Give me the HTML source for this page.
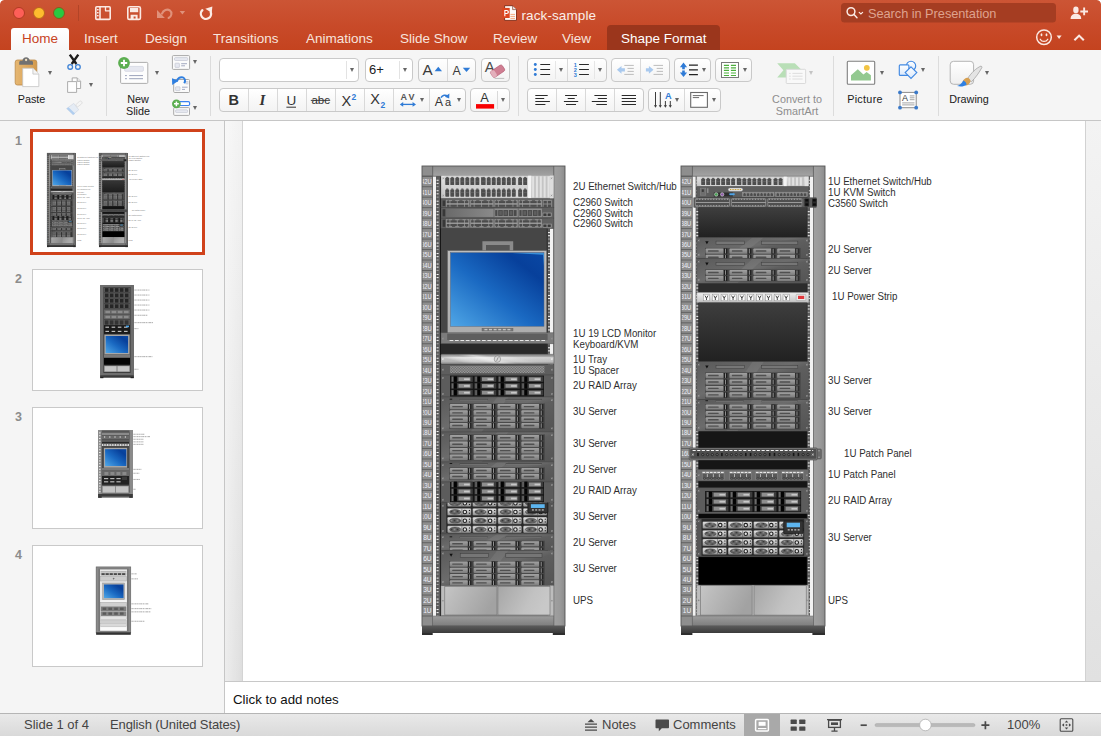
<!DOCTYPE html>
<html>
<head>
<meta charset="utf-8">
<title>rack-sample</title>
<style>
*{box-sizing:border-box;margin:0;padding:0}
html,body{width:1101px;height:736px;overflow:hidden;background:#f5f5f5;font-family:"Liberation Sans",sans-serif;}
.abs{position:absolute}
#titlebar{position:absolute;left:0;top:0;width:1101px;height:50px;background:linear-gradient(#cc5535 0px,#c84a29 26px,#c4431f 50px);}
.tab{position:absolute;top:30px;height:18px;line-height:18px;font-size:13.5px;color:#f7e4dd;white-space:nowrap}
#hometab{position:absolute;left:11px;top:28px;width:58px;height:23px;background:linear-gradient(#ffffff,#f6f6f6);border-radius:3px 3px 0 0}
#sftab{position:absolute;left:607px;top:25px;width:113px;height:25px;background:#9b361c;border-radius:4px 4px 0 0}
#ribbon{position:absolute;left:0;top:50px;width:1101px;height:71px;background:#f5f5f5;border-bottom:1px solid #c6c6c6}
.btn{position:absolute;background:linear-gradient(#ffffff,#f3f3f3);border:1px solid #c9c9c9;border-radius:4px}
.vdiv{position:absolute;width:1px;background:#d9d9d9}
.sep{position:absolute;width:1px;background:#dcdcdc;top:56px;height:60px}
.lbl{position:absolute;font-size:10.8px;color:#1a1a1a;text-align:center;white-space:nowrap;line-height:12px}
.arr{position:absolute;width:0;height:0;margin-left:0.5px;border-left:2.9px solid transparent;border-right:2.9px solid transparent;border-top:4px solid #666}
#leftpanel{position:absolute;left:0;top:121px;width:224px;height:592px;background:#f5f5f5}
#lpborder{position:absolute;left:224px;top:121px;width:1px;height:592px;background:#c6c6c6}
#strip{position:absolute;left:225px;top:121px;width:18px;height:560px;border-right:1px solid #d4d4d4;background:linear-gradient(90deg,rgba(255,255,255,0.45),rgba(255,255,255,0)),linear-gradient(180deg,#f2f2f2,#dedede)}
#rstrip{position:absolute;left:1085px;top:121px;width:16px;height:560px;background:linear-gradient(180deg,#f3f3f3,#e1e1e1);border-left:1px solid #d2d2d2}
#slide{position:absolute;left:243px;top:121px;width:842px;height:560px;background:#fff}
#notes{position:absolute;left:225px;top:681px;width:876px;height:32px;background:#fff;border-top:1px solid #c8c8c8}
#notes span{position:absolute;left:8px;top:10px;font-size:13.3px;color:#111;line-height:15px}
#status{position:absolute;left:0;top:713px;width:1101px;height:23px;background:linear-gradient(#e9e9e9,#d9d9d9);border-top:1px solid #b5b5b5}
.st{position:absolute;top:3px;font-size:13px;color:#444;line-height:15px;white-space:nowrap}
.num{position:absolute;left:15px;font-size:12.5px;font-weight:bold;color:#8c8c8c;line-height:14px}
.thumb{position:absolute;left:32px;width:171px;height:122px;background:#fff;border:1px solid #c9c9c9}
svg{position:absolute;left:0;top:0;overflow:visible}
</style>
</head>
<body>

<div id="leftpanel"></div>
<div id="lpborder"></div>
<div id="strip"></div>
<div id="slide"></div>
<div id="rstrip"></div>
<div id="notes"><span>Click to add notes</span></div>
<div id="status">
  <div class="st" style="left:24px">Slide 1 of 4</div>
  <div class="st" style="left:110px;letter-spacing:-0.12px">English (United States)</div>
  <div class="st" style="left:602px">Notes</div>
  <div class="st" style="left:673px">Comments</div>
  <div class="st" style="left:1007px">100%</div>
  <div class="abs" style="left:744px;top:0;width:36px;height:22px;background:#a9a9a9"></div>
  <svg width="1101" height="22" viewBox="0 713 1101 22" style="top:0">
    <!-- notes icon -->
    <g stroke="#4a4a4a" stroke-width="1.2"><path d="M585 723.2h12M585 726.200h12M585 729.200h12"/></g>
    <path d="M587.400 721.200l3.600-3.200l3.600 3.200z" fill="#4a4a4a"/>
    <!-- comments icon -->
    <path d="M656.500 718.600h11.500c0.600 0 1 0.400 1 1v6.600c0 0.600-0.400 1-1 1h-6.200l-3 3v-3h-2.300c-0.600 0-1-0.400-1-1v-6.600c0-0.600 0.400-1 1-1z" fill="#4a4a4a"/>
    <!-- normal view (selected) -->
    <rect x="755.600" y="718.400" width="12.800" height="11.600" rx="1" fill="none" stroke="#fff" stroke-width="1.500"/>
    <rect x="758.600" y="720.800" width="7" height="4" fill="#fff"/>
    <path d="M758 727.600h8.400" stroke="#fff" stroke-width="1.200"/>
    <!-- grid view -->
    <g fill="#4a4a4a"><rect x="790.600" y="718.600" width="6.200" height="4.400" rx="0.600"/><rect x="799.200" y="718.600" width="6.200" height="4.400" rx="0.600"/><rect x="790.600" y="725.400" width="6.200" height="4.400" rx="0.600"/><rect x="799.200" y="725.400" width="6.200" height="4.400" rx="0.600"/></g>
    <!-- slideshow -->
    <g fill="none" stroke="#4a4a4a" stroke-width="1.300"><rect x="828.600" y="719.200" width="11.800" height="7.200"/><path d="M827 718.600h15M834.500 726.400v3.400M831.400 730.200h6.200"/></g>
    <rect x="831" y="721.400" width="7" height="2.600" fill="#4a4a4a"/>
    <!-- zoom -->
    <path d="M860.600 724.200h6.200" stroke="#4a4a4a" stroke-width="1.700"/>
    <path d="M981.400 724.200h8M985.400 720.200v8" stroke="#4a4a4a" stroke-width="1.700"/>
    <rect x="875" y="722.600" width="100" height="3" rx="1.500" fill="#b9b9b9" stroke="#a6a6a6" stroke-width="0.500"/>
    <circle cx="925.400" cy="724" r="5.800" fill="#fff" stroke="#b0b0b0" stroke-width="0.800"/>
    <!-- fit -->
    <g fill="none" stroke="#4a4a4a" stroke-width="1.100"><rect x="1060.200" y="717.700" width="12.600" height="12.600" rx="1"/></g>
    <g fill="#4a4a4a"><path d="M1066.500 719.400l1.800 2.200h-3.600zM1066.500 728.600l1.800-2.200h-3.600zM1061.900 724l2.200-1.800v3.600zM1071.100 724l-2.200-1.800v3.600z"/><rect x="1065.700" y="723.200" width="1.600" height="1.600"/></g>
  </svg>
</div>
<div class="num" style="top:134px">1</div>
<div class="num" style="top:272px">2</div>
<div class="num" style="top:410px">3</div>
<div class="num" style="top:548px">4</div>
<div class="abs" style="left:30px;top:129px;width:175px;height:126px;background:#fff;border:3px solid #d0421b"></div>
<div class="thumb" style="top:269px"></div>
<div class="thumb" style="top:407px"></div>
<div class="thumb" style="top:545px"></div>

<div id="titlebar">
  <div class="abs" style="left:0;top:0;width:4px;height:4px;background:radial-gradient(circle at 4px 4px,rgba(255,255,255,0) 3.4px,#fff 4.2px)"></div>
  <div class="abs" style="left:1097px;top:0;width:4px;height:4px;background:radial-gradient(circle at 0px 4px,rgba(255,255,255,0) 3.4px,#fff 4.2px)"></div>
  <!-- traffic lights -->
  <div class="abs" style="left:12.5px;top:6.5px;width:12.6px;height:12.6px;border-radius:6.3px;background:#fe5f58;border:0.8px solid #b03a22"></div>
  <div class="abs" style="left:32.5px;top:6.5px;width:12.6px;height:12.6px;border-radius:6.3px;background:#febc2e;border:0.8px solid #b9671c"></div>
  <div class="abs" style="left:52.5px;top:6.5px;width:12.6px;height:12.6px;border-radius:6.3px;background:#29c941;border:0.8px solid #8a5a1c"></div>
  <div class="abs" style="left:78px;top:5px;width:1px;height:16px;background:#b24427"></div>
  <svg width="1101" height="50" viewBox="0 0 1101 50">
    <!-- sidebar/page icon -->
    <g fill="none" stroke="#fbe9e3" stroke-width="1.6" stroke-linejoin="round">
      <rect x="95.8" y="6.8" width="14.4" height="12.6" rx="1"/>
      <path d="M100 7v12" />
      <path d="M105.5 7v3.8h4.6" stroke-width="1.3"/>
    </g>
    <g fill="#fbe9e3"><rect x="97" y="9" width="1.6" height="1.4"/><rect x="97" y="12" width="1.6" height="1.4"/><rect x="97" y="15" width="1.6" height="1.4"/></g>
    <!-- save icon -->
    <g fill="none" stroke="#fbe9e3" stroke-width="1.6" stroke-linejoin="round">
      <rect x="127.8" y="6.8" width="12.6" height="12.6" rx="1.5"/>
    </g>
    <rect x="130" y="8" width="8.2" height="4.2" fill="#fbe9e3"/>
    <path d="M130.6 19v-4.2h7v4.2h-2v-2.4h-2v2.4z" fill="#fbe9e3"/>
    <!-- undo (faded) -->
    <path d="M162 13.600C163.400 10 167.200 8.600 169.800 10.400C172.400 12.300 171.800 16.400 168.600 18" fill="none" stroke="#e0917a" stroke-width="2.100" stroke-linecap="round"/>
    <path d="M157 9.900v8h7.900z" fill="#e0917a"/>
    <path d="M179.700 10.900h5.400l-2.700 3.700z" fill="#e0917a"/>
    <!-- redo -->
    <path d="M202.400 10.200A5.100 5.100 0 1 0 210.700 12" fill="none" stroke="#fcebe5" stroke-width="2.300" stroke-linecap="round"/>
    <path d="M205.300 8.700l7.100-2.300l-0.700 6.400z" fill="#fcebe5"/>
    <!-- ppt doc icon -->
    <g>
      <path d="M504.6 5.7h8l3.900 3.900v10.800h-11.900z" fill="#fdfaf8" stroke="#7d2712" stroke-width="0.9" stroke-linejoin="round"/>
      <path d="M512.600 5.700v3.900h3.900" fill="#e9e4e2" stroke="#7d2712" stroke-width="0.6"/>
      <g stroke="#f0a070" stroke-width="0.9"><path d="M510.400 14.400h4.600M510.400 16.400h4.600M510.400 18.400h4.600"/></g>
      <rect x="502.200" y="7.900" width="7.500" height="10.100" fill="#dc4520"/>
      <path d="M504.300 16.200v-6.200h2.300c1.500 0 2.300 0.900 2.300 2s-0.800 2-2.300 2h-1.200v2.200z M505.400 11v2h1.100c0.700 0 1.100-0.400 1.100-1s-0.400-1-1.100-1z" fill="#fff" fill-rule="evenodd"/>
    </g>
    <!-- search box -->
    <rect x="841" y="3" width="215" height="19.5" rx="3.5" fill="#a53d22"/>
    <g fill="none" stroke="#fbe9e3" stroke-width="1.5" stroke-linecap="round">
      <circle cx="851" cy="11.6" r="3.9"/>
      <path d="M854 14.6l3 3.2"/>
      <path d="M859.2 12.3l1.7 1.7l1.7-1.7" stroke-width="1.2"/>
    </g>
    <!-- share icon -->
    <g fill="#fbe9e3">
      <ellipse cx="1075.900" cy="9.900" rx="2.700" ry="3.300"/>
      <path d="M1070.600 19c0-3.900 2.300-5.300 5.300-5.300s5.300 1.400 5.300 5.300z"/>
      <path d="M1080.300 10.500h2.900v-2.900h1.900v2.900h2.900v1.900h-2.900v2.900h-1.900v-2.900h-2.900z"/>
    </g>
    <!-- smiley -->
    <g fill="none" stroke="#fbe9e3" stroke-width="1.5">
      <circle cx="1044" cy="37.200" r="7.300"/>
      <path d="M1040.200 39.200c1.600 3 6 3 7.600 0" stroke-linecap="round" stroke-width="1.3"/>
    </g>
    <ellipse cx="1041.500" cy="34.800" rx="0.900" ry="1.500" fill="#fbe9e3"/><ellipse cx="1046.500" cy="34.800" rx="0.900" ry="1.500" fill="#fbe9e3"/>
    <path d="M1056.6 35.4h5l-2.5 3.6z" fill="#fbe9e3"/>
    <path d="M1074.4 40.2l4.7-4.6l4.7 4.6" fill="none" stroke="#fbe9e3" stroke-width="2.1"/>
  </svg>
  <div class="abs" style="left:521.5px;top:6.5px;font-size:13.5px;color:#fbeee9;line-height:18px;letter-spacing:0.1px">rack-sample</div>
  <div class="abs" style="left:868px;top:5px;font-size:12.8px;color:#dfa28e;line-height:18px;letter-spacing:-0.05px">Search in Presentation</div>
  <div id="hometab"></div>
  <div id="sftab"></div>
  <div class="tab" style="left:22px;color:#c8431f">Home</div>
  <div class="tab" style="left:84px">Insert</div>
  <div class="tab" style="left:145px">Design</div>
  <div class="tab" style="left:213px">Transitions</div>
  <div class="tab" style="left:306px">Animations</div>
  <div class="tab" style="left:400px">Slide Show</div>
  <div class="tab" style="left:493px">Review</div>
  <div class="tab" style="left:562px">View</div>
  <div class="tab" style="left:621px;color:#fff">Shape Format</div>
</div>

<div id="ribbon"></div>
<!-- separators -->
<div class="sep" style="left:106px"></div>
<div class="sep" style="left:210px"></div>
<div class="sep" style="left:518px"></div>
<div class="sep" style="left:833px"></div>
<div class="sep" style="left:938px"></div>
<!-- button groups row1 -->
<div class="btn" style="left:219px;top:58px;width:140px;height:24px;background:#fff"></div>
<div class="vdiv" style="left:346px;top:61px;height:18px;background:#e3e3e3"></div>
<div class="btn" style="left:365px;top:58px;width:48px;height:24px;background:#fff"></div>
<div class="vdiv" style="left:399px;top:61px;height:18px;background:#e3e3e3"></div>
<div class="btn" style="left:417.5px;top:58px;width:58.5px;height:24px"></div>
<div class="vdiv" style="left:446.5px;top:59px;height:22px"></div>
<div class="btn" style="left:480.5px;top:58px;width:29.5px;height:24px"></div>
<!-- row2 -->
<div class="btn" style="left:219px;top:88px;width:247px;height:24px"></div>
<div class="vdiv" style="left:248px;top:89px;height:22px"></div>
<div class="vdiv" style="left:277px;top:89px;height:22px"></div>
<div class="vdiv" style="left:306px;top:89px;height:22px"></div>
<div class="vdiv" style="left:335px;top:89px;height:22px"></div>
<div class="vdiv" style="left:364px;top:89px;height:22px"></div>
<div class="vdiv" style="left:393px;top:89px;height:22px"></div>
<div class="vdiv" style="left:429px;top:89px;height:22px"></div>
<div class="btn" style="left:470px;top:88px;width:40px;height:24px"></div>
<div class="vdiv" style="left:497px;top:91px;height:18px"></div>
<!-- paragraph row1 -->
<div class="btn" style="left:527px;top:58px;width:80px;height:24px"></div>
<div class="vdiv" style="left:555px;top:61px;height:18px;background:#e6e6e6"></div>
<div class="vdiv" style="left:567px;top:59px;height:22px"></div>
<div class="vdiv" style="left:594px;top:61px;height:18px;background:#e6e6e6"></div>
<div class="btn" style="left:611px;top:58px;width:59px;height:24px"></div>
<div class="vdiv" style="left:640px;top:59px;height:22px"></div>
<div class="btn" style="left:674px;top:58px;width:37px;height:24px"></div>
<div class="btn" style="left:715px;top:58px;width:37px;height:24px"></div>
<!-- paragraph row2 -->
<div class="btn" style="left:527px;top:88px;width:117px;height:24px"></div>
<div class="vdiv" style="left:556px;top:89px;height:22px"></div>
<div class="vdiv" style="left:585px;top:89px;height:22px"></div>
<div class="vdiv" style="left:614px;top:89px;height:22px"></div>
<div class="btn" style="left:648px;top:88px;width:73px;height:24px"></div>
<div class="vdiv" style="left:684px;top:89px;height:22px"></div>
<!-- labels -->
<div class="lbl" style="left:11px;top:93px;width:41px">Paste</div>
<div class="lbl" style="left:118px;top:93px;width:40px">New</div>
<div class="lbl" style="left:118px;top:105px;width:40px">Slide</div>
<div class="lbl" style="left:762px;top:93px;width:70px;color:#8d8d8d">Convert to</div>
<div class="lbl" style="left:762px;top:105px;width:70px;color:#8d8d8d">SmartArt</div>
<div class="lbl" style="left:840px;top:93px;width:50px;letter-spacing:0.3px">Picture</div>
<div class="lbl" style="left:944px;top:93px;width:50px">Drawing</div>
<div class="abs" style="left:369px;top:62px;font-size:13px;line-height:16px;color:#222">6+</div>
<!-- dropdown arrows -->
<div class="arr" style="left:47px;top:71px"></div>
<div class="arr" style="left:88px;top:83px"></div>
<div class="arr" style="left:154px;top:71px"></div>
<div class="arr" style="left:192px;top:60px"></div>
<div class="arr" style="left:192.500px;top:106px"></div>
<div class="arr" style="left:349px;top:68px"></div>
<div class="arr" style="left:402px;top:68px"></div>
<div class="arr" style="left:419px;top:98px"></div>
<div class="arr" style="left:456px;top:98px"></div>
<div class="arr" style="left:500px;top:98px"></div>
<div class="arr" style="left:558px;top:68px"></div>
<div class="arr" style="left:597px;top:68px"></div>
<div class="arr" style="left:701px;top:68px"></div>
<div class="arr" style="left:742px;top:68px"></div>
<div class="arr" style="left:674px;top:98px"></div>
<div class="arr" style="left:711px;top:98px"></div>
<div class="arr" style="left:808.7px;top:71.200px;border-top-color:#c4c4c4"></div>
<div class="arr" style="left:879.300px;top:71px"></div>
<div class="arr" style="left:920px;top:68px"></div>
<div class="arr" style="left:984px;top:71px"></div>

<svg width="1101" height="121" viewBox="0 0 1101 121">
<defs>
<linearGradient id="clipg" x1="0" x2="1"><stop offset="0" stop-color="#e6b772"/><stop offset="1" stop-color="#d39a4c"/></linearGradient>
</defs>
<!-- Paste -->
<rect x="15.200" y="60" width="21.600" height="25" rx="2.200" fill="url(#clipg)" stroke="#bb8946" stroke-width="0.8"/>
<path d="M19.200 64.800v-2.400c0-1 0.700-1.700 1.700-1.700h1.500c0.300-2.300 1.700-3.500 3.700-3.500s3.400 1.200 3.700 3.500h1.500c1 0 1.700 0.700 1.700 1.700v2.400z" fill="#717171"/>
<circle cx="26.100" cy="60" r="1.150" fill="#f3e2c4"/>
<path d="M22.700 68.200h10.200l5.900 5.900v12.500h-16.100z" fill="#fff" stroke="#c4c4c4" stroke-width="0.8"/>
<path d="M32.900 68.200v5.900h5.900" fill="#f4f4f4" stroke="#c4c4c4" stroke-width="0.8"/>
<!-- scissors -->
<g fill="none" stroke="#1c1c1c" stroke-width="2.400" stroke-linecap="butt"><path d="M69.800 54.600l6.600 9.400M78.300 54.600l-6.600 9.400"/></g>
<g fill="none" stroke="#3d82d6" stroke-width="1.300"><circle cx="70.200" cy="66.900" r="2.350"/><circle cx="77.900" cy="66.900" r="2.350"/></g>
<!-- copy -->
<g fill="#fdfdfd" stroke="#a4a4a4" stroke-width="0.9"><path d="M72.200 77.900h5l3.400 3.400v7.200h-8.400z"/><path d="M77.200 77.900v3.400h3.400" fill="#f0f0f0"/><path d="M67.600 81.600h9v10.800h-9z"/></g>
<!-- format painter (faded) -->
<g opacity="0.85">
<path d="M66.600 108.600l7.200-5.200l4.900 6.400l-5.600 4.700z" fill="#e3ebf5" stroke="#c6cfdb" stroke-width="0.6"/>
<path d="M66.600 108.600l1.900-1.400l6.600 6.300l-2 1.600z" fill="#a6c8ee"/>
<path d="M75.700 104.800l3.600-3.300c0.800-0.700 2-0.500 2.500 0.300c0.500 0.800 0.300 1.700-0.500 2.300l-3.900 3z" fill="#f6f6f6" stroke="#cdcdcd" stroke-width="0.6"/>
</g>
<!-- New slide -->
<rect x="120.600" y="62.400" width="27.200" height="21" rx="1" fill="#fdfdfd" stroke="#adadad" stroke-width="1"/>
<rect x="124.600" y="66.400" width="18.800" height="4.900" rx="1" fill="#e6e8f0" stroke="#c8cbd8" stroke-width="0.6"/>
<g stroke="#9ca3bb" stroke-width="1"><path d="M125 75.600h1.900M129.200 75.600h13.800M125 78.700h1.900M129.200 78.700h13.800"/></g>
<circle cx="124" cy="63" r="5.900" fill="#5bae50"/>
<path d="M120.800 63h6.400M124 59.800v6.400" stroke="#fff" stroke-width="1.800"/>
<!-- layout -->
<rect x="172.400" y="55.600" width="17.200" height="13.800" rx="1" fill="#fbfbfb" stroke="#a8a8a8" stroke-width="1"/>
<rect x="174.500" y="57.600" width="13.200" height="2.900" rx="0.900" fill="#e6e8f0" stroke="#bcbfcc" stroke-width="0.6"/>
<rect x="175" y="63.200" width="4.400" height="4.200" rx="0.500" fill="#e6e8f0" stroke="#bcbfcc" stroke-width="0.6"/>
<path d="M181.200 63.700h5.800M181.200 65.800h3.800" stroke="#9ca3bb" stroke-width="0.9"/>
<!-- reset -->
<rect x="173.700" y="79.500" width="15.800" height="13" rx="1" fill="#fbfbfb" stroke="#a8a8a8" stroke-width="1"/>
<rect x="186" y="81.600" width="2" height="2.400" fill="#e6e8f0" stroke="#bcbfcc" stroke-width="0.500"/>
<rect x="175.600" y="86.800" width="4.400" height="3.800" rx="0.500" fill="#e6e8f0" stroke="#bcbfcc" stroke-width="0.6"/>
<path d="M182 87.200h5.600M182 89.400h3" stroke="#9ca3bb" stroke-width="0.9"/>
<path d="M176.800 81.600c0.600-3.600 3.600-5 6-4.200c2.200 0.800 3 3.400 1.400 5.800" fill="none" stroke="#2f7fe0" stroke-width="2"/>
<path d="M172 78.200l6.600 2.600l-6.400 4.200z" fill="#2f7fe0"/>
<!-- section -->
<rect x="173.700" y="107.600" width="15.800" height="7.800" rx="1" fill="#fbfbfb" stroke="#a8a8a8" stroke-width="1"/>
<rect x="175.600" y="109.800" width="12" height="2.800" rx="0.900" fill="#e6e8f0" stroke="#bcbfcc" stroke-width="0.6"/>
<rect x="179" y="101.700" width="10.600" height="3.800" rx="1.200" fill="#fff" stroke="#3b82f0" stroke-width="1.200"/>
<circle cx="176.400" cy="103.800" r="4.400" fill="#5bae50"/>
<path d="M174 103.800h4.800M176.400 101.400v4.800" stroke="#fff" stroke-width="1.500"/>
<!-- A up / A down -->
<g font-family="Liberation Sans" fill="#3a3a3a"><text x="422.600" y="75" font-size="15.200">A</text><text x="452.600" y="74.700" font-size="12.400">A</text></g>
<path d="M434.600 71.200h7.400l-3.700-4.400z" fill="#2f7bd6"/>
<path d="M462.800 67.800h7.400l-3.700 4.200z" fill="#2f7bd6"/>
<!-- clear formatting -->
<text x="484.800" y="71.800" font-family="Liberation Sans" font-size="14.800" fill="#4a4a4a">A</text>
<g transform="translate(497.600 71.200) rotate(-34)"><rect x="-7" y="-3.600" width="14" height="7.200" rx="1.800" fill="#cf7e92" stroke="#b2576f" stroke-width="0.6"/><rect x="-7" y="-3.600" width="4.600" height="7.200" rx="1.800" fill="#e3afbb"/></g>
<path d="M494.600 78.400h9.600" stroke="#b9b9b9" stroke-width="0.9"/>
<!-- B I U abc X2 X2 -->
<g font-family="Liberation Sans" fill="#333">
<text x="228.600" y="105.200" font-size="14.500" font-weight="bold">B</text>
<text x="259.400" y="105.200" font-size="15" font-style="italic" font-family="Liberation Serif" font-weight="bold">I</text>
<text x="286.600" y="104.600" font-size="13.500">U</text>
<text x="311.400" y="104" font-size="11.500">abc</text>
<text x="341.600" y="106.400" font-size="14.500">X</text>
<text x="370.200" y="104.400" font-size="14.500">X</text>
<text x="400.400" y="99.800" font-size="9" font-weight="bold" fill="#555">A</text><text x="408.400" y="99.800" font-size="9" font-weight="bold" fill="#555">V</text>
<text x="434.800" y="105.500" font-size="12.400">A</text><text x="445" y="105.500" font-size="11">a</text>
<text x="480.200" y="101.900" font-size="12.800">A</text>
</g>
<path d="M286.400 107.200h9.600" stroke="#333" stroke-width="1"/>
<path d="M310.800 100.400h19.400" stroke="#333" stroke-width="0.9"/>
<g font-family="Liberation Sans" fill="#2f7bd6" font-weight="bold"><text x="351.400" y="99.800" font-size="8.500">2</text><text x="380.400" y="108" font-size="8.500">2</text></g>
<g stroke="#2f7bd6" stroke-width="1.300" fill="#2f7bd6"><path d="M401.800 104.400h12.400" /><path d="M399.800 104.400l3.400-2.400v4.800zM416 104.400l-3.400-2.400v4.800z" stroke="none"/></g>
<path d="M441 97.600c1.400-2.600 4.600-3.200 6.600-1.400" fill="none" stroke="#2f7bd6" stroke-width="1.500"/><path d="M449.400 93.400l-0.200 5.200l-4.400-1.800z" fill="#2f7bd6"/>
<rect x="476" y="104.100" width="18.100" height="4.500" fill="#f80000"/>
<!-- bullets -->
<g fill="#2f7bd6"><circle cx="535.300" cy="64.500" r="1.450"/><circle cx="535.300" cy="69.500" r="1.450"/><circle cx="535.300" cy="74.500" r="1.450"/></g>
<g stroke="#2a2a2a" stroke-width="1.050"><path d="M540.300 64.500h9.800M540.300 69.500h9.800M540.300 74.500h9.800"/></g>
<g font-family="Liberation Sans" fill="#2f7bd6" font-size="5.600" font-weight="bold"><text x="573.700" y="66.500">1</text><text x="573.700" y="71.500">2</text><text x="573.700" y="76.500">3</text></g>
<g stroke="#2a2a2a" stroke-width="1.050"><path d="M579.100 64.500h9.800M579.100 69.500h9.800M579.100 74.500h9.800"/></g>
<!-- indent (faded) -->
<g stroke="#bcbcbc" stroke-width="1"><path d="M624.300 65.400h9.500M627.500 68.400h6.300M627.500 71.400h6.300M624.300 74.400h9.500"/><path d="M653.500 65.400h9.500M656.700 68.400h6.300M656.700 71.400h6.300M653.500 74.400h9.500"/></g>
<path d="M616.900 69.800l4.600-3.900v2.300h3.400v3.200h-3.400v2.300z" fill="#a9c9ee"/>
<path d="M653.500 69.800l-4.600-3.900v2.300h-3v3.200h3v2.300z" fill="#a9c9ee"/>
<!-- line spacing -->
<g stroke="#222" stroke-width="1.300"><path d="M689 65.100h8.900M689 69.800h8.900M689 74.600h8.900"/></g>
<path d="M683.500 62.600l3.600 4.600h-2.300v2h-2.600v-2h-2.300zM683.500 77l3.600-4.600h-2.300v-2h-2.600v2h-2.300z" fill="#2f7bd6"/>
<!-- columns -->
<rect x="721.500" y="62.500" width="17" height="15" fill="#fff" stroke="#7a7a7a" stroke-width="1"/>
<g stroke="#4caf3c" stroke-width="1.100"><path d="M723.900 65.400h5.100M723.900 67.900h5.100M723.900 70.400h5.100M723.900 73h5.100M723.900 75.500h5.100M730.900 65.400h5.100M730.900 67.900h5.100M730.900 70.400h5.100M730.900 73h5.100M730.900 75.500h5.100"/></g>
<!-- align -->
<g stroke="#2a2a2a" stroke-width="1.100">
<path d="M535.300 95.500h12.400M535.300 98.500h8.900M535.300 101.500h14.600M535.300 104.500h10.100"/>
<path d="M565.100 95.500h11.900M567.700 98.500h7M563.900 101.500h14.300M566 104.500h10"/>
<path d="M594.400 95.500h12.500M597.800 98.500h9.100M591.800 101.500h15.100M596.300 104.500h10.600"/>
<path d="M621.700 95.500h14.300M621.700 98.500h14.300M621.700 101.500h14.300M621.700 104.500h14.300"/>
</g>
<!-- text direction -->
<g stroke="#3c3c3c" stroke-width="1"><path d="M655.500 92v14M660.300 92v14M665.400 101v5M670.300 101v5"/></g>
<g fill="#3c3c3c"><path d="M653.900 105.200l1.600 2.600l1.600-2.600zM658.700 105.200l1.600 2.600l1.600-2.600zM663.800 105.200l1.600 2.600l1.600-2.600zM668.700 105.200l1.600 2.600l1.600-2.600z"/></g>
<text x="665" y="98.600" font-family="Liberation Sans" font-size="9.200" font-weight="bold" fill="#2f7bd6">A</text>
<rect x="690.700" y="92.500" width="16.700" height="14.800" fill="#fff" stroke="#6a6a6a" stroke-width="1.100"/>
<path d="M692.800 95.600h10.800M692.800 97.600h6.300" stroke="#6a6a6a" stroke-width="1"/>
<!-- convert to smartart (faded) -->
<path d="M777.200 63.200h17.600l7.200 7.100l-7.200 7.100h-17.600l6.200-7.100z" fill="#b9dfb7"/>
<rect x="786.200" y="69.300" width="19.400" height="14.200" rx="0.800" fill="#f9f9f9" stroke="#d6d6d6" stroke-width="0.9"/>
<g stroke="#dadada" stroke-width="0.9"><path d="M789.200 73.400h1.500M792.400 73.400h10.200M789.200 76.200h1.500M792.400 76.200h10.200M789.200 79h1.500M792.400 79h10.200"/></g>
<!-- picture -->
<rect x="847.300" y="61.300" width="27.400" height="23" rx="1" fill="#fff" stroke="#7f7f7f" stroke-width="1.100"/>
<path d="M851 80.600v-5.400l6.800-6l5.600 5.200l3.200-2.400l4.300 3.200v5.400z" fill="#93c990"/>
<circle cx="866.800" cy="67.800" r="2.900" fill="#f2c444"/>
<!-- shapes -->
<defs><linearGradient id="shp" x1="0" y1="0" x2="0" y2="1"><stop offset="0" stop-color="#ffffff"/><stop offset="1" stop-color="#dbe9fb"/></linearGradient></defs>
<g fill="url(#shp)" stroke="#4189e2" stroke-width="1.150"><circle cx="911" cy="65.900" r="4.700"/><rect x="899.300" y="64.800" width="9.600" height="10.600" rx="1"/><path d="M911 66.800l5.800 5.800l-5.800 5.800l-5.800-5.800z"/></g>
<!-- text box -->
<rect x="900" y="92.400" width="16.200" height="15.300" fill="#fff" stroke="#8c8c8c" stroke-width="1"/>
<text x="902" y="101.200" font-family="Liberation Sans" font-size="9" fill="#333">A</text>
<path d="M909.800 95.900h4.700M909.800 97.800h4.700M909.800 99.700h4.700M902.200 102.900h12.300M902.200 104.900h12.300" stroke="#8d8d8d" stroke-width="0.800"/>
<g fill="#3a79c9"><circle cx="900" cy="92.400" r="1.900"/><circle cx="916.200" cy="92.400" r="1.900"/><circle cx="900" cy="107.700" r="1.900"/><circle cx="916.200" cy="107.700" r="1.900"/></g>
<!-- drawing -->
<defs><linearGradient id="drw" x1="0" y1="0" x2="0" y2="1"><stop offset="0" stop-color="#ffffff"/><stop offset="1" stop-color="#efefef"/></linearGradient></defs>
<rect x="950.200" y="61.300" width="23.400" height="23" rx="3.400" fill="url(#drw)" stroke="#b4b4b4" stroke-width="1"/>
<path d="M967.600 78.600c3.400-5.600 8.800-10.600 13.400-12.600c0.700 0.300 1 0.800 0.900 1.500c-2.300 4.400-6.400 10.400-10.600 14.400z" fill="#e4e4e4" stroke="#9a9a9a" stroke-width="0.700"/>
<ellipse cx="966.600" cy="81.600" rx="3.900" ry="3.300" transform="rotate(-40 966.600 81.600)" fill="#d7a052"/>
<path d="M963.300 80.400c1.700 0.600 3.100 2.200 3.300 4.300c-2.500 1.900-6.100 2.200-9.600 1.300c2.900-0.900 4.700-2.900 6.300-5.600z" fill="#2f80e2"/>
</svg>

<svg width="1101" height="736" viewBox="0 0 1101 736" style="pointer-events:none">
<defs>
<linearGradient id="gPost" x1="0" x2="1"><stop offset="0" stop-color="#a0a0a0"/><stop offset="0.6" stop-color="#999999"/><stop offset="1" stop-color="#8c8c8c"/></linearGradient>
<linearGradient id="gTop" x1="0" y1="0" x2="0" y2="1"><stop offset="0" stop-color="#8d8d8d"/><stop offset="1" stop-color="#a3a3a3"/></linearGradient>
<linearGradient id="gBotBar" x1="0" y1="0" x2="0" y2="1"><stop offset="0" stop-color="#9c9c9c"/><stop offset="1" stop-color="#7c7c7c"/></linearGradient>
<linearGradient id="gBase" x1="0" y1="0" x2="0" y2="1"><stop offset="0" stop-color="#5a5a5a"/><stop offset="1" stop-color="#3a3a3a"/></linearGradient>
<linearGradient id="gSrv" x1="0" y1="0" x2="1" y2="1"><stop offset="0" stop-color="#5a5a5a"/><stop offset="0.45" stop-color="#6c6c6c"/><stop offset="0.55" stop-color="#5e5e5e"/><stop offset="1" stop-color="#545454"/></linearGradient>
<linearGradient id="gBay" x1="0" y1="0" x2="0" y2="1"><stop offset="0" stop-color="#a2a2a2"/><stop offset="1" stop-color="#7c7c7c"/></linearGradient>
<linearGradient id="gScreen" x1="0" y1="1" x2="1" y2="0"><stop offset="0" stop-color="#4fa6e6"/><stop offset="0.45" stop-color="#1a69c2"/><stop offset="0.8" stop-color="#07409b"/><stop offset="1" stop-color="#0a48a4"/></linearGradient>
<linearGradient id="gMonFrame" x1="0" y1="0" x2="0" y2="1"><stop offset="0" stop-color="#bdbdbd"/><stop offset="1" stop-color="#adadad"/></linearGradient>
<linearGradient id="gTray" x1="0" y1="0" x2="0" y2="1"><stop offset="0" stop-color="#858585"/><stop offset="0.2" stop-color="#a8a8a8"/><stop offset="0.34" stop-color="#e6e6e6"/><stop offset="0.75" stop-color="#cdcdcd"/><stop offset="1" stop-color="#909090"/></linearGradient>
<linearGradient id="gUps" x1="0" x2="1"><stop offset="0" stop-color="#c0c0c0"/><stop offset="0.45" stop-color="#a4a4a4"/><stop offset="1" stop-color="#c6c6c6"/></linearGradient>
<linearGradient id="gBlank" x1="0" y1="0" x2="0" y2="1"><stop offset="0" stop-color="#3e3e3e"/><stop offset="1" stop-color="#212121"/></linearGradient>
<linearGradient id="gHub" x1="0" y1="0" x2="0" y2="1"><stop offset="0" stop-color="#e4e4e4"/><stop offset="1" stop-color="#c2c2c2"/></linearGradient>
<linearGradient id="gDrv" x1="0" y1="0" x2="0" y2="1"><stop offset="0" stop-color="#e8e8e8"/><stop offset="0.5" stop-color="#bdbdbd"/><stop offset="1" stop-color="#8c8c8c"/></linearGradient>
<linearGradient id="gPStrip" x1="0" y1="0" x2="0" y2="1"><stop offset="0" stop-color="#f0f0f0"/><stop offset="1" stop-color="#c4c4c4"/></linearGradient>
<linearGradient id="gPanel" x1="0" x2="1"><stop offset="0" stop-color="#6a6a6a"/><stop offset="1" stop-color="#8a8a8a"/></linearGradient>
<linearGradient id="gUps1" x1="0" y1="0" x2="1" y2="0.3"><stop offset="0" stop-color="#c6c6c6"/><stop offset="0.25" stop-color="#bcbcbc"/><stop offset="1" stop-color="#a2a2a2"/></linearGradient>
<linearGradient id="gUps2" x1="0" y1="0" x2="1" y2="0.3"><stop offset="0" stop-color="#a6a6a6"/><stop offset="0.7" stop-color="#c2c2c2"/><stop offset="1" stop-color="#c8c8c8"/></linearGradient>
<linearGradient id="gTrayH" x1="0" x2="1" y1="0.3" y2="0"><stop offset="0" stop-color="#707070" stop-opacity="0.28"/><stop offset="0.2" stop-color="#ffffff" stop-opacity="0"/><stop offset="0.32" stop-color="#ffffff" stop-opacity="0.45"/><stop offset="0.44" stop-color="#ffffff" stop-opacity="0"/><stop offset="0.62" stop-color="#707070" stop-opacity="0.12"/><stop offset="1" stop-color="#707070" stop-opacity="0.25"/></linearGradient>
<pattern id="pMesh2" width="1.2" height="1.2" patternUnits="userSpaceOnUse"><rect width="1.2" height="1.2" fill="#8c8c8c"/><rect width="0.6" height="0.6" fill="#3a3a3a"/><rect x="0.6" y="0.6" width="0.6" height="0.6" fill="#3a3a3a"/></pattern>
<pattern id="pMesh" width="1.6" height="1.6" patternUnits="userSpaceOnUse"><rect width="1.6" height="1.6" fill="#a8a8a8"/><rect width="0.8" height="0.8" fill="#5c5c5c"/><rect x="0.8" y="0.8" width="0.8" height="0.8" fill="#5c5c5c"/></pattern>

<clipPath id="cSlide"><rect x="243" y="121" width="842" height="560"/></clipPath>
<clipPath id="cT1"><rect x="33" y="132" width="169" height="120"/></clipPath>
<g id="slidecontent">
<rect x="422" y="166" width="143" height="460" fill="#3a3a3a" />
<rect x="422" y="166" width="10.7" height="460" fill="#8e8e8e" />
<rect x="553.8" y="166" width="11.2" height="460" fill="url(#gPost)" />
<rect x="432.7" y="166" width="121.1" height="10.3" fill="url(#gTop)" />
<path d="M432.7 176.3L553.8 176.3" stroke="#5c5c5c" stroke-width="0.7" />
<clipPath id="cu422"><rect x="422.5" y="170" width="9.8" height="450"/></clipPath>
<g clip-path="url(#cu422)" font-size="6.6" text-anchor="end" fill="#eef0fa" font-family="Liberation Sans">
<text x="431.6" y="613.43">1U</text>
<text x="431.6" y="602.96">2U</text>
<text x="431.6" y="592.49">3U</text>
<text x="431.6" y="582.02">4U</text>
<text x="431.6" y="571.55">5U</text>
<text x="431.6" y="561.08">6U</text>
<text x="431.6" y="550.61">7U</text>
<text x="431.6" y="540.14">8U</text>
<text x="431.6" y="529.67">9U</text>
<text x="431.6" y="519.2" textLength="10.6" lengthAdjust="spacingAndGlyphs">10U</text>
<text x="431.6" y="508.73" textLength="10.6" lengthAdjust="spacingAndGlyphs">11U</text>
<text x="431.6" y="498.26" textLength="10.6" lengthAdjust="spacingAndGlyphs">12U</text>
<text x="431.6" y="487.79" textLength="10.6" lengthAdjust="spacingAndGlyphs">13U</text>
<text x="431.6" y="477.32" textLength="10.6" lengthAdjust="spacingAndGlyphs">14U</text>
<text x="431.6" y="466.85" textLength="10.6" lengthAdjust="spacingAndGlyphs">15U</text>
<text x="431.6" y="456.38" textLength="10.6" lengthAdjust="spacingAndGlyphs">16U</text>
<text x="431.6" y="445.91" textLength="10.6" lengthAdjust="spacingAndGlyphs">17U</text>
<text x="431.6" y="435.44" textLength="10.6" lengthAdjust="spacingAndGlyphs">18U</text>
<text x="431.6" y="424.97" textLength="10.6" lengthAdjust="spacingAndGlyphs">19U</text>
<text x="431.6" y="414.5" textLength="10.6" lengthAdjust="spacingAndGlyphs">20U</text>
<text x="431.6" y="404.03" textLength="10.6" lengthAdjust="spacingAndGlyphs">21U</text>
<text x="431.6" y="393.56" textLength="10.6" lengthAdjust="spacingAndGlyphs">22U</text>
<text x="431.6" y="383.09" textLength="10.6" lengthAdjust="spacingAndGlyphs">23U</text>
<text x="431.6" y="372.62" textLength="10.6" lengthAdjust="spacingAndGlyphs">24U</text>
<text x="431.6" y="362.15" textLength="10.6" lengthAdjust="spacingAndGlyphs">25U</text>
<text x="431.6" y="351.68" textLength="10.6" lengthAdjust="spacingAndGlyphs">26U</text>
<text x="431.6" y="341.21" textLength="10.6" lengthAdjust="spacingAndGlyphs">27U</text>
<text x="431.6" y="330.74" textLength="10.6" lengthAdjust="spacingAndGlyphs">28U</text>
<text x="431.6" y="320.27" textLength="10.6" lengthAdjust="spacingAndGlyphs">29U</text>
<text x="431.6" y="309.8" textLength="10.6" lengthAdjust="spacingAndGlyphs">30U</text>
<text x="431.6" y="299.33" textLength="10.6" lengthAdjust="spacingAndGlyphs">31U</text>
<text x="431.6" y="288.86" textLength="10.6" lengthAdjust="spacingAndGlyphs">32U</text>
<text x="431.6" y="278.39" textLength="10.6" lengthAdjust="spacingAndGlyphs">33U</text>
<text x="431.6" y="267.92" textLength="10.6" lengthAdjust="spacingAndGlyphs">34U</text>
<text x="431.6" y="257.45" textLength="10.6" lengthAdjust="spacingAndGlyphs">35U</text>
<text x="431.6" y="246.98" textLength="10.6" lengthAdjust="spacingAndGlyphs">36U</text>
<text x="431.6" y="236.51" textLength="10.6" lengthAdjust="spacingAndGlyphs">37U</text>
<text x="431.6" y="226.04" textLength="10.6" lengthAdjust="spacingAndGlyphs">38U</text>
<text x="431.6" y="215.57" textLength="10.6" lengthAdjust="spacingAndGlyphs">39U</text>
<text x="431.6" y="205.1" textLength="10.6" lengthAdjust="spacingAndGlyphs">40U</text>
<text x="431.6" y="194.63" textLength="10.6" lengthAdjust="spacingAndGlyphs">41U</text>
<text x="431.6" y="184.16" textLength="10.6" lengthAdjust="spacingAndGlyphs">42U</text>
</g>
<path d="M422 605.53L432.7 605.53" stroke="#5c5c5c" stroke-width="0.9" />
<path d="M422 595.06L432.7 595.06" stroke="#5c5c5c" stroke-width="0.9" />
<path d="M422 584.59L432.7 584.59" stroke="#5c5c5c" stroke-width="0.9" />
<path d="M422 574.12L432.7 574.12" stroke="#5c5c5c" stroke-width="0.9" />
<path d="M422 563.65L432.7 563.65" stroke="#5c5c5c" stroke-width="0.9" />
<path d="M422 553.18L432.7 553.18" stroke="#5c5c5c" stroke-width="0.9" />
<path d="M422 542.71L432.7 542.71" stroke="#5c5c5c" stroke-width="0.9" />
<path d="M422 532.24L432.7 532.24" stroke="#5c5c5c" stroke-width="0.9" />
<path d="M422 521.77L432.7 521.77" stroke="#5c5c5c" stroke-width="0.9" />
<path d="M422 511.3L432.7 511.3" stroke="#5c5c5c" stroke-width="0.9" />
<path d="M422 500.83L432.7 500.83" stroke="#5c5c5c" stroke-width="0.9" />
<path d="M422 490.36L432.7 490.36" stroke="#5c5c5c" stroke-width="0.9" />
<path d="M422 479.89L432.7 479.89" stroke="#5c5c5c" stroke-width="0.9" />
<path d="M422 469.42L432.7 469.42" stroke="#5c5c5c" stroke-width="0.9" />
<path d="M422 458.95L432.7 458.95" stroke="#5c5c5c" stroke-width="0.9" />
<path d="M422 448.48L432.7 448.48" stroke="#5c5c5c" stroke-width="0.9" />
<path d="M422 438.01L432.7 438.01" stroke="#5c5c5c" stroke-width="0.9" />
<path d="M422 427.54L432.7 427.54" stroke="#5c5c5c" stroke-width="0.9" />
<path d="M422 417.07L432.7 417.07" stroke="#5c5c5c" stroke-width="0.9" />
<path d="M422 406.6L432.7 406.6" stroke="#5c5c5c" stroke-width="0.9" />
<path d="M422 396.13L432.7 396.13" stroke="#5c5c5c" stroke-width="0.9" />
<path d="M422 385.66L432.7 385.66" stroke="#5c5c5c" stroke-width="0.9" />
<path d="M422 375.19L432.7 375.19" stroke="#5c5c5c" stroke-width="0.9" />
<path d="M422 364.72L432.7 364.72" stroke="#5c5c5c" stroke-width="0.9" />
<path d="M422 354.25L432.7 354.25" stroke="#5c5c5c" stroke-width="0.9" />
<path d="M422 343.78L432.7 343.78" stroke="#5c5c5c" stroke-width="0.9" />
<path d="M422 333.31L432.7 333.31" stroke="#5c5c5c" stroke-width="0.9" />
<path d="M422 322.84L432.7 322.84" stroke="#5c5c5c" stroke-width="0.9" />
<path d="M422 312.37L432.7 312.37" stroke="#5c5c5c" stroke-width="0.9" />
<path d="M422 301.9L432.7 301.9" stroke="#5c5c5c" stroke-width="0.9" />
<path d="M422 291.43L432.7 291.43" stroke="#5c5c5c" stroke-width="0.9" />
<path d="M422 280.96L432.7 280.96" stroke="#5c5c5c" stroke-width="0.9" />
<path d="M422 270.49L432.7 270.49" stroke="#5c5c5c" stroke-width="0.9" />
<path d="M422 260.02L432.7 260.02" stroke="#5c5c5c" stroke-width="0.9" />
<path d="M422 249.55L432.7 249.55" stroke="#5c5c5c" stroke-width="0.9" />
<path d="M422 239.08L432.7 239.08" stroke="#5c5c5c" stroke-width="0.9" />
<path d="M422 228.61L432.7 228.61" stroke="#5c5c5c" stroke-width="0.9" />
<path d="M422 218.14L432.7 218.14" stroke="#5c5c5c" stroke-width="0.9" />
<path d="M422 207.67L432.7 207.67" stroke="#5c5c5c" stroke-width="0.9" />
<path d="M422 197.2L432.7 197.2" stroke="#5c5c5c" stroke-width="0.9" />
<path d="M422 186.73L432.7 186.73" stroke="#5c5c5c" stroke-width="0.9" />
<path d="M422 176.26L432.7 176.26" stroke="#5c5c5c" stroke-width="0.9" />
<path d="M422 176.26L432.7 176.26" stroke="#5c5c5c" stroke-width="0.9" />
<path d="M422 616L432.7 616" stroke="#5c5c5c" stroke-width="0.9" />
<path d="M432.7 166L432.7 626" stroke="#5e5e5e" stroke-width="0.7" />
<path d="M553.8 166L553.8 626" stroke="#5e5e5e" stroke-width="0.7" />
<rect x="433" y="176.6" width="3.1" height="439.4" fill="#f2f2f2" />
<rect x="436.1" y="176.6" width="4.9" height="439.4" fill="#5c5c5c" />
<rect x="440.1" y="176.6" width="0.9" height="439.4" fill="#101010" />
<rect x="436.6" y="609.03" width="2" height="1" fill="#f8f8f8" />
<rect x="436.6" y="612.13" width="2" height="1" fill="#f8f8f8" />
<rect x="436.6" y="615.43" width="2" height="1" fill="#a8a8a8" />
<rect x="436.6" y="598.56" width="2" height="1" fill="#f8f8f8" />
<rect x="436.6" y="601.66" width="2" height="1" fill="#f8f8f8" />
<rect x="436.6" y="604.96" width="2" height="1" fill="#a8a8a8" />
<rect x="436.6" y="588.09" width="2" height="1" fill="#f8f8f8" />
<rect x="436.6" y="591.19" width="2" height="1" fill="#f8f8f8" />
<rect x="436.6" y="594.49" width="2" height="1" fill="#a8a8a8" />
<rect x="436.6" y="577.62" width="2" height="1" fill="#f8f8f8" />
<rect x="436.6" y="580.72" width="2" height="1" fill="#f8f8f8" />
<rect x="436.6" y="584.02" width="2" height="1" fill="#a8a8a8" />
<rect x="436.6" y="567.15" width="2" height="1" fill="#f8f8f8" />
<rect x="436.6" y="570.25" width="2" height="1" fill="#f8f8f8" />
<rect x="436.6" y="573.55" width="2" height="1" fill="#a8a8a8" />
<rect x="436.6" y="556.68" width="2" height="1" fill="#f8f8f8" />
<rect x="436.6" y="559.78" width="2" height="1" fill="#f8f8f8" />
<rect x="436.6" y="563.08" width="2" height="1" fill="#a8a8a8" />
<rect x="436.6" y="546.21" width="2" height="1" fill="#f8f8f8" />
<rect x="436.6" y="549.31" width="2" height="1" fill="#f8f8f8" />
<rect x="436.6" y="552.61" width="2" height="1" fill="#a8a8a8" />
<rect x="436.6" y="535.74" width="2" height="1" fill="#f8f8f8" />
<rect x="436.6" y="538.84" width="2" height="1" fill="#f8f8f8" />
<rect x="436.6" y="542.14" width="2" height="1" fill="#a8a8a8" />
<rect x="436.6" y="525.27" width="2" height="1" fill="#f8f8f8" />
<rect x="436.6" y="528.37" width="2" height="1" fill="#f8f8f8" />
<rect x="436.6" y="531.67" width="2" height="1" fill="#a8a8a8" />
<rect x="436.6" y="514.8" width="2" height="1" fill="#f8f8f8" />
<rect x="436.6" y="517.9" width="2" height="1" fill="#f8f8f8" />
<rect x="436.6" y="521.2" width="2" height="1" fill="#a8a8a8" />
<rect x="436.6" y="504.33" width="2" height="1" fill="#f8f8f8" />
<rect x="436.6" y="507.43" width="2" height="1" fill="#f8f8f8" />
<rect x="436.6" y="510.73" width="2" height="1" fill="#a8a8a8" />
<rect x="436.6" y="493.86" width="2" height="1" fill="#f8f8f8" />
<rect x="436.6" y="496.96" width="2" height="1" fill="#f8f8f8" />
<rect x="436.6" y="500.26" width="2" height="1" fill="#a8a8a8" />
<rect x="436.6" y="483.39" width="2" height="1" fill="#f8f8f8" />
<rect x="436.6" y="486.49" width="2" height="1" fill="#f8f8f8" />
<rect x="436.6" y="489.79" width="2" height="1" fill="#a8a8a8" />
<rect x="436.6" y="472.92" width="2" height="1" fill="#f8f8f8" />
<rect x="436.6" y="476.02" width="2" height="1" fill="#f8f8f8" />
<rect x="436.6" y="479.32" width="2" height="1" fill="#a8a8a8" />
<rect x="436.6" y="462.45" width="2" height="1" fill="#f8f8f8" />
<rect x="436.6" y="465.55" width="2" height="1" fill="#f8f8f8" />
<rect x="436.6" y="468.85" width="2" height="1" fill="#a8a8a8" />
<rect x="436.6" y="451.98" width="2" height="1" fill="#f8f8f8" />
<rect x="436.6" y="455.08" width="2" height="1" fill="#f8f8f8" />
<rect x="436.6" y="458.38" width="2" height="1" fill="#a8a8a8" />
<rect x="436.6" y="441.51" width="2" height="1" fill="#f8f8f8" />
<rect x="436.6" y="444.61" width="2" height="1" fill="#f8f8f8" />
<rect x="436.6" y="447.91" width="2" height="1" fill="#a8a8a8" />
<rect x="436.6" y="431.04" width="2" height="1" fill="#f8f8f8" />
<rect x="436.6" y="434.14" width="2" height="1" fill="#f8f8f8" />
<rect x="436.6" y="437.44" width="2" height="1" fill="#a8a8a8" />
<rect x="436.6" y="420.57" width="2" height="1" fill="#f8f8f8" />
<rect x="436.6" y="423.67" width="2" height="1" fill="#f8f8f8" />
<rect x="436.6" y="426.97" width="2" height="1" fill="#a8a8a8" />
<rect x="436.6" y="410.1" width="2" height="1" fill="#f8f8f8" />
<rect x="436.6" y="413.2" width="2" height="1" fill="#f8f8f8" />
<rect x="436.6" y="416.5" width="2" height="1" fill="#a8a8a8" />
<rect x="436.6" y="399.63" width="2" height="1" fill="#f8f8f8" />
<rect x="436.6" y="402.73" width="2" height="1" fill="#f8f8f8" />
<rect x="436.6" y="406.03" width="2" height="1" fill="#a8a8a8" />
<rect x="436.6" y="389.16" width="2" height="1" fill="#f8f8f8" />
<rect x="436.6" y="392.26" width="2" height="1" fill="#f8f8f8" />
<rect x="436.6" y="395.56" width="2" height="1" fill="#a8a8a8" />
<rect x="436.6" y="378.69" width="2" height="1" fill="#f8f8f8" />
<rect x="436.6" y="381.79" width="2" height="1" fill="#f8f8f8" />
<rect x="436.6" y="385.09" width="2" height="1" fill="#a8a8a8" />
<rect x="436.6" y="368.22" width="2" height="1" fill="#f8f8f8" />
<rect x="436.6" y="371.32" width="2" height="1" fill="#f8f8f8" />
<rect x="436.6" y="374.62" width="2" height="1" fill="#a8a8a8" />
<rect x="436.6" y="357.75" width="2" height="1" fill="#f8f8f8" />
<rect x="436.6" y="360.85" width="2" height="1" fill="#f8f8f8" />
<rect x="436.6" y="364.15" width="2" height="1" fill="#a8a8a8" />
<rect x="436.6" y="347.28" width="2" height="1" fill="#f8f8f8" />
<rect x="436.6" y="350.38" width="2" height="1" fill="#f8f8f8" />
<rect x="436.6" y="353.68" width="2" height="1" fill="#a8a8a8" />
<rect x="436.6" y="336.81" width="2" height="1" fill="#f8f8f8" />
<rect x="436.6" y="339.91" width="2" height="1" fill="#f8f8f8" />
<rect x="436.6" y="343.21" width="2" height="1" fill="#a8a8a8" />
<rect x="436.6" y="326.34" width="2" height="1" fill="#f8f8f8" />
<rect x="436.6" y="329.44" width="2" height="1" fill="#f8f8f8" />
<rect x="436.6" y="332.74" width="2" height="1" fill="#a8a8a8" />
<rect x="436.6" y="315.87" width="2" height="1" fill="#f8f8f8" />
<rect x="436.6" y="318.97" width="2" height="1" fill="#f8f8f8" />
<rect x="436.6" y="322.27" width="2" height="1" fill="#a8a8a8" />
<rect x="436.6" y="305.4" width="2" height="1" fill="#f8f8f8" />
<rect x="436.6" y="308.5" width="2" height="1" fill="#f8f8f8" />
<rect x="436.6" y="311.8" width="2" height="1" fill="#a8a8a8" />
<rect x="436.6" y="294.93" width="2" height="1" fill="#f8f8f8" />
<rect x="436.6" y="298.03" width="2" height="1" fill="#f8f8f8" />
<rect x="436.6" y="301.33" width="2" height="1" fill="#a8a8a8" />
<rect x="436.6" y="284.46" width="2" height="1" fill="#f8f8f8" />
<rect x="436.6" y="287.56" width="2" height="1" fill="#f8f8f8" />
<rect x="436.6" y="290.86" width="2" height="1" fill="#a8a8a8" />
<rect x="436.6" y="273.99" width="2" height="1" fill="#f8f8f8" />
<rect x="436.6" y="277.09" width="2" height="1" fill="#f8f8f8" />
<rect x="436.6" y="280.39" width="2" height="1" fill="#a8a8a8" />
<rect x="436.6" y="263.52" width="2" height="1" fill="#f8f8f8" />
<rect x="436.6" y="266.62" width="2" height="1" fill="#f8f8f8" />
<rect x="436.6" y="269.92" width="2" height="1" fill="#a8a8a8" />
<rect x="436.6" y="253.05" width="2" height="1" fill="#f8f8f8" />
<rect x="436.6" y="256.15" width="2" height="1" fill="#f8f8f8" />
<rect x="436.6" y="259.45" width="2" height="1" fill="#a8a8a8" />
<rect x="436.6" y="242.58" width="2" height="1" fill="#f8f8f8" />
<rect x="436.6" y="245.68" width="2" height="1" fill="#f8f8f8" />
<rect x="436.6" y="248.98" width="2" height="1" fill="#a8a8a8" />
<rect x="436.6" y="232.11" width="2" height="1" fill="#f8f8f8" />
<rect x="436.6" y="235.21" width="2" height="1" fill="#f8f8f8" />
<rect x="436.6" y="238.51" width="2" height="1" fill="#a8a8a8" />
<rect x="436.6" y="221.64" width="2" height="1" fill="#f8f8f8" />
<rect x="436.6" y="224.74" width="2" height="1" fill="#f8f8f8" />
<rect x="436.6" y="228.04" width="2" height="1" fill="#a8a8a8" />
<rect x="436.6" y="211.17" width="2" height="1" fill="#f8f8f8" />
<rect x="436.6" y="214.27" width="2" height="1" fill="#f8f8f8" />
<rect x="436.6" y="217.57" width="2" height="1" fill="#a8a8a8" />
<rect x="436.6" y="200.7" width="2" height="1" fill="#f8f8f8" />
<rect x="436.6" y="203.8" width="2" height="1" fill="#f8f8f8" />
<rect x="436.6" y="207.1" width="2" height="1" fill="#a8a8a8" />
<rect x="436.6" y="190.23" width="2" height="1" fill="#f8f8f8" />
<rect x="436.6" y="193.33" width="2" height="1" fill="#f8f8f8" />
<rect x="436.6" y="196.63" width="2" height="1" fill="#a8a8a8" />
<rect x="436.6" y="179.76" width="2" height="1" fill="#f8f8f8" />
<rect x="436.6" y="182.86" width="2" height="1" fill="#f8f8f8" />
<rect x="436.6" y="186.16" width="2" height="1" fill="#a8a8a8" />
<rect x="549.9" y="176.6" width="3.3" height="439.4" fill="#f2f2f2" />
<rect x="546.6" y="176.6" width="3.3" height="439.4" fill="#5c5c5c" />
<rect x="546.6" y="176.6" width="0.9" height="439.4" fill="#101010" />
<rect x="548" y="609.03" width="2" height="1" fill="#f8f8f8" />
<rect x="548" y="612.13" width="2" height="1" fill="#f8f8f8" />
<rect x="548" y="615.43" width="2" height="1" fill="#a8a8a8" />
<rect x="548" y="598.56" width="2" height="1" fill="#f8f8f8" />
<rect x="548" y="601.66" width="2" height="1" fill="#f8f8f8" />
<rect x="548" y="604.96" width="2" height="1" fill="#a8a8a8" />
<rect x="548" y="588.09" width="2" height="1" fill="#f8f8f8" />
<rect x="548" y="591.19" width="2" height="1" fill="#f8f8f8" />
<rect x="548" y="594.49" width="2" height="1" fill="#a8a8a8" />
<rect x="548" y="577.62" width="2" height="1" fill="#f8f8f8" />
<rect x="548" y="580.72" width="2" height="1" fill="#f8f8f8" />
<rect x="548" y="584.02" width="2" height="1" fill="#a8a8a8" />
<rect x="548" y="567.15" width="2" height="1" fill="#f8f8f8" />
<rect x="548" y="570.25" width="2" height="1" fill="#f8f8f8" />
<rect x="548" y="573.55" width="2" height="1" fill="#a8a8a8" />
<rect x="548" y="556.68" width="2" height="1" fill="#f8f8f8" />
<rect x="548" y="559.78" width="2" height="1" fill="#f8f8f8" />
<rect x="548" y="563.08" width="2" height="1" fill="#a8a8a8" />
<rect x="548" y="546.21" width="2" height="1" fill="#f8f8f8" />
<rect x="548" y="549.31" width="2" height="1" fill="#f8f8f8" />
<rect x="548" y="552.61" width="2" height="1" fill="#a8a8a8" />
<rect x="548" y="535.74" width="2" height="1" fill="#f8f8f8" />
<rect x="548" y="538.84" width="2" height="1" fill="#f8f8f8" />
<rect x="548" y="542.14" width="2" height="1" fill="#a8a8a8" />
<rect x="548" y="525.27" width="2" height="1" fill="#f8f8f8" />
<rect x="548" y="528.37" width="2" height="1" fill="#f8f8f8" />
<rect x="548" y="531.67" width="2" height="1" fill="#a8a8a8" />
<rect x="548" y="514.8" width="2" height="1" fill="#f8f8f8" />
<rect x="548" y="517.9" width="2" height="1" fill="#f8f8f8" />
<rect x="548" y="521.2" width="2" height="1" fill="#a8a8a8" />
<rect x="548" y="504.33" width="2" height="1" fill="#f8f8f8" />
<rect x="548" y="507.43" width="2" height="1" fill="#f8f8f8" />
<rect x="548" y="510.73" width="2" height="1" fill="#a8a8a8" />
<rect x="548" y="493.86" width="2" height="1" fill="#f8f8f8" />
<rect x="548" y="496.96" width="2" height="1" fill="#f8f8f8" />
<rect x="548" y="500.26" width="2" height="1" fill="#a8a8a8" />
<rect x="548" y="483.39" width="2" height="1" fill="#f8f8f8" />
<rect x="548" y="486.49" width="2" height="1" fill="#f8f8f8" />
<rect x="548" y="489.79" width="2" height="1" fill="#a8a8a8" />
<rect x="548" y="472.92" width="2" height="1" fill="#f8f8f8" />
<rect x="548" y="476.02" width="2" height="1" fill="#f8f8f8" />
<rect x="548" y="479.32" width="2" height="1" fill="#a8a8a8" />
<rect x="548" y="462.45" width="2" height="1" fill="#f8f8f8" />
<rect x="548" y="465.55" width="2" height="1" fill="#f8f8f8" />
<rect x="548" y="468.85" width="2" height="1" fill="#a8a8a8" />
<rect x="548" y="451.98" width="2" height="1" fill="#f8f8f8" />
<rect x="548" y="455.08" width="2" height="1" fill="#f8f8f8" />
<rect x="548" y="458.38" width="2" height="1" fill="#a8a8a8" />
<rect x="548" y="441.51" width="2" height="1" fill="#f8f8f8" />
<rect x="548" y="444.61" width="2" height="1" fill="#f8f8f8" />
<rect x="548" y="447.91" width="2" height="1" fill="#a8a8a8" />
<rect x="548" y="431.04" width="2" height="1" fill="#f8f8f8" />
<rect x="548" y="434.14" width="2" height="1" fill="#f8f8f8" />
<rect x="548" y="437.44" width="2" height="1" fill="#a8a8a8" />
<rect x="548" y="420.57" width="2" height="1" fill="#f8f8f8" />
<rect x="548" y="423.67" width="2" height="1" fill="#f8f8f8" />
<rect x="548" y="426.97" width="2" height="1" fill="#a8a8a8" />
<rect x="548" y="410.1" width="2" height="1" fill="#f8f8f8" />
<rect x="548" y="413.2" width="2" height="1" fill="#f8f8f8" />
<rect x="548" y="416.5" width="2" height="1" fill="#a8a8a8" />
<rect x="548" y="399.63" width="2" height="1" fill="#f8f8f8" />
<rect x="548" y="402.73" width="2" height="1" fill="#f8f8f8" />
<rect x="548" y="406.03" width="2" height="1" fill="#a8a8a8" />
<rect x="548" y="389.16" width="2" height="1" fill="#f8f8f8" />
<rect x="548" y="392.26" width="2" height="1" fill="#f8f8f8" />
<rect x="548" y="395.56" width="2" height="1" fill="#a8a8a8" />
<rect x="548" y="378.69" width="2" height="1" fill="#f8f8f8" />
<rect x="548" y="381.79" width="2" height="1" fill="#f8f8f8" />
<rect x="548" y="385.09" width="2" height="1" fill="#a8a8a8" />
<rect x="548" y="368.22" width="2" height="1" fill="#f8f8f8" />
<rect x="548" y="371.32" width="2" height="1" fill="#f8f8f8" />
<rect x="548" y="374.62" width="2" height="1" fill="#a8a8a8" />
<rect x="548" y="357.75" width="2" height="1" fill="#f8f8f8" />
<rect x="548" y="360.85" width="2" height="1" fill="#f8f8f8" />
<rect x="548" y="364.15" width="2" height="1" fill="#a8a8a8" />
<rect x="548" y="347.28" width="2" height="1" fill="#f8f8f8" />
<rect x="548" y="350.38" width="2" height="1" fill="#f8f8f8" />
<rect x="548" y="353.68" width="2" height="1" fill="#a8a8a8" />
<rect x="548" y="336.81" width="2" height="1" fill="#f8f8f8" />
<rect x="548" y="339.91" width="2" height="1" fill="#f8f8f8" />
<rect x="548" y="343.21" width="2" height="1" fill="#a8a8a8" />
<rect x="548" y="326.34" width="2" height="1" fill="#f8f8f8" />
<rect x="548" y="329.44" width="2" height="1" fill="#f8f8f8" />
<rect x="548" y="332.74" width="2" height="1" fill="#a8a8a8" />
<rect x="548" y="315.87" width="2" height="1" fill="#f8f8f8" />
<rect x="548" y="318.97" width="2" height="1" fill="#f8f8f8" />
<rect x="548" y="322.27" width="2" height="1" fill="#a8a8a8" />
<rect x="548" y="305.4" width="2" height="1" fill="#f8f8f8" />
<rect x="548" y="308.5" width="2" height="1" fill="#f8f8f8" />
<rect x="548" y="311.8" width="2" height="1" fill="#a8a8a8" />
<rect x="548" y="294.93" width="2" height="1" fill="#f8f8f8" />
<rect x="548" y="298.03" width="2" height="1" fill="#f8f8f8" />
<rect x="548" y="301.33" width="2" height="1" fill="#a8a8a8" />
<rect x="548" y="284.46" width="2" height="1" fill="#f8f8f8" />
<rect x="548" y="287.56" width="2" height="1" fill="#f8f8f8" />
<rect x="548" y="290.86" width="2" height="1" fill="#a8a8a8" />
<rect x="548" y="273.99" width="2" height="1" fill="#f8f8f8" />
<rect x="548" y="277.09" width="2" height="1" fill="#f8f8f8" />
<rect x="548" y="280.39" width="2" height="1" fill="#a8a8a8" />
<rect x="548" y="263.52" width="2" height="1" fill="#f8f8f8" />
<rect x="548" y="266.62" width="2" height="1" fill="#f8f8f8" />
<rect x="548" y="269.92" width="2" height="1" fill="#a8a8a8" />
<rect x="548" y="253.05" width="2" height="1" fill="#f8f8f8" />
<rect x="548" y="256.15" width="2" height="1" fill="#f8f8f8" />
<rect x="548" y="259.45" width="2" height="1" fill="#a8a8a8" />
<rect x="548" y="242.58" width="2" height="1" fill="#f8f8f8" />
<rect x="548" y="245.68" width="2" height="1" fill="#f8f8f8" />
<rect x="548" y="248.98" width="2" height="1" fill="#a8a8a8" />
<rect x="548" y="232.11" width="2" height="1" fill="#f8f8f8" />
<rect x="548" y="235.21" width="2" height="1" fill="#f8f8f8" />
<rect x="548" y="238.51" width="2" height="1" fill="#a8a8a8" />
<rect x="548" y="221.64" width="2" height="1" fill="#f8f8f8" />
<rect x="548" y="224.74" width="2" height="1" fill="#f8f8f8" />
<rect x="548" y="228.04" width="2" height="1" fill="#a8a8a8" />
<rect x="548" y="211.17" width="2" height="1" fill="#f8f8f8" />
<rect x="548" y="214.27" width="2" height="1" fill="#f8f8f8" />
<rect x="548" y="217.57" width="2" height="1" fill="#a8a8a8" />
<rect x="548" y="200.7" width="2" height="1" fill="#f8f8f8" />
<rect x="548" y="203.8" width="2" height="1" fill="#f8f8f8" />
<rect x="548" y="207.1" width="2" height="1" fill="#a8a8a8" />
<rect x="548" y="190.23" width="2" height="1" fill="#f8f8f8" />
<rect x="548" y="193.33" width="2" height="1" fill="#f8f8f8" />
<rect x="548" y="196.63" width="2" height="1" fill="#a8a8a8" />
<rect x="548" y="179.76" width="2" height="1" fill="#f8f8f8" />
<rect x="548" y="182.86" width="2" height="1" fill="#f8f8f8" />
<rect x="548" y="186.16" width="2" height="1" fill="#a8a8a8" />
<rect x="432.7" y="616" width="121.1" height="10.2" fill="url(#gBotBar)" stroke="#6a6a6a" stroke-width="0.5"/>
<rect x="422" y="166" width="143" height="460" fill="none" stroke="#565656" stroke-width="0.9"/>
<rect x="422" y="626" width="143" height="7" fill="url(#gBase)" />
<rect x="422" y="633" width="10.7" height="2" fill="#2e2e2e" />
<rect x="552.8" y="633" width="12.2" height="2" fill="#2e2e2e" />
<rect x="441" y="175.3" width="112.8" height="23.2" fill="url(#gHub)" stroke="#8a8a8a" stroke-width="0.5"/>
<rect x="444.4" y="176.2" width="83.4" height="9.7" fill="#d4d4d4" />
<rect x="445.3" y="177.8" width="3.9" height="7.3" fill="#4e4e4e" rx="0.6"/>
<rect x="446.2" y="176.9" width="2.1" height="1.4" fill="#5a5a5a" />
<rect x="445.5" y="180.86" width="3.5" height="0.5" fill="#6c6c6c" />
<rect x="450.32" y="177.8" width="3.9" height="7.3" fill="#4e4e4e" rx="0.6"/>
<rect x="451.22" y="176.9" width="2.1" height="1.4" fill="#5a5a5a" />
<rect x="450.52" y="180.86" width="3.5" height="0.5" fill="#6c6c6c" />
<rect x="455.34" y="177.8" width="3.9" height="7.3" fill="#4e4e4e" rx="0.6"/>
<rect x="456.24" y="176.9" width="2.1" height="1.4" fill="#5a5a5a" />
<rect x="455.54" y="180.86" width="3.5" height="0.5" fill="#6c6c6c" />
<rect x="460.36" y="177.8" width="3.9" height="7.3" fill="#4e4e4e" rx="0.6"/>
<rect x="461.26" y="176.9" width="2.1" height="1.4" fill="#5a5a5a" />
<rect x="460.56" y="180.86" width="3.5" height="0.5" fill="#6c6c6c" />
<rect x="465.38" y="177.8" width="3.9" height="7.3" fill="#4e4e4e" rx="0.6"/>
<rect x="466.28" y="176.9" width="2.1" height="1.4" fill="#5a5a5a" />
<rect x="465.58" y="180.86" width="3.5" height="0.5" fill="#6c6c6c" />
<rect x="470.4" y="177.8" width="3.9" height="7.3" fill="#4e4e4e" rx="0.6"/>
<rect x="471.3" y="176.9" width="2.1" height="1.4" fill="#5a5a5a" />
<rect x="470.6" y="180.86" width="3.5" height="0.5" fill="#6c6c6c" />
<rect x="475.42" y="177.8" width="3.9" height="7.3" fill="#4e4e4e" rx="0.6"/>
<rect x="476.32" y="176.9" width="2.1" height="1.4" fill="#5a5a5a" />
<rect x="475.62" y="180.86" width="3.5" height="0.5" fill="#6c6c6c" />
<rect x="481.14" y="177.2" width="1.6" height="7.7" fill="#4c4c4c" />
<rect x="481.74" y="177.8" width="3.9" height="7.3" fill="#4e4e4e" rx="0.6"/>
<rect x="482.64" y="176.9" width="2.1" height="1.4" fill="#5a5a5a" />
<rect x="481.94" y="180.86" width="3.5" height="0.5" fill="#6c6c6c" />
<rect x="486.76" y="177.8" width="3.9" height="7.3" fill="#4e4e4e" rx="0.6"/>
<rect x="487.66" y="176.9" width="2.1" height="1.4" fill="#5a5a5a" />
<rect x="486.96" y="180.86" width="3.5" height="0.5" fill="#6c6c6c" />
<rect x="491.78" y="177.8" width="3.9" height="7.3" fill="#4e4e4e" rx="0.6"/>
<rect x="492.68" y="176.9" width="2.1" height="1.4" fill="#5a5a5a" />
<rect x="491.98" y="180.86" width="3.5" height="0.5" fill="#6c6c6c" />
<rect x="496.8" y="177.8" width="3.9" height="7.3" fill="#4e4e4e" rx="0.6"/>
<rect x="497.7" y="176.9" width="2.1" height="1.4" fill="#5a5a5a" />
<rect x="497" y="180.86" width="3.5" height="0.5" fill="#6c6c6c" />
<rect x="501.82" y="177.8" width="3.9" height="7.3" fill="#4e4e4e" rx="0.6"/>
<rect x="502.72" y="176.9" width="2.1" height="1.4" fill="#5a5a5a" />
<rect x="502.02" y="180.86" width="3.5" height="0.5" fill="#6c6c6c" />
<rect x="506.84" y="177.8" width="3.9" height="7.3" fill="#4e4e4e" rx="0.6"/>
<rect x="507.74" y="176.9" width="2.1" height="1.4" fill="#5a5a5a" />
<rect x="507.04" y="180.86" width="3.5" height="0.5" fill="#6c6c6c" />
<rect x="511.86" y="177.8" width="3.9" height="7.3" fill="#4e4e4e" rx="0.6"/>
<rect x="512.76" y="176.9" width="2.1" height="1.4" fill="#5a5a5a" />
<rect x="512.06" y="180.86" width="3.5" height="0.5" fill="#6c6c6c" />
<rect x="518.18" y="177.8" width="3.9" height="7.3" fill="#4e4e4e" rx="0.6"/>
<rect x="519.08" y="176.9" width="2.1" height="1.4" fill="#5a5a5a" />
<rect x="518.38" y="180.86" width="3.5" height="0.5" fill="#6c6c6c" />
<rect x="523.2" y="177.8" width="3.9" height="7.3" fill="#4e4e4e" rx="0.6"/>
<rect x="524.1" y="176.9" width="2.1" height="1.4" fill="#5a5a5a" />
<rect x="523.4" y="180.86" width="3.5" height="0.5" fill="#6c6c6c" />
<rect x="444.4" y="187.8" width="83.4" height="9.7" fill="#d4d4d4" />
<rect x="445.3" y="189.4" width="3.9" height="7.3" fill="#4e4e4e" rx="0.6"/>
<rect x="446.2" y="188.5" width="2.1" height="1.4" fill="#5a5a5a" />
<rect x="445.5" y="192.46" width="3.5" height="0.5" fill="#6c6c6c" />
<rect x="450.32" y="189.4" width="3.9" height="7.3" fill="#4e4e4e" rx="0.6"/>
<rect x="451.22" y="188.5" width="2.1" height="1.4" fill="#5a5a5a" />
<rect x="450.52" y="192.46" width="3.5" height="0.5" fill="#6c6c6c" />
<rect x="455.34" y="189.4" width="3.9" height="7.3" fill="#4e4e4e" rx="0.6"/>
<rect x="456.24" y="188.5" width="2.1" height="1.4" fill="#5a5a5a" />
<rect x="455.54" y="192.46" width="3.5" height="0.5" fill="#6c6c6c" />
<rect x="460.36" y="189.4" width="3.9" height="7.3" fill="#4e4e4e" rx="0.6"/>
<rect x="461.26" y="188.5" width="2.1" height="1.4" fill="#5a5a5a" />
<rect x="460.56" y="192.46" width="3.5" height="0.5" fill="#6c6c6c" />
<rect x="465.38" y="189.4" width="3.9" height="7.3" fill="#4e4e4e" rx="0.6"/>
<rect x="466.28" y="188.5" width="2.1" height="1.4" fill="#5a5a5a" />
<rect x="465.58" y="192.46" width="3.5" height="0.5" fill="#6c6c6c" />
<rect x="470.4" y="189.4" width="3.9" height="7.3" fill="#4e4e4e" rx="0.6"/>
<rect x="471.3" y="188.5" width="2.1" height="1.4" fill="#5a5a5a" />
<rect x="470.6" y="192.46" width="3.5" height="0.5" fill="#6c6c6c" />
<rect x="475.42" y="189.4" width="3.9" height="7.3" fill="#4e4e4e" rx="0.6"/>
<rect x="476.32" y="188.5" width="2.1" height="1.4" fill="#5a5a5a" />
<rect x="475.62" y="192.46" width="3.5" height="0.5" fill="#6c6c6c" />
<rect x="481.14" y="188.8" width="1.6" height="7.7" fill="#4c4c4c" />
<rect x="481.74" y="189.4" width="3.9" height="7.3" fill="#4e4e4e" rx="0.6"/>
<rect x="482.64" y="188.5" width="2.1" height="1.4" fill="#5a5a5a" />
<rect x="481.94" y="192.46" width="3.5" height="0.5" fill="#6c6c6c" />
<rect x="486.76" y="189.4" width="3.9" height="7.3" fill="#4e4e4e" rx="0.6"/>
<rect x="487.66" y="188.5" width="2.1" height="1.4" fill="#5a5a5a" />
<rect x="486.96" y="192.46" width="3.5" height="0.5" fill="#6c6c6c" />
<rect x="491.78" y="189.4" width="3.9" height="7.3" fill="#4e4e4e" rx="0.6"/>
<rect x="492.68" y="188.5" width="2.1" height="1.4" fill="#5a5a5a" />
<rect x="491.98" y="192.46" width="3.5" height="0.5" fill="#6c6c6c" />
<rect x="496.8" y="189.4" width="3.9" height="7.3" fill="#4e4e4e" rx="0.6"/>
<rect x="497.7" y="188.5" width="2.1" height="1.4" fill="#5a5a5a" />
<rect x="497" y="192.46" width="3.5" height="0.5" fill="#6c6c6c" />
<rect x="501.82" y="189.4" width="3.9" height="7.3" fill="#4e4e4e" rx="0.6"/>
<rect x="502.72" y="188.5" width="2.1" height="1.4" fill="#5a5a5a" />
<rect x="502.02" y="192.46" width="3.5" height="0.5" fill="#6c6c6c" />
<rect x="506.84" y="189.4" width="3.9" height="7.3" fill="#4e4e4e" rx="0.6"/>
<rect x="507.74" y="188.5" width="2.1" height="1.4" fill="#5a5a5a" />
<rect x="507.04" y="192.46" width="3.5" height="0.5" fill="#6c6c6c" />
<rect x="511.86" y="189.4" width="3.9" height="7.3" fill="#4e4e4e" rx="0.6"/>
<rect x="512.76" y="188.5" width="2.1" height="1.4" fill="#5a5a5a" />
<rect x="512.06" y="192.46" width="3.5" height="0.5" fill="#6c6c6c" />
<rect x="518.18" y="189.4" width="3.9" height="7.3" fill="#4e4e4e" rx="0.6"/>
<rect x="519.08" y="188.5" width="2.1" height="1.4" fill="#5a5a5a" />
<rect x="518.38" y="192.46" width="3.5" height="0.5" fill="#6c6c6c" />
<rect x="523.2" y="189.4" width="3.9" height="7.3" fill="#4e4e4e" rx="0.6"/>
<rect x="524.1" y="188.5" width="2.1" height="1.4" fill="#5a5a5a" />
<rect x="523.4" y="192.46" width="3.5" height="0.5" fill="#6c6c6c" />
<rect x="528.1" y="175.7" width="3.2" height="22.4" fill="#f4f4f4" />
<rect x="531.6" y="176.1" width="17.8" height="21.6" fill="#c4c4c4" />
<rect x="532.1" y="176.3" width="2" height="21.2" fill="#e2e2e2" />
<rect x="535.95" y="176.3" width="2" height="21.2" fill="#e2e2e2" />
<rect x="539.8" y="176.3" width="2" height="21.2" fill="#e2e2e2" />
<rect x="543.65" y="176.3" width="2" height="21.2" fill="#e2e2e2" />
<rect x="547.5" y="176.3" width="2" height="21.2" fill="#e2e2e2" />
<rect x="549.8" y="175.7" width="3.6" height="22.4" fill="#dedede" />
<path d="M442.4 179l1.800-1.400M442.8 177.5l1 1.600" stroke="#8d8d8d" stroke-width="0.6"/><path d="M442.4 196.2l1.800-1.400M442.8 194.7l1 1.600" stroke="#8d8d8d" stroke-width="0.6"/><path d="M550.6 179l1.800-1.400M551 177.5l1 1.600" stroke="#8d8d8d" stroke-width="0.6"/><path d="M550.6 196.2l1.800-1.400M551 194.7l1 1.600" stroke="#8d8d8d" stroke-width="0.6"/>
<rect x="441" y="198.9" width="112.8" height="8.9" fill="#606060" stroke="#484848" stroke-width="0.5"/>
<rect x="442.6" y="200.5" width="2.6" height="5.5" fill="#383838" />
<rect x="446" y="199.8" width="23.4" height="7" fill="#8c8c8c" />
<rect x="446.9" y="201.1" width="2.6" height="2.3" fill="#4c4c4c" />
<rect x="447.55" y="200.3" width="1.3" height="1" fill="#4c4c4c" />
<rect x="446.9" y="204.5" width="2.6" height="2.3" fill="#4c4c4c" />
<rect x="447.55" y="206.6" width="1.3" height="1" fill="#4c4c4c" />
<rect x="450.4" y="201.1" width="6.4" height="2.3" fill="#4c4c4c" />
<rect x="452" y="200.3" width="3.2" height="1" fill="#4c4c4c" />
<rect x="450.4" y="204.5" width="6.4" height="2.3" fill="#4c4c4c" />
<rect x="452" y="206.6" width="3.2" height="1" fill="#4c4c4c" />
<rect x="457.7" y="201.1" width="6.4" height="2.3" fill="#4c4c4c" />
<rect x="459.3" y="200.3" width="3.2" height="1" fill="#4c4c4c" />
<rect x="457.7" y="204.5" width="6.4" height="2.3" fill="#4c4c4c" />
<rect x="459.3" y="206.6" width="3.2" height="1" fill="#4c4c4c" />
<rect x="465" y="201.1" width="3.2" height="2.3" fill="#4c4c4c" />
<rect x="465.8" y="200.3" width="1.6" height="1" fill="#4c4c4c" />
<rect x="465" y="204.5" width="3.2" height="2.3" fill="#4c4c4c" />
<rect x="465.8" y="206.6" width="1.6" height="1" fill="#4c4c4c" />
<rect x="446.4" y="203.6" width="22.6" height="0.7" fill="#b0b0b0" />
<rect x="470.2" y="199.8" width="23.4" height="7" fill="#8c8c8c" />
<rect x="471.1" y="201.1" width="2.6" height="2.3" fill="#4c4c4c" />
<rect x="471.75" y="200.3" width="1.3" height="1" fill="#4c4c4c" />
<rect x="471.1" y="204.5" width="2.6" height="2.3" fill="#4c4c4c" />
<rect x="471.75" y="206.6" width="1.3" height="1" fill="#4c4c4c" />
<rect x="474.6" y="201.1" width="6.4" height="2.3" fill="#4c4c4c" />
<rect x="476.2" y="200.3" width="3.2" height="1" fill="#4c4c4c" />
<rect x="474.6" y="204.5" width="6.4" height="2.3" fill="#4c4c4c" />
<rect x="476.2" y="206.6" width="3.2" height="1" fill="#4c4c4c" />
<rect x="481.9" y="201.1" width="6.4" height="2.3" fill="#4c4c4c" />
<rect x="483.5" y="200.3" width="3.2" height="1" fill="#4c4c4c" />
<rect x="481.9" y="204.5" width="6.4" height="2.3" fill="#4c4c4c" />
<rect x="483.5" y="206.6" width="3.2" height="1" fill="#4c4c4c" />
<rect x="489.2" y="201.1" width="3.2" height="2.3" fill="#4c4c4c" />
<rect x="490" y="200.3" width="1.6" height="1" fill="#4c4c4c" />
<rect x="489.2" y="204.5" width="3.2" height="2.3" fill="#4c4c4c" />
<rect x="490" y="206.6" width="1.6" height="1" fill="#4c4c4c" />
<rect x="470.6" y="203.6" width="22.6" height="0.7" fill="#b0b0b0" />
<rect x="494.4" y="199.8" width="23.4" height="7" fill="#8c8c8c" />
<rect x="495.3" y="201.1" width="2.6" height="2.3" fill="#4c4c4c" />
<rect x="495.95" y="200.3" width="1.3" height="1" fill="#4c4c4c" />
<rect x="495.3" y="204.5" width="2.6" height="2.3" fill="#4c4c4c" />
<rect x="495.95" y="206.6" width="1.3" height="1" fill="#4c4c4c" />
<rect x="498.8" y="201.1" width="6.4" height="2.3" fill="#4c4c4c" />
<rect x="500.4" y="200.3" width="3.2" height="1" fill="#4c4c4c" />
<rect x="498.8" y="204.5" width="6.4" height="2.3" fill="#4c4c4c" />
<rect x="500.4" y="206.6" width="3.2" height="1" fill="#4c4c4c" />
<rect x="506.1" y="201.1" width="6.4" height="2.3" fill="#4c4c4c" />
<rect x="507.7" y="200.3" width="3.2" height="1" fill="#4c4c4c" />
<rect x="506.1" y="204.5" width="6.4" height="2.3" fill="#4c4c4c" />
<rect x="507.7" y="206.6" width="3.2" height="1" fill="#4c4c4c" />
<rect x="513.4" y="201.1" width="3.2" height="2.3" fill="#4c4c4c" />
<rect x="514.2" y="200.3" width="1.6" height="1" fill="#4c4c4c" />
<rect x="513.4" y="204.5" width="3.2" height="2.3" fill="#4c4c4c" />
<rect x="514.2" y="206.6" width="1.6" height="1" fill="#4c4c4c" />
<rect x="494.8" y="203.6" width="22.6" height="0.7" fill="#b0b0b0" />
<rect x="518.6" y="199.8" width="23.4" height="7" fill="#8c8c8c" />
<rect x="519.5" y="201.1" width="2.6" height="2.3" fill="#4c4c4c" />
<rect x="520.15" y="200.3" width="1.3" height="1" fill="#4c4c4c" />
<rect x="519.5" y="204.5" width="2.6" height="2.3" fill="#4c4c4c" />
<rect x="520.15" y="206.6" width="1.3" height="1" fill="#4c4c4c" />
<rect x="523" y="201.1" width="6.4" height="2.3" fill="#4c4c4c" />
<rect x="524.6" y="200.3" width="3.2" height="1" fill="#4c4c4c" />
<rect x="523" y="204.5" width="6.4" height="2.3" fill="#4c4c4c" />
<rect x="524.6" y="206.6" width="3.2" height="1" fill="#4c4c4c" />
<rect x="530.3" y="201.1" width="6.4" height="2.3" fill="#4c4c4c" />
<rect x="531.9" y="200.3" width="3.2" height="1" fill="#4c4c4c" />
<rect x="530.3" y="204.5" width="6.4" height="2.3" fill="#4c4c4c" />
<rect x="531.9" y="206.6" width="3.2" height="1" fill="#4c4c4c" />
<rect x="537.6" y="201.1" width="3.2" height="2.3" fill="#4c4c4c" />
<rect x="538.4" y="200.3" width="1.6" height="1" fill="#4c4c4c" />
<rect x="537.6" y="204.5" width="3.2" height="2.3" fill="#4c4c4c" />
<rect x="538.4" y="206.6" width="1.6" height="1" fill="#4c4c4c" />
<rect x="519" y="203.6" width="22.6" height="0.7" fill="#b0b0b0" />
<rect x="542.8" y="199.8" width="9" height="7" fill="#8c8c8c" />
<rect x="543.6" y="200.9" width="3.2" height="2.6" fill="#4c4c4c" />
<rect x="543.6" y="204.5" width="3.2" height="2.6" fill="#4c4c4c" />
<rect x="547.8" y="200.9" width="3.2" height="2.6" fill="#4c4c4c" />
<rect x="547.8" y="204.5" width="3.2" height="2.6" fill="#4c4c4c" />
<rect x="441" y="207.67" width="112.8" height="10.47" fill="#606060" stroke="#484848" stroke-width="0.5"/>
<rect x="442.6" y="209.27" width="2.6" height="7.07" fill="#383838" />
<rect x="494.4" y="208.57" width="23.4" height="8.57" fill="#8c8c8c" />
<rect x="495.2" y="210.07" width="2.2" height="5.87" fill="#4a4a4a" />
<rect x="498.2" y="210.07" width="4.6" height="5.87" fill="#4a4a4a" />
<rect x="503.4" y="210.07" width="4.6" height="5.87" fill="#4a4a4a" />
<rect x="508.8" y="210.07" width="4.6" height="5.87" fill="#4a4a4a" />
<rect x="514" y="210.07" width="2.6" height="5.87" fill="#4a4a4a" />
<rect x="499.2" y="211.07" width="2.6" height="3.87" fill="#5e5e5e" />
<rect x="504.4" y="211.07" width="2.6" height="3.87" fill="#5e5e5e" />
<rect x="509.8" y="211.07" width="2.6" height="3.87" fill="#5e5e5e" />
<rect x="518.6" y="208.57" width="23.4" height="8.57" fill="#8c8c8c" />
<rect x="519.4" y="210.07" width="2.2" height="5.87" fill="#4a4a4a" />
<rect x="522.4" y="210.07" width="4.6" height="5.87" fill="#4a4a4a" />
<rect x="527.6" y="210.07" width="4.6" height="5.87" fill="#4a4a4a" />
<rect x="533" y="210.07" width="4.6" height="5.87" fill="#4a4a4a" />
<rect x="538.2" y="210.07" width="2.6" height="5.87" fill="#4a4a4a" />
<rect x="523.4" y="211.07" width="2.6" height="3.87" fill="#5e5e5e" />
<rect x="528.6" y="211.07" width="2.6" height="3.87" fill="#5e5e5e" />
<rect x="534" y="211.07" width="2.6" height="3.87" fill="#5e5e5e" />
<rect x="446" y="208.87" width="47.6" height="8.07" fill="url(#gPanel)"/>
<rect x="542.6" y="212.67" width="9" height="4" fill="#a0a0a0" />
<rect x="543.3" y="213.37" width="3.3" height="2.6" fill="#3a3a3a" />
<rect x="547.5" y="213.37" width="3.3" height="2.6" fill="#3a3a3a" />
<rect x="441" y="218.14" width="112.8" height="10.47" fill="#606060" stroke="#484848" stroke-width="0.5"/>
<rect x="442.6" y="219.74" width="2.6" height="7.07" fill="#383838" />
<rect x="446" y="219.04" width="23.4" height="8.57" fill="#8c8c8c" />
<rect x="446.9" y="220.34" width="2.6" height="2.3" fill="#4c4c4c" />
<rect x="447.55" y="219.54" width="1.3" height="1" fill="#4c4c4c" />
<rect x="446.9" y="223.74" width="2.6" height="2.3" fill="#4c4c4c" />
<rect x="447.55" y="225.84" width="1.3" height="1" fill="#4c4c4c" />
<rect x="450.4" y="220.34" width="6.4" height="2.3" fill="#4c4c4c" />
<rect x="452" y="219.54" width="3.2" height="1" fill="#4c4c4c" />
<rect x="450.4" y="223.74" width="6.4" height="2.3" fill="#4c4c4c" />
<rect x="452" y="225.84" width="3.2" height="1" fill="#4c4c4c" />
<rect x="457.7" y="220.34" width="6.4" height="2.3" fill="#4c4c4c" />
<rect x="459.3" y="219.54" width="3.2" height="1" fill="#4c4c4c" />
<rect x="457.7" y="223.74" width="6.4" height="2.3" fill="#4c4c4c" />
<rect x="459.3" y="225.84" width="3.2" height="1" fill="#4c4c4c" />
<rect x="465" y="220.34" width="3.2" height="2.3" fill="#4c4c4c" />
<rect x="465.8" y="219.54" width="1.6" height="1" fill="#4c4c4c" />
<rect x="465" y="223.74" width="3.2" height="2.3" fill="#4c4c4c" />
<rect x="465.8" y="225.84" width="1.6" height="1" fill="#4c4c4c" />
<rect x="446.4" y="222.84" width="22.6" height="0.7" fill="#b0b0b0" />
<rect x="470.2" y="219.04" width="23.4" height="8.57" fill="#8c8c8c" />
<rect x="471.1" y="220.34" width="2.6" height="2.3" fill="#4c4c4c" />
<rect x="471.75" y="219.54" width="1.3" height="1" fill="#4c4c4c" />
<rect x="471.1" y="223.74" width="2.6" height="2.3" fill="#4c4c4c" />
<rect x="471.75" y="225.84" width="1.3" height="1" fill="#4c4c4c" />
<rect x="474.6" y="220.34" width="6.4" height="2.3" fill="#4c4c4c" />
<rect x="476.2" y="219.54" width="3.2" height="1" fill="#4c4c4c" />
<rect x="474.6" y="223.74" width="6.4" height="2.3" fill="#4c4c4c" />
<rect x="476.2" y="225.84" width="3.2" height="1" fill="#4c4c4c" />
<rect x="481.9" y="220.34" width="6.4" height="2.3" fill="#4c4c4c" />
<rect x="483.5" y="219.54" width="3.2" height="1" fill="#4c4c4c" />
<rect x="481.9" y="223.74" width="6.4" height="2.3" fill="#4c4c4c" />
<rect x="483.5" y="225.84" width="3.2" height="1" fill="#4c4c4c" />
<rect x="489.2" y="220.34" width="3.2" height="2.3" fill="#4c4c4c" />
<rect x="490" y="219.54" width="1.6" height="1" fill="#4c4c4c" />
<rect x="489.2" y="223.74" width="3.2" height="2.3" fill="#4c4c4c" />
<rect x="490" y="225.84" width="1.6" height="1" fill="#4c4c4c" />
<rect x="470.6" y="222.84" width="22.6" height="0.7" fill="#b0b0b0" />
<rect x="494.4" y="219.04" width="23.4" height="8.57" fill="#8c8c8c" />
<rect x="495.3" y="220.34" width="2.6" height="2.3" fill="#4c4c4c" />
<rect x="495.95" y="219.54" width="1.3" height="1" fill="#4c4c4c" />
<rect x="495.3" y="223.74" width="2.6" height="2.3" fill="#4c4c4c" />
<rect x="495.95" y="225.84" width="1.3" height="1" fill="#4c4c4c" />
<rect x="498.8" y="220.34" width="6.4" height="2.3" fill="#4c4c4c" />
<rect x="500.4" y="219.54" width="3.2" height="1" fill="#4c4c4c" />
<rect x="498.8" y="223.74" width="6.4" height="2.3" fill="#4c4c4c" />
<rect x="500.4" y="225.84" width="3.2" height="1" fill="#4c4c4c" />
<rect x="506.1" y="220.34" width="6.4" height="2.3" fill="#4c4c4c" />
<rect x="507.7" y="219.54" width="3.2" height="1" fill="#4c4c4c" />
<rect x="506.1" y="223.74" width="6.4" height="2.3" fill="#4c4c4c" />
<rect x="507.7" y="225.84" width="3.2" height="1" fill="#4c4c4c" />
<rect x="513.4" y="220.34" width="3.2" height="2.3" fill="#4c4c4c" />
<rect x="514.2" y="219.54" width="1.6" height="1" fill="#4c4c4c" />
<rect x="513.4" y="223.74" width="3.2" height="2.3" fill="#4c4c4c" />
<rect x="514.2" y="225.84" width="1.6" height="1" fill="#4c4c4c" />
<rect x="494.8" y="222.84" width="22.6" height="0.7" fill="#b0b0b0" />
<rect x="518.6" y="219.04" width="23.4" height="8.57" fill="#8c8c8c" />
<rect x="519.5" y="220.34" width="2.6" height="2.3" fill="#4c4c4c" />
<rect x="520.15" y="219.54" width="1.3" height="1" fill="#4c4c4c" />
<rect x="519.5" y="223.74" width="2.6" height="2.3" fill="#4c4c4c" />
<rect x="520.15" y="225.84" width="1.3" height="1" fill="#4c4c4c" />
<rect x="523" y="220.34" width="6.4" height="2.3" fill="#4c4c4c" />
<rect x="524.6" y="219.54" width="3.2" height="1" fill="#4c4c4c" />
<rect x="523" y="223.74" width="6.4" height="2.3" fill="#4c4c4c" />
<rect x="524.6" y="225.84" width="3.2" height="1" fill="#4c4c4c" />
<rect x="530.3" y="220.34" width="6.4" height="2.3" fill="#4c4c4c" />
<rect x="531.9" y="219.54" width="3.2" height="1" fill="#4c4c4c" />
<rect x="530.3" y="223.74" width="6.4" height="2.3" fill="#4c4c4c" />
<rect x="531.9" y="225.84" width="3.2" height="1" fill="#4c4c4c" />
<rect x="537.6" y="220.34" width="3.2" height="2.3" fill="#4c4c4c" />
<rect x="538.4" y="219.54" width="1.6" height="1" fill="#4c4c4c" />
<rect x="537.6" y="223.74" width="3.2" height="2.3" fill="#4c4c4c" />
<rect x="538.4" y="225.84" width="1.6" height="1" fill="#4c4c4c" />
<rect x="519" y="222.84" width="22.6" height="0.7" fill="#b0b0b0" />
<rect x="542.6" y="223.74" width="9" height="3.8" fill="#a0a0a0" />
<rect x="543.3" y="224.44" width="3.3" height="2.5" fill="#3a3a3a" />
<rect x="547.5" y="224.44" width="3.3" height="2.5" fill="#3a3a3a" />
<rect x="441" y="228.61" width="105.6" height="104.79" fill="#464646" />
<path d="M482.4 250.7v-9.5h30.8v9.5h-3.8v-5.7h-23.2v5.700z" fill="#8a8a8a"/>
<rect x="486.2" y="245" width="23.2" height="5.7" fill="#555" />
<rect x="447.6" y="250.7" width="99" height="82.7" fill="url(#gMonFrame)" stroke="#6e6e6e" stroke-width="0.6"/>
<rect x="450.4" y="252.6" width="93.6" height="73.7" fill="url(#gScreen)" stroke="#5a6a80" stroke-width="0.5"/>
<path d="M512 252.900H543.900V266L543 254.800z" fill="#4aa8ea" opacity="0.75"/>
<rect x="482" y="328.2" width="31" height="2.8" fill="#7a7a7a" stroke="#5a5a5a" stroke-width="0.4"/>
<rect x="484.4" y="328.9" width="3" height="1.4" fill="#c4c4c4" />
<rect x="489" y="328.9" width="3" height="1.4" fill="#c4c4c4" />
<rect x="493.6" y="328.9" width="3" height="1.4" fill="#c4c4c4" />
<rect x="498.2" y="328.9" width="3" height="1.4" fill="#c4c4c4" />
<rect x="502.8" y="328.9" width="3" height="1.4" fill="#c4c4c4" />
<rect x="507.4" y="328.9" width="3" height="1.4" fill="#c4c4c4" />
<rect x="441" y="332.8" width="112.8" height="11" fill="#7c7c7c" stroke="#555" stroke-width="0.5"/>
<rect x="447.2" y="333.7" width="100.4" height="6.3" fill="#5e5e5e" />
<path d="M449.600 340.500H546" stroke="#e8e8e8" stroke-width="1" stroke-dasharray="3.7 1.700"/>
<path d="M442 339.3l1.800-1.400M442.4 337.8l1 1.600" stroke="#9a9a9a" stroke-width="0.6"/><path d="M551 339.3l1.800-1.400M551.4 337.8l1 1.600" stroke="#9a9a9a" stroke-width="0.6"/>
<rect x="441" y="343.8" width="105.6" height="10.5" fill="#292929" />
<rect x="441" y="354.3" width="112.8" height="9.6" fill="url(#gTray)" stroke="#6a6a6a" stroke-width="0.5" rx="1"/>
<rect x="441.5" y="354.8" width="111.8" height="8.6" fill="url(#gTrayH)" rx="1"/>
<circle cx="497.4" cy="359.1" r="3.2" fill="#d9d9d9" stroke="#7d7d7d" stroke-width="0.6"/>
<path d="M496.6 360.9l1.6-3.6" stroke="#8a8a8a" stroke-width="0.9"/>
<path d="M442 359.8l1.800-1.400M442.4 358.3l1 1.600" stroke="#f4f4f4" stroke-width="0.6"/><path d="M551 359.8l1.800-1.400M551.4 358.3l1 1.600" stroke="#f4f4f4" stroke-width="0.6"/>
<rect x="441" y="364.4" width="112.8" height="10.6" fill="#5e5e5e" stroke="#4a4a4a" stroke-width="0.5"/>
<rect x="450" y="366" width="94.4" height="7" fill="url(#pMesh)" />
<path d="M442 370.4l1.800-1.400M442.4 368.9l1 1.600" stroke="#a4a4a4" stroke-width="0.6"/><path d="M551 370.4l1.800-1.400M551.4 368.9l1 1.600" stroke="#a4a4a4" stroke-width="0.6"/>
<rect x="441" y="375" width="112.8" height="22" fill="#5c5c5c" stroke="#444" stroke-width="0.5"/>
<rect x="450" y="375.6" width="94" height="21.1" fill="#141414" />
<rect x="450.9" y="376.4" width="21.9" height="5.47" fill="#3c3c3c" />
<rect x="451.9" y="376.7" width="1.3" height="4.87" fill="#6a6a6a" />
<rect x="453.9" y="376.4" width="3" height="5.47" fill="#030303" />
<rect x="458.5" y="377.3" width="11.9" height="3.67" fill="#8e8e8e" />
<rect x="464.06" y="378.37" width="5.64" height="1.64" fill="#c8c8c8" />
<rect x="474.4" y="376.4" width="21.9" height="5.47" fill="#3c3c3c" />
<rect x="475.4" y="376.7" width="1.3" height="4.87" fill="#6a6a6a" />
<rect x="477.4" y="376.4" width="3" height="5.47" fill="#030303" />
<rect x="482" y="377.3" width="11.9" height="3.67" fill="#8e8e8e" />
<rect x="487.56" y="378.37" width="5.64" height="1.64" fill="#c8c8c8" />
<rect x="497.9" y="376.4" width="21.9" height="5.47" fill="#3c3c3c" />
<rect x="498.9" y="376.7" width="1.3" height="4.87" fill="#6a6a6a" />
<rect x="500.9" y="376.4" width="3" height="5.47" fill="#030303" />
<rect x="505.5" y="377.3" width="11.9" height="3.67" fill="#8e8e8e" />
<rect x="511.06" y="378.37" width="5.64" height="1.64" fill="#c8c8c8" />
<rect x="521.4" y="376.4" width="21.9" height="5.47" fill="#3c3c3c" />
<rect x="522.4" y="376.7" width="1.3" height="4.87" fill="#6a6a6a" />
<rect x="524.4" y="376.4" width="3" height="5.47" fill="#030303" />
<rect x="529" y="377.3" width="11.9" height="3.67" fill="#8e8e8e" />
<rect x="534.56" y="378.37" width="5.64" height="1.64" fill="#c8c8c8" />
<rect x="450.9" y="383.17" width="21.9" height="5.47" fill="#3c3c3c" />
<rect x="451.9" y="383.47" width="1.3" height="4.87" fill="#6a6a6a" />
<rect x="453.9" y="383.17" width="3" height="5.47" fill="#030303" />
<rect x="458.5" y="384.07" width="11.9" height="3.67" fill="#8e8e8e" />
<rect x="464.06" y="385.13" width="5.64" height="1.64" fill="#c8c8c8" />
<rect x="474.4" y="383.17" width="21.9" height="5.47" fill="#3c3c3c" />
<rect x="475.4" y="383.47" width="1.3" height="4.87" fill="#6a6a6a" />
<rect x="477.4" y="383.17" width="3" height="5.47" fill="#030303" />
<rect x="482" y="384.07" width="11.9" height="3.67" fill="#8e8e8e" />
<rect x="487.56" y="385.13" width="5.64" height="1.64" fill="#c8c8c8" />
<rect x="497.9" y="383.17" width="21.9" height="5.47" fill="#3c3c3c" />
<rect x="498.9" y="383.47" width="1.3" height="4.87" fill="#6a6a6a" />
<rect x="500.9" y="383.17" width="3" height="5.47" fill="#030303" />
<rect x="505.5" y="384.07" width="11.9" height="3.67" fill="#8e8e8e" />
<rect x="511.06" y="385.13" width="5.64" height="1.64" fill="#c8c8c8" />
<rect x="521.4" y="383.17" width="21.9" height="5.47" fill="#3c3c3c" />
<rect x="522.4" y="383.47" width="1.3" height="4.87" fill="#6a6a6a" />
<rect x="524.4" y="383.17" width="3" height="5.47" fill="#030303" />
<rect x="529" y="384.07" width="11.9" height="3.67" fill="#8e8e8e" />
<rect x="534.56" y="385.13" width="5.64" height="1.64" fill="#c8c8c8" />
<rect x="450.9" y="389.93" width="21.9" height="5.47" fill="#3c3c3c" />
<rect x="451.9" y="390.23" width="1.3" height="4.87" fill="#6a6a6a" />
<rect x="453.9" y="389.93" width="3" height="5.47" fill="#030303" />
<rect x="458.5" y="390.83" width="11.9" height="3.67" fill="#8e8e8e" />
<rect x="464.06" y="391.9" width="5.64" height="1.64" fill="#c8c8c8" />
<rect x="474.4" y="389.93" width="21.9" height="5.47" fill="#3c3c3c" />
<rect x="475.4" y="390.23" width="1.3" height="4.87" fill="#6a6a6a" />
<rect x="477.4" y="389.93" width="3" height="5.47" fill="#030303" />
<rect x="482" y="390.83" width="11.9" height="3.67" fill="#8e8e8e" />
<rect x="487.56" y="391.9" width="5.64" height="1.64" fill="#c8c8c8" />
<rect x="497.9" y="389.93" width="21.9" height="5.47" fill="#3c3c3c" />
<rect x="498.9" y="390.23" width="1.3" height="4.87" fill="#6a6a6a" />
<rect x="500.9" y="389.93" width="3" height="5.47" fill="#030303" />
<rect x="505.5" y="390.83" width="11.9" height="3.67" fill="#8e8e8e" />
<rect x="511.06" y="391.9" width="5.64" height="1.64" fill="#c8c8c8" />
<rect x="521.4" y="389.93" width="21.9" height="5.47" fill="#3c3c3c" />
<rect x="522.4" y="390.23" width="1.3" height="4.87" fill="#6a6a6a" />
<rect x="524.4" y="389.93" width="3" height="5.47" fill="#030303" />
<rect x="529" y="390.83" width="11.9" height="3.67" fill="#8e8e8e" />
<rect x="534.56" y="391.9" width="5.64" height="1.64" fill="#c8c8c8" />
<path d="M442 378.7l1.800-1.400M442.4 377.2l1 1.600" stroke="#a4a4a4" stroke-width="0.6"/><path d="M442 394.7l1.800-1.400M442.4 393.2l1 1.600" stroke="#a4a4a4" stroke-width="0.6"/><path d="M551 378.7l1.800-1.400M551.4 377.2l1 1.600" stroke="#a4a4a4" stroke-width="0.6"/><path d="M551 394.7l1.800-1.400M551.4 393.2l1 1.600" stroke="#a4a4a4" stroke-width="0.6"/>
<clipPath id="cs1"><rect x="441" y="397" width="112.8" height="35"/></clipPath>
<g clip-path="url(#cs1)">
<rect x="441" y="397" width="112.8" height="35" fill="url(#gSrv)" />
<path d="M470.33 432L497.4 397L508.68 397L481.61 432z" fill="#fff" opacity="0.07"/>
<rect x="449.6" y="398.7" width="2.6" height="1" fill="#1a1a1a" />
<rect x="459.6" y="398.9" width="28.4" height="1.3" fill="#4a4a4a" />
<rect x="505.6" y="398.9" width="36.4" height="1.3" fill="#4a4a4a" />
<rect x="460" y="399.8" width="27.6" height="0.5" fill="#8a8a8a" />
<rect x="506" y="399.8" width="35.6" height="0.5" fill="#8a8a8a" />
<rect x="449.2" y="403.4" width="95.75" height="25.6" fill="#4a4a4a" />
<rect x="449.8" y="404" width="18.08" height="5.3" fill="url(#gBay)" rx="1"/><rect x="452.2" y="405.91" width="10.68" height="1.38" fill="#505050" rx="0.5"/><rect x="467.88" y="404" width="4.52" height="5.3" fill="#3a3a3a" /><rect x="468.18" y="404" width="1" height="5.3" fill="#1c1c1c" /><rect x="470.08" y="404" width="1" height="5.3" fill="#1c1c1c" /><rect x="469.18" y="404.4" width="0.9" height="4.5" fill="#9a9a9a" />
<rect x="473.65" y="404" width="18.08" height="5.3" fill="url(#gBay)" rx="1"/><rect x="476.05" y="405.91" width="10.68" height="1.38" fill="#505050" rx="0.5"/><rect x="491.73" y="404" width="4.52" height="5.3" fill="#3a3a3a" /><rect x="492.03" y="404" width="1" height="5.3" fill="#1c1c1c" /><rect x="493.93" y="404" width="1" height="5.3" fill="#1c1c1c" /><rect x="493.03" y="404.4" width="0.9" height="4.5" fill="#9a9a9a" />
<rect x="497.5" y="404" width="18.08" height="5.3" fill="url(#gBay)" rx="1"/><rect x="499.9" y="405.91" width="10.68" height="1.38" fill="#505050" rx="0.5"/><rect x="515.58" y="404" width="4.52" height="5.3" fill="#3a3a3a" /><rect x="515.88" y="404" width="1" height="5.3" fill="#1c1c1c" /><rect x="517.78" y="404" width="1" height="5.3" fill="#1c1c1c" /><rect x="516.88" y="404.4" width="0.9" height="4.5" fill="#9a9a9a" />
<rect x="521.35" y="404" width="18.08" height="5.3" fill="url(#gBay)" rx="1"/><rect x="523.75" y="405.91" width="10.68" height="1.38" fill="#505050" rx="0.5"/><rect x="539.43" y="404" width="4.52" height="5.3" fill="#3a3a3a" /><rect x="539.73" y="404" width="1" height="5.3" fill="#1c1c1c" /><rect x="541.63" y="404" width="1" height="5.3" fill="#1c1c1c" /><rect x="540.73" y="404.4" width="0.9" height="4.5" fill="#9a9a9a" />
<rect x="449.8" y="410.3" width="18.08" height="5.3" fill="url(#gBay)" rx="1"/><rect x="452.2" y="412.21" width="10.68" height="1.38" fill="#505050" rx="0.5"/><rect x="467.88" y="410.3" width="4.52" height="5.3" fill="#3a3a3a" /><rect x="468.18" y="410.3" width="1" height="5.3" fill="#1c1c1c" /><rect x="470.08" y="410.3" width="1" height="5.3" fill="#1c1c1c" /><rect x="469.18" y="410.7" width="0.9" height="4.5" fill="#9a9a9a" />
<rect x="473.65" y="410.3" width="18.08" height="5.3" fill="url(#gBay)" rx="1"/><rect x="476.05" y="412.21" width="10.68" height="1.38" fill="#505050" rx="0.5"/><rect x="491.73" y="410.3" width="4.52" height="5.3" fill="#3a3a3a" /><rect x="492.03" y="410.3" width="1" height="5.3" fill="#1c1c1c" /><rect x="493.93" y="410.3" width="1" height="5.3" fill="#1c1c1c" /><rect x="493.03" y="410.7" width="0.9" height="4.5" fill="#9a9a9a" />
<rect x="497.5" y="410.3" width="18.08" height="5.3" fill="url(#gBay)" rx="1"/><rect x="499.9" y="412.21" width="10.68" height="1.38" fill="#505050" rx="0.5"/><rect x="515.58" y="410.3" width="4.52" height="5.3" fill="#3a3a3a" /><rect x="515.88" y="410.3" width="1" height="5.3" fill="#1c1c1c" /><rect x="517.78" y="410.3" width="1" height="5.3" fill="#1c1c1c" /><rect x="516.88" y="410.7" width="0.9" height="4.5" fill="#9a9a9a" />
<rect x="521.35" y="410.3" width="18.08" height="5.3" fill="url(#gBay)" rx="1"/><rect x="523.75" y="412.21" width="10.68" height="1.38" fill="#505050" rx="0.5"/><rect x="539.43" y="410.3" width="4.52" height="5.3" fill="#3a3a3a" /><rect x="539.73" y="410.3" width="1" height="5.3" fill="#1c1c1c" /><rect x="541.63" y="410.3" width="1" height="5.3" fill="#1c1c1c" /><rect x="540.73" y="410.7" width="0.9" height="4.5" fill="#9a9a9a" />
<rect x="449.8" y="416.6" width="18.08" height="5.3" fill="url(#gBay)" rx="1"/><rect x="452.2" y="418.51" width="10.68" height="1.38" fill="#505050" rx="0.5"/><rect x="467.88" y="416.6" width="4.52" height="5.3" fill="#3a3a3a" /><rect x="468.18" y="416.6" width="1" height="5.3" fill="#1c1c1c" /><rect x="470.08" y="416.6" width="1" height="5.3" fill="#1c1c1c" /><rect x="469.18" y="417" width="0.9" height="4.5" fill="#9a9a9a" />
<rect x="473.65" y="416.6" width="18.08" height="5.3" fill="url(#gBay)" rx="1"/><rect x="476.05" y="418.51" width="10.68" height="1.38" fill="#505050" rx="0.5"/><rect x="491.73" y="416.6" width="4.52" height="5.3" fill="#3a3a3a" /><rect x="492.03" y="416.6" width="1" height="5.3" fill="#1c1c1c" /><rect x="493.93" y="416.6" width="1" height="5.3" fill="#1c1c1c" /><rect x="493.03" y="417" width="0.9" height="4.5" fill="#9a9a9a" />
<rect x="497.5" y="416.6" width="18.08" height="5.3" fill="url(#gBay)" rx="1"/><rect x="499.9" y="418.51" width="10.68" height="1.38" fill="#505050" rx="0.5"/><rect x="515.58" y="416.6" width="4.52" height="5.3" fill="#3a3a3a" /><rect x="515.88" y="416.6" width="1" height="5.3" fill="#1c1c1c" /><rect x="517.78" y="416.6" width="1" height="5.3" fill="#1c1c1c" /><rect x="516.88" y="417" width="0.9" height="4.5" fill="#9a9a9a" />
<rect x="521.35" y="416.6" width="18.08" height="5.3" fill="url(#gBay)" rx="1"/><rect x="523.75" y="418.51" width="10.68" height="1.38" fill="#505050" rx="0.5"/><rect x="539.43" y="416.6" width="4.52" height="5.3" fill="#3a3a3a" /><rect x="539.73" y="416.6" width="1" height="5.3" fill="#1c1c1c" /><rect x="541.63" y="416.6" width="1" height="5.3" fill="#1c1c1c" /><rect x="540.73" y="417" width="0.9" height="4.5" fill="#9a9a9a" />
<rect x="449.8" y="422.9" width="18.08" height="5.3" fill="url(#gBay)" rx="1"/><rect x="452.2" y="424.81" width="10.68" height="1.38" fill="#505050" rx="0.5"/><rect x="467.88" y="422.9" width="4.52" height="5.3" fill="#3a3a3a" /><rect x="468.18" y="422.9" width="1" height="5.3" fill="#1c1c1c" /><rect x="470.08" y="422.9" width="1" height="5.3" fill="#1c1c1c" /><rect x="469.18" y="423.3" width="0.9" height="4.5" fill="#9a9a9a" />
<rect x="473.65" y="422.9" width="18.08" height="5.3" fill="url(#gBay)" rx="1"/><rect x="476.05" y="424.81" width="10.68" height="1.38" fill="#505050" rx="0.5"/><rect x="491.73" y="422.9" width="4.52" height="5.3" fill="#3a3a3a" /><rect x="492.03" y="422.9" width="1" height="5.3" fill="#1c1c1c" /><rect x="493.93" y="422.9" width="1" height="5.3" fill="#1c1c1c" /><rect x="493.03" y="423.3" width="0.9" height="4.5" fill="#9a9a9a" />
<rect x="497.5" y="422.9" width="18.08" height="5.3" fill="url(#gBay)" rx="1"/><rect x="499.9" y="424.81" width="10.68" height="1.38" fill="#505050" rx="0.5"/><rect x="515.58" y="422.9" width="4.52" height="5.3" fill="#3a3a3a" /><rect x="515.88" y="422.9" width="1" height="5.3" fill="#1c1c1c" /><rect x="517.78" y="422.9" width="1" height="5.3" fill="#1c1c1c" /><rect x="516.88" y="423.3" width="0.9" height="4.5" fill="#9a9a9a" />
<rect x="521.35" y="422.9" width="18.08" height="5.3" fill="url(#gBay)" rx="1"/><rect x="523.75" y="424.81" width="10.68" height="1.38" fill="#505050" rx="0.5"/><rect x="539.43" y="422.9" width="4.52" height="5.3" fill="#3a3a3a" /><rect x="539.73" y="422.9" width="1" height="5.3" fill="#1c1c1c" /><rect x="541.63" y="422.9" width="1" height="5.3" fill="#1c1c1c" /><rect x="540.73" y="423.3" width="0.9" height="4.5" fill="#9a9a9a" />
</g>
<rect x="441" y="397" width="112.8" height="35" fill="none" stroke="#484848" stroke-width="0.5"/>
<path d="M442 400.9l1.800-1.400M442.4 399.4l1 1.600" stroke="#a8a8a8" stroke-width="0.6"/>
<path d="M442 429.1l1.800-1.400M442.4 427.6l1 1.600" stroke="#a8a8a8" stroke-width="0.6"/>
<path d="M551 400.9l1.800-1.400M551.4 399.4l1 1.600" stroke="#a8a8a8" stroke-width="0.6"/>
<path d="M551 429.1l1.800-1.400M551.4 427.6l1 1.600" stroke="#a8a8a8" stroke-width="0.6"/>
<clipPath id="cs2"><rect x="441" y="432" width="112.8" height="30"/></clipPath>
<g clip-path="url(#cs2)">
<rect x="441" y="432" width="112.8" height="30" fill="url(#gSrv)" />
<path d="M470.33 462L497.4 432L508.68 432L481.61 462z" fill="#fff" opacity="0.07"/>
<rect x="449.2" y="434.4" width="95.75" height="26.28" fill="#4a4a4a" />
<rect x="449.8" y="435" width="18.08" height="5.5" fill="url(#gBay)" rx="1"/><rect x="452.2" y="436.98" width="10.68" height="1.43" fill="#505050" rx="0.5"/><rect x="467.88" y="435" width="4.52" height="5.5" fill="#3a3a3a" /><rect x="468.18" y="435" width="1" height="5.5" fill="#1c1c1c" /><rect x="470.08" y="435" width="1" height="5.5" fill="#1c1c1c" /><rect x="469.18" y="435.4" width="0.9" height="4.7" fill="#9a9a9a" />
<rect x="473.65" y="435" width="18.08" height="5.5" fill="url(#gBay)" rx="1"/><rect x="476.05" y="436.98" width="10.68" height="1.43" fill="#505050" rx="0.5"/><rect x="491.73" y="435" width="4.52" height="5.5" fill="#3a3a3a" /><rect x="492.03" y="435" width="1" height="5.5" fill="#1c1c1c" /><rect x="493.93" y="435" width="1" height="5.5" fill="#1c1c1c" /><rect x="493.03" y="435.4" width="0.9" height="4.7" fill="#9a9a9a" />
<rect x="497.5" y="435" width="18.08" height="5.5" fill="url(#gBay)" rx="1"/><rect x="499.9" y="436.98" width="10.68" height="1.43" fill="#505050" rx="0.5"/><rect x="515.58" y="435" width="4.52" height="5.5" fill="#3a3a3a" /><rect x="515.88" y="435" width="1" height="5.5" fill="#1c1c1c" /><rect x="517.78" y="435" width="1" height="5.5" fill="#1c1c1c" /><rect x="516.88" y="435.4" width="0.9" height="4.7" fill="#9a9a9a" />
<rect x="521.35" y="435" width="18.08" height="5.5" fill="url(#gBay)" rx="1"/><rect x="523.75" y="436.98" width="10.68" height="1.43" fill="#505050" rx="0.5"/><rect x="539.43" y="435" width="4.52" height="5.5" fill="#3a3a3a" /><rect x="539.73" y="435" width="1" height="5.5" fill="#1c1c1c" /><rect x="541.63" y="435" width="1" height="5.5" fill="#1c1c1c" /><rect x="540.73" y="435.4" width="0.9" height="4.7" fill="#9a9a9a" />
<rect x="449.8" y="441.47" width="18.08" height="5.5" fill="url(#gBay)" rx="1"/><rect x="452.2" y="443.45" width="10.68" height="1.43" fill="#505050" rx="0.5"/><rect x="467.88" y="441.47" width="4.52" height="5.5" fill="#3a3a3a" /><rect x="468.18" y="441.47" width="1" height="5.5" fill="#1c1c1c" /><rect x="470.08" y="441.47" width="1" height="5.5" fill="#1c1c1c" /><rect x="469.18" y="441.87" width="0.9" height="4.7" fill="#9a9a9a" />
<rect x="473.65" y="441.47" width="18.08" height="5.5" fill="url(#gBay)" rx="1"/><rect x="476.05" y="443.45" width="10.68" height="1.43" fill="#505050" rx="0.5"/><rect x="491.73" y="441.47" width="4.52" height="5.5" fill="#3a3a3a" /><rect x="492.03" y="441.47" width="1" height="5.5" fill="#1c1c1c" /><rect x="493.93" y="441.47" width="1" height="5.5" fill="#1c1c1c" /><rect x="493.03" y="441.87" width="0.9" height="4.7" fill="#9a9a9a" />
<rect x="497.5" y="441.47" width="18.08" height="5.5" fill="url(#gBay)" rx="1"/><rect x="499.9" y="443.45" width="10.68" height="1.43" fill="#505050" rx="0.5"/><rect x="515.58" y="441.47" width="4.52" height="5.5" fill="#3a3a3a" /><rect x="515.88" y="441.47" width="1" height="5.5" fill="#1c1c1c" /><rect x="517.78" y="441.47" width="1" height="5.5" fill="#1c1c1c" /><rect x="516.88" y="441.87" width="0.9" height="4.7" fill="#9a9a9a" />
<rect x="521.35" y="441.47" width="18.08" height="5.5" fill="url(#gBay)" rx="1"/><rect x="523.75" y="443.45" width="10.68" height="1.43" fill="#505050" rx="0.5"/><rect x="539.43" y="441.47" width="4.52" height="5.5" fill="#3a3a3a" /><rect x="539.73" y="441.47" width="1" height="5.5" fill="#1c1c1c" /><rect x="541.63" y="441.47" width="1" height="5.5" fill="#1c1c1c" /><rect x="540.73" y="441.87" width="0.9" height="4.7" fill="#9a9a9a" />
<rect x="449.8" y="447.94" width="18.08" height="5.5" fill="url(#gBay)" rx="1"/><rect x="452.2" y="449.92" width="10.68" height="1.43" fill="#505050" rx="0.5"/><rect x="467.88" y="447.94" width="4.52" height="5.5" fill="#3a3a3a" /><rect x="468.18" y="447.94" width="1" height="5.5" fill="#1c1c1c" /><rect x="470.08" y="447.94" width="1" height="5.5" fill="#1c1c1c" /><rect x="469.18" y="448.34" width="0.9" height="4.7" fill="#9a9a9a" />
<rect x="473.65" y="447.94" width="18.08" height="5.5" fill="url(#gBay)" rx="1"/><rect x="476.05" y="449.92" width="10.68" height="1.43" fill="#505050" rx="0.5"/><rect x="491.73" y="447.94" width="4.52" height="5.5" fill="#3a3a3a" /><rect x="492.03" y="447.94" width="1" height="5.5" fill="#1c1c1c" /><rect x="493.93" y="447.94" width="1" height="5.5" fill="#1c1c1c" /><rect x="493.03" y="448.34" width="0.9" height="4.7" fill="#9a9a9a" />
<rect x="497.5" y="447.94" width="18.08" height="5.5" fill="url(#gBay)" rx="1"/><rect x="499.9" y="449.92" width="10.68" height="1.43" fill="#505050" rx="0.5"/><rect x="515.58" y="447.94" width="4.52" height="5.5" fill="#3a3a3a" /><rect x="515.88" y="447.94" width="1" height="5.5" fill="#1c1c1c" /><rect x="517.78" y="447.94" width="1" height="5.5" fill="#1c1c1c" /><rect x="516.88" y="448.34" width="0.9" height="4.7" fill="#9a9a9a" />
<rect x="521.35" y="447.94" width="18.08" height="5.5" fill="url(#gBay)" rx="1"/><rect x="523.75" y="449.92" width="10.68" height="1.43" fill="#505050" rx="0.5"/><rect x="539.43" y="447.94" width="4.52" height="5.5" fill="#3a3a3a" /><rect x="539.73" y="447.94" width="1" height="5.5" fill="#1c1c1c" /><rect x="541.63" y="447.94" width="1" height="5.5" fill="#1c1c1c" /><rect x="540.73" y="448.34" width="0.9" height="4.7" fill="#9a9a9a" />
<rect x="449.8" y="454.41" width="18.08" height="5.5" fill="url(#gBay)" rx="1"/><rect x="452.2" y="456.39" width="10.68" height="1.43" fill="#505050" rx="0.5"/><rect x="467.88" y="454.41" width="4.52" height="5.5" fill="#3a3a3a" /><rect x="468.18" y="454.41" width="1" height="5.5" fill="#1c1c1c" /><rect x="470.08" y="454.41" width="1" height="5.5" fill="#1c1c1c" /><rect x="469.18" y="454.81" width="0.9" height="4.7" fill="#9a9a9a" />
<rect x="473.65" y="454.41" width="18.08" height="5.5" fill="url(#gBay)" rx="1"/><rect x="476.05" y="456.39" width="10.68" height="1.43" fill="#505050" rx="0.5"/><rect x="491.73" y="454.41" width="4.52" height="5.5" fill="#3a3a3a" /><rect x="492.03" y="454.41" width="1" height="5.5" fill="#1c1c1c" /><rect x="493.93" y="454.41" width="1" height="5.5" fill="#1c1c1c" /><rect x="493.03" y="454.81" width="0.9" height="4.7" fill="#9a9a9a" />
<rect x="497.5" y="454.41" width="18.08" height="5.5" fill="url(#gBay)" rx="1"/><rect x="499.9" y="456.39" width="10.68" height="1.43" fill="#505050" rx="0.5"/><rect x="515.58" y="454.41" width="4.52" height="5.5" fill="#3a3a3a" /><rect x="515.88" y="454.41" width="1" height="5.5" fill="#1c1c1c" /><rect x="517.78" y="454.41" width="1" height="5.5" fill="#1c1c1c" /><rect x="516.88" y="454.81" width="0.9" height="4.7" fill="#9a9a9a" />
<rect x="521.35" y="454.41" width="18.08" height="5.5" fill="url(#gBay)" rx="1"/><rect x="523.75" y="456.39" width="10.68" height="1.43" fill="#505050" rx="0.5"/><rect x="539.43" y="454.41" width="4.52" height="5.5" fill="#3a3a3a" /><rect x="539.73" y="454.41" width="1" height="5.5" fill="#1c1c1c" /><rect x="541.63" y="454.41" width="1" height="5.5" fill="#1c1c1c" /><rect x="540.73" y="454.81" width="0.9" height="4.7" fill="#9a9a9a" />
</g>
<rect x="441" y="432" width="112.8" height="30" fill="none" stroke="#484848" stroke-width="0.5"/>
<path d="M442 435.9l1.800-1.400M442.4 434.4l1 1.600" stroke="#a8a8a8" stroke-width="0.6"/>
<path d="M442 459.1l1.800-1.400M442.4 457.6l1 1.600" stroke="#a8a8a8" stroke-width="0.6"/>
<path d="M551 435.9l1.800-1.400M551.4 434.4l1 1.600" stroke="#a8a8a8" stroke-width="0.6"/>
<path d="M551 459.1l1.800-1.400M551.4 457.6l1 1.600" stroke="#a8a8a8" stroke-width="0.6"/>
<clipPath id="cs3"><rect x="441" y="462" width="112.8" height="20"/></clipPath>
<g clip-path="url(#cs3)">
<rect x="441" y="462" width="112.8" height="20" fill="url(#gSrv)" />
<path d="M470.33 482L497.4 462L508.68 462L481.61 482z" fill="#fff" opacity="0.07"/>
<rect x="449.6" y="463" width="2.6" height="1" fill="#1a1a1a" />
<rect x="459.6" y="463.2" width="28.4" height="1.3" fill="#4a4a4a" />
<rect x="505.6" y="463.2" width="36.4" height="1.3" fill="#4a4a4a" />
<rect x="460" y="464.1" width="27.6" height="0.5" fill="#8a8a8a" />
<rect x="506" y="464.1" width="35.6" height="0.5" fill="#8a8a8a" />
<rect x="449.2" y="467.4" width="95.75" height="12.4" fill="#4a4a4a" />
<rect x="449.8" y="468" width="18.08" height="5.2" fill="url(#gBay)" rx="1"/><rect x="452.2" y="469.87" width="10.68" height="1.35" fill="#505050" rx="0.5"/><rect x="467.88" y="468" width="4.52" height="5.2" fill="#3a3a3a" /><rect x="468.18" y="468" width="1" height="5.2" fill="#1c1c1c" /><rect x="470.08" y="468" width="1" height="5.2" fill="#1c1c1c" /><rect x="469.18" y="468.4" width="0.9" height="4.4" fill="#9a9a9a" />
<rect x="473.65" y="468" width="18.08" height="5.2" fill="url(#gBay)" rx="1"/><rect x="476.05" y="469.87" width="10.68" height="1.35" fill="#505050" rx="0.5"/><rect x="491.73" y="468" width="4.52" height="5.2" fill="#3a3a3a" /><rect x="492.03" y="468" width="1" height="5.2" fill="#1c1c1c" /><rect x="493.93" y="468" width="1" height="5.2" fill="#1c1c1c" /><rect x="493.03" y="468.4" width="0.9" height="4.4" fill="#9a9a9a" />
<rect x="497.5" y="468" width="18.08" height="5.2" fill="url(#gBay)" rx="1"/><rect x="499.9" y="469.87" width="10.68" height="1.35" fill="#505050" rx="0.5"/><rect x="515.58" y="468" width="4.52" height="5.2" fill="#3a3a3a" /><rect x="515.88" y="468" width="1" height="5.2" fill="#1c1c1c" /><rect x="517.78" y="468" width="1" height="5.2" fill="#1c1c1c" /><rect x="516.88" y="468.4" width="0.9" height="4.4" fill="#9a9a9a" />
<rect x="521.35" y="468" width="18.08" height="5.2" fill="url(#gBay)" rx="1"/><rect x="523.75" y="469.87" width="10.68" height="1.35" fill="#505050" rx="0.5"/><rect x="539.43" y="468" width="4.52" height="5.2" fill="#3a3a3a" /><rect x="539.73" y="468" width="1" height="5.2" fill="#1c1c1c" /><rect x="541.63" y="468" width="1" height="5.2" fill="#1c1c1c" /><rect x="540.73" y="468.4" width="0.9" height="4.4" fill="#9a9a9a" />
<rect x="449.8" y="474" width="18.08" height="5.2" fill="url(#gBay)" rx="1"/><rect x="452.2" y="475.87" width="10.68" height="1.35" fill="#505050" rx="0.5"/><rect x="467.88" y="474" width="4.52" height="5.2" fill="#3a3a3a" /><rect x="468.18" y="474" width="1" height="5.2" fill="#1c1c1c" /><rect x="470.08" y="474" width="1" height="5.2" fill="#1c1c1c" /><rect x="469.18" y="474.4" width="0.9" height="4.4" fill="#9a9a9a" />
<rect x="473.65" y="474" width="18.08" height="5.2" fill="url(#gBay)" rx="1"/><rect x="476.05" y="475.87" width="10.68" height="1.35" fill="#505050" rx="0.5"/><rect x="491.73" y="474" width="4.52" height="5.2" fill="#3a3a3a" /><rect x="492.03" y="474" width="1" height="5.2" fill="#1c1c1c" /><rect x="493.93" y="474" width="1" height="5.2" fill="#1c1c1c" /><rect x="493.03" y="474.4" width="0.9" height="4.4" fill="#9a9a9a" />
<rect x="497.5" y="474" width="18.08" height="5.2" fill="url(#gBay)" rx="1"/><rect x="499.9" y="475.87" width="10.68" height="1.35" fill="#505050" rx="0.5"/><rect x="515.58" y="474" width="4.52" height="5.2" fill="#3a3a3a" /><rect x="515.88" y="474" width="1" height="5.2" fill="#1c1c1c" /><rect x="517.78" y="474" width="1" height="5.2" fill="#1c1c1c" /><rect x="516.88" y="474.4" width="0.9" height="4.4" fill="#9a9a9a" />
<rect x="521.35" y="474" width="18.08" height="5.2" fill="url(#gBay)" rx="1"/><rect x="523.75" y="475.87" width="10.68" height="1.35" fill="#505050" rx="0.5"/><rect x="539.43" y="474" width="4.52" height="5.2" fill="#3a3a3a" /><rect x="539.73" y="474" width="1" height="5.2" fill="#1c1c1c" /><rect x="541.63" y="474" width="1" height="5.2" fill="#1c1c1c" /><rect x="540.73" y="474.4" width="0.9" height="4.4" fill="#9a9a9a" />
</g>
<rect x="441" y="462" width="112.8" height="20" fill="none" stroke="#484848" stroke-width="0.5"/>
<path d="M442 465.9l1.800-1.400M442.4 464.4l1 1.600" stroke="#a8a8a8" stroke-width="0.6"/>
<path d="M442 479.1l1.800-1.400M442.4 477.6l1 1.600" stroke="#a8a8a8" stroke-width="0.6"/>
<path d="M551 465.9l1.800-1.400M551.4 464.4l1 1.600" stroke="#a8a8a8" stroke-width="0.6"/>
<path d="M551 479.1l1.800-1.400M551.4 477.6l1 1.600" stroke="#a8a8a8" stroke-width="0.6"/>
<rect x="441" y="482" width="112.8" height="20.8" fill="#5c5c5c" stroke="#444" stroke-width="0.5"/>
<rect x="450" y="482" width="94" height="20.4" fill="#141414" />
<rect x="450.9" y="481.6" width="21.9" height="5.7" fill="#3c3c3c" />
<rect x="451.9" y="481.9" width="1.3" height="5.1" fill="#6a6a6a" />
<rect x="453.9" y="481.6" width="3" height="5.7" fill="#030303" />
<rect x="458.5" y="482.5" width="11.9" height="3.9" fill="#8e8e8e" />
<rect x="464.06" y="483.65" width="5.64" height="1.71" fill="#c8c8c8" />
<rect x="474.4" y="481.6" width="21.9" height="5.7" fill="#3c3c3c" />
<rect x="475.4" y="481.9" width="1.3" height="5.1" fill="#6a6a6a" />
<rect x="477.4" y="481.6" width="3" height="5.7" fill="#030303" />
<rect x="482" y="482.5" width="11.9" height="3.9" fill="#8e8e8e" />
<rect x="487.56" y="483.65" width="5.64" height="1.71" fill="#c8c8c8" />
<rect x="497.9" y="481.6" width="21.9" height="5.7" fill="#3c3c3c" />
<rect x="498.9" y="481.9" width="1.3" height="5.1" fill="#6a6a6a" />
<rect x="500.9" y="481.6" width="3" height="5.7" fill="#030303" />
<rect x="505.5" y="482.5" width="11.9" height="3.9" fill="#8e8e8e" />
<rect x="511.06" y="483.65" width="5.64" height="1.71" fill="#c8c8c8" />
<rect x="521.4" y="481.6" width="21.9" height="5.7" fill="#3c3c3c" />
<rect x="522.4" y="481.9" width="1.3" height="5.1" fill="#6a6a6a" />
<rect x="524.4" y="481.6" width="3" height="5.7" fill="#030303" />
<rect x="529" y="482.5" width="11.9" height="3.9" fill="#8e8e8e" />
<rect x="534.56" y="483.65" width="5.64" height="1.71" fill="#c8c8c8" />
<rect x="450.9" y="488.6" width="21.9" height="5.7" fill="#3c3c3c" />
<rect x="451.9" y="488.9" width="1.3" height="5.1" fill="#6a6a6a" />
<rect x="453.9" y="488.6" width="3" height="5.7" fill="#030303" />
<rect x="458.5" y="489.5" width="11.9" height="3.9" fill="#8e8e8e" />
<rect x="464.06" y="490.65" width="5.64" height="1.71" fill="#c8c8c8" />
<rect x="474.4" y="488.6" width="21.9" height="5.7" fill="#3c3c3c" />
<rect x="475.4" y="488.9" width="1.3" height="5.1" fill="#6a6a6a" />
<rect x="477.4" y="488.6" width="3" height="5.7" fill="#030303" />
<rect x="482" y="489.5" width="11.9" height="3.9" fill="#8e8e8e" />
<rect x="487.56" y="490.65" width="5.64" height="1.71" fill="#c8c8c8" />
<rect x="497.9" y="488.6" width="21.9" height="5.7" fill="#3c3c3c" />
<rect x="498.9" y="488.9" width="1.3" height="5.1" fill="#6a6a6a" />
<rect x="500.9" y="488.6" width="3" height="5.7" fill="#030303" />
<rect x="505.5" y="489.5" width="11.9" height="3.9" fill="#8e8e8e" />
<rect x="511.06" y="490.65" width="5.64" height="1.71" fill="#c8c8c8" />
<rect x="521.4" y="488.6" width="21.9" height="5.7" fill="#3c3c3c" />
<rect x="522.4" y="488.9" width="1.3" height="5.1" fill="#6a6a6a" />
<rect x="524.4" y="488.6" width="3" height="5.7" fill="#030303" />
<rect x="529" y="489.5" width="11.9" height="3.9" fill="#8e8e8e" />
<rect x="534.56" y="490.65" width="5.64" height="1.71" fill="#c8c8c8" />
<rect x="450.9" y="495.6" width="21.9" height="5.7" fill="#3c3c3c" />
<rect x="451.9" y="495.9" width="1.3" height="5.1" fill="#6a6a6a" />
<rect x="453.9" y="495.6" width="3" height="5.7" fill="#030303" />
<rect x="458.5" y="496.5" width="11.9" height="3.9" fill="#8e8e8e" />
<rect x="464.06" y="497.65" width="5.64" height="1.71" fill="#c8c8c8" />
<rect x="474.4" y="495.6" width="21.9" height="5.7" fill="#3c3c3c" />
<rect x="475.4" y="495.9" width="1.3" height="5.1" fill="#6a6a6a" />
<rect x="477.4" y="495.6" width="3" height="5.7" fill="#030303" />
<rect x="482" y="496.5" width="11.9" height="3.9" fill="#8e8e8e" />
<rect x="487.56" y="497.65" width="5.64" height="1.71" fill="#c8c8c8" />
<rect x="497.9" y="495.6" width="21.9" height="5.7" fill="#3c3c3c" />
<rect x="498.9" y="495.9" width="1.3" height="5.1" fill="#6a6a6a" />
<rect x="500.9" y="495.6" width="3" height="5.7" fill="#030303" />
<rect x="505.5" y="496.5" width="11.9" height="3.9" fill="#8e8e8e" />
<rect x="511.06" y="497.65" width="5.64" height="1.71" fill="#c8c8c8" />
<rect x="521.4" y="495.6" width="21.9" height="5.7" fill="#3c3c3c" />
<rect x="522.4" y="495.9" width="1.3" height="5.1" fill="#6a6a6a" />
<rect x="524.4" y="495.6" width="3" height="5.7" fill="#030303" />
<rect x="529" y="496.5" width="11.9" height="3.9" fill="#8e8e8e" />
<rect x="534.56" y="497.65" width="5.64" height="1.71" fill="#c8c8c8" />
<path d="M442 485.7l1.800-1.400M442.4 484.2l1 1.600" stroke="#a4a4a4" stroke-width="0.6"/><path d="M442 500.5l1.800-1.400M442.4 499l1 1.600" stroke="#a4a4a4" stroke-width="0.6"/><path d="M551 485.7l1.800-1.400M551.4 484.2l1 1.600" stroke="#a4a4a4" stroke-width="0.6"/><path d="M551 500.5l1.800-1.400M551.4 499l1 1.600" stroke="#a4a4a4" stroke-width="0.6"/>
<clipPath id="cs4"><rect x="441" y="502.8" width="112.8" height="31.2"/></clipPath>
<g clip-path="url(#cs4)">
<rect x="441" y="502.8" width="112.8" height="31.2" fill="#555" stroke="#3c3c3c" stroke-width="0.5"/>
<rect x="446.3" y="503.6" width="101.7" height="29.4" fill="#2a2a2a" />
<rect x="447.3" y="499.6" width="23.88" height="7.2" fill="url(#gDrv)" rx="1.2" stroke="#2a2a2a" stroke-width="0.4"/>
<ellipse cx="455.18" cy="503.2" rx="5.61" ry="2.38" fill="url(#pMesh2)" stroke="#444" stroke-width="0.5"/>
<rect x="461.62" y="499.9" width="0.6" height="6.6" fill="#5a5a5a" />
<circle cx="464.85" cy="503.2" r="1.73" fill="#e4e4e4" stroke="#202020" stroke-width="1.1"/>
<rect x="468.91" y="501.18" width="1.1" height="1.1" fill="#1e1e1e" />
<rect x="468.91" y="503.92" width="1.1" height="1.1" fill="#1e1e1e" />
<rect x="472.57" y="499.6" width="23.88" height="7.2" fill="url(#gDrv)" rx="1.2" stroke="#2a2a2a" stroke-width="0.4"/>
<ellipse cx="480.45" cy="503.2" rx="5.61" ry="2.38" fill="url(#pMesh2)" stroke="#444" stroke-width="0.5"/>
<rect x="486.9" y="499.9" width="0.6" height="6.6" fill="#5a5a5a" />
<circle cx="490.12" cy="503.2" r="1.73" fill="#e4e4e4" stroke="#202020" stroke-width="1.1"/>
<rect x="494.18" y="501.18" width="1.1" height="1.1" fill="#1e1e1e" />
<rect x="494.18" y="503.92" width="1.1" height="1.1" fill="#1e1e1e" />
<rect x="497.85" y="499.6" width="23.88" height="7.2" fill="url(#gDrv)" rx="1.2" stroke="#2a2a2a" stroke-width="0.4"/>
<ellipse cx="505.73" cy="503.2" rx="5.61" ry="2.38" fill="url(#pMesh2)" stroke="#444" stroke-width="0.5"/>
<rect x="512.18" y="499.9" width="0.6" height="6.6" fill="#5a5a5a" />
<circle cx="515.4" cy="503.2" r="1.73" fill="#e4e4e4" stroke="#202020" stroke-width="1.1"/>
<rect x="519.46" y="501.18" width="1.1" height="1.1" fill="#1e1e1e" />
<rect x="519.46" y="503.92" width="1.1" height="1.1" fill="#1e1e1e" />
<rect x="523.12" y="499.6" width="23.88" height="7.2" fill="url(#gDrv)" rx="1.2" stroke="#2a2a2a" stroke-width="0.4"/>
<ellipse cx="531" cy="503.2" rx="5.61" ry="2.38" fill="url(#pMesh2)" stroke="#444" stroke-width="0.5"/>
<rect x="537.45" y="499.9" width="0.6" height="6.6" fill="#5a5a5a" />
<circle cx="540.67" cy="503.2" r="1.73" fill="#e4e4e4" stroke="#202020" stroke-width="1.1"/>
<rect x="544.73" y="501.18" width="1.1" height="1.1" fill="#1e1e1e" />
<rect x="544.73" y="503.92" width="1.1" height="1.1" fill="#1e1e1e" />
<rect x="447.3" y="508.35" width="23.88" height="7.2" fill="url(#gDrv)" rx="1.2" stroke="#2a2a2a" stroke-width="0.4"/>
<ellipse cx="455.18" cy="511.95" rx="5.61" ry="2.38" fill="url(#pMesh2)" stroke="#444" stroke-width="0.5"/>
<rect x="461.62" y="508.65" width="0.6" height="6.6" fill="#5a5a5a" />
<circle cx="464.85" cy="511.95" r="1.73" fill="#e4e4e4" stroke="#202020" stroke-width="1.1"/>
<rect x="468.91" y="509.93" width="1.1" height="1.1" fill="#1e1e1e" />
<rect x="468.91" y="512.67" width="1.1" height="1.1" fill="#1e1e1e" />
<rect x="472.57" y="508.35" width="23.88" height="7.2" fill="url(#gDrv)" rx="1.2" stroke="#2a2a2a" stroke-width="0.4"/>
<ellipse cx="480.45" cy="511.95" rx="5.61" ry="2.38" fill="url(#pMesh2)" stroke="#444" stroke-width="0.5"/>
<rect x="486.9" y="508.65" width="0.6" height="6.6" fill="#5a5a5a" />
<circle cx="490.12" cy="511.95" r="1.73" fill="#e4e4e4" stroke="#202020" stroke-width="1.1"/>
<rect x="494.18" y="509.93" width="1.1" height="1.1" fill="#1e1e1e" />
<rect x="494.18" y="512.67" width="1.1" height="1.1" fill="#1e1e1e" />
<rect x="497.85" y="508.35" width="23.88" height="7.2" fill="url(#gDrv)" rx="1.2" stroke="#2a2a2a" stroke-width="0.4"/>
<ellipse cx="505.73" cy="511.95" rx="5.61" ry="2.38" fill="url(#pMesh2)" stroke="#444" stroke-width="0.5"/>
<rect x="512.18" y="508.65" width="0.6" height="6.6" fill="#5a5a5a" />
<circle cx="515.4" cy="511.95" r="1.73" fill="#e4e4e4" stroke="#202020" stroke-width="1.1"/>
<rect x="519.46" y="509.93" width="1.1" height="1.1" fill="#1e1e1e" />
<rect x="519.46" y="512.67" width="1.1" height="1.1" fill="#1e1e1e" />
<rect x="523.12" y="508.35" width="23.88" height="7.2" fill="url(#gDrv)" rx="1.2" stroke="#2a2a2a" stroke-width="0.4"/>
<ellipse cx="531" cy="511.95" rx="5.61" ry="2.38" fill="url(#pMesh2)" stroke="#444" stroke-width="0.5"/>
<rect x="537.45" y="508.65" width="0.6" height="6.6" fill="#5a5a5a" />
<circle cx="540.67" cy="511.95" r="1.73" fill="#e4e4e4" stroke="#202020" stroke-width="1.1"/>
<rect x="544.73" y="509.93" width="1.1" height="1.1" fill="#1e1e1e" />
<rect x="544.73" y="512.67" width="1.1" height="1.1" fill="#1e1e1e" />
<rect x="447.3" y="517.1" width="23.88" height="7.2" fill="url(#gDrv)" rx="1.2" stroke="#2a2a2a" stroke-width="0.4"/>
<ellipse cx="455.18" cy="520.7" rx="5.61" ry="2.38" fill="url(#pMesh2)" stroke="#444" stroke-width="0.5"/>
<rect x="461.62" y="517.4" width="0.6" height="6.6" fill="#5a5a5a" />
<circle cx="464.85" cy="520.7" r="1.73" fill="#e4e4e4" stroke="#202020" stroke-width="1.1"/>
<rect x="468.91" y="518.68" width="1.1" height="1.1" fill="#1e1e1e" />
<rect x="468.91" y="521.42" width="1.1" height="1.1" fill="#1e1e1e" />
<rect x="472.57" y="517.1" width="23.88" height="7.2" fill="url(#gDrv)" rx="1.2" stroke="#2a2a2a" stroke-width="0.4"/>
<ellipse cx="480.45" cy="520.7" rx="5.61" ry="2.38" fill="url(#pMesh2)" stroke="#444" stroke-width="0.5"/>
<rect x="486.9" y="517.4" width="0.6" height="6.6" fill="#5a5a5a" />
<circle cx="490.12" cy="520.7" r="1.73" fill="#e4e4e4" stroke="#202020" stroke-width="1.1"/>
<rect x="494.18" y="518.68" width="1.1" height="1.1" fill="#1e1e1e" />
<rect x="494.18" y="521.42" width="1.1" height="1.1" fill="#1e1e1e" />
<rect x="497.85" y="517.1" width="23.88" height="7.2" fill="url(#gDrv)" rx="1.2" stroke="#2a2a2a" stroke-width="0.4"/>
<ellipse cx="505.73" cy="520.7" rx="5.61" ry="2.38" fill="url(#pMesh2)" stroke="#444" stroke-width="0.5"/>
<rect x="512.18" y="517.4" width="0.6" height="6.6" fill="#5a5a5a" />
<circle cx="515.4" cy="520.7" r="1.73" fill="#e4e4e4" stroke="#202020" stroke-width="1.1"/>
<rect x="519.46" y="518.68" width="1.1" height="1.1" fill="#1e1e1e" />
<rect x="519.46" y="521.42" width="1.1" height="1.1" fill="#1e1e1e" />
<rect x="523.12" y="517.1" width="23.88" height="7.2" fill="url(#gDrv)" rx="1.2" stroke="#2a2a2a" stroke-width="0.4"/>
<ellipse cx="531" cy="520.7" rx="5.61" ry="2.38" fill="url(#pMesh2)" stroke="#444" stroke-width="0.5"/>
<rect x="537.45" y="517.4" width="0.6" height="6.6" fill="#5a5a5a" />
<circle cx="540.67" cy="520.7" r="1.73" fill="#e4e4e4" stroke="#202020" stroke-width="1.1"/>
<rect x="544.73" y="518.68" width="1.1" height="1.1" fill="#1e1e1e" />
<rect x="544.73" y="521.42" width="1.1" height="1.1" fill="#1e1e1e" />
<rect x="447.3" y="525.85" width="23.88" height="7.2" fill="url(#gDrv)" rx="1.2" stroke="#2a2a2a" stroke-width="0.4"/>
<ellipse cx="455.18" cy="529.45" rx="5.61" ry="2.38" fill="url(#pMesh2)" stroke="#444" stroke-width="0.5"/>
<rect x="461.62" y="526.15" width="0.6" height="6.6" fill="#5a5a5a" />
<circle cx="464.85" cy="529.45" r="1.73" fill="#e4e4e4" stroke="#202020" stroke-width="1.1"/>
<rect x="468.91" y="527.43" width="1.1" height="1.1" fill="#1e1e1e" />
<rect x="468.91" y="530.17" width="1.1" height="1.1" fill="#1e1e1e" />
<rect x="472.57" y="525.85" width="23.88" height="7.2" fill="url(#gDrv)" rx="1.2" stroke="#2a2a2a" stroke-width="0.4"/>
<ellipse cx="480.45" cy="529.45" rx="5.61" ry="2.38" fill="url(#pMesh2)" stroke="#444" stroke-width="0.5"/>
<rect x="486.9" y="526.15" width="0.6" height="6.6" fill="#5a5a5a" />
<circle cx="490.12" cy="529.45" r="1.73" fill="#e4e4e4" stroke="#202020" stroke-width="1.1"/>
<rect x="494.18" y="527.43" width="1.1" height="1.1" fill="#1e1e1e" />
<rect x="494.18" y="530.17" width="1.1" height="1.1" fill="#1e1e1e" />
<rect x="497.85" y="525.85" width="23.88" height="7.2" fill="url(#gDrv)" rx="1.2" stroke="#2a2a2a" stroke-width="0.4"/>
<ellipse cx="505.73" cy="529.45" rx="5.61" ry="2.38" fill="url(#pMesh2)" stroke="#444" stroke-width="0.5"/>
<rect x="512.18" y="526.15" width="0.6" height="6.6" fill="#5a5a5a" />
<circle cx="515.4" cy="529.45" r="1.73" fill="#e4e4e4" stroke="#202020" stroke-width="1.1"/>
<rect x="519.46" y="527.43" width="1.1" height="1.1" fill="#1e1e1e" />
<rect x="519.46" y="530.17" width="1.1" height="1.1" fill="#1e1e1e" />
<rect x="523.12" y="525.85" width="23.88" height="7.2" fill="url(#gDrv)" rx="1.2" stroke="#2a2a2a" stroke-width="0.4"/>
<ellipse cx="531" cy="529.45" rx="5.61" ry="2.38" fill="url(#pMesh2)" stroke="#444" stroke-width="0.5"/>
<rect x="537.45" y="526.15" width="0.6" height="6.6" fill="#5a5a5a" />
<circle cx="540.67" cy="529.45" r="1.73" fill="#e4e4e4" stroke="#202020" stroke-width="1.1"/>
<rect x="544.73" y="527.43" width="1.1" height="1.1" fill="#1e1e1e" />
<rect x="544.73" y="530.17" width="1.1" height="1.1" fill="#1e1e1e" />
<rect x="527.9" y="502.4" width="20" height="10.5" fill="#333" stroke="#161616" stroke-width="0.7" rx="1"/>
<rect x="530.9" y="504.2" width="13.8" height="3.78" fill="#5db5ef" />
<rect x="531.9" y="509.12" width="2" height="1.6" fill="#a4a4a4" />
<rect x="535.2" y="509.12" width="2" height="1.6" fill="#a4a4a4" />
<rect x="538.5" y="509.12" width="2" height="1.6" fill="#a4a4a4" />
<rect x="541.8" y="509.12" width="2" height="1.6" fill="#a4a4a4" />
</g>
<path d="M442 506.5l1.800-1.400M442.4 505l1 1.600" stroke="#a4a4a4" stroke-width="0.6"/><path d="M442 531.7l1.800-1.400M442.4 530.2l1 1.600" stroke="#a4a4a4" stroke-width="0.6"/><path d="M551 506.5l1.800-1.400M551.4 505l1 1.600" stroke="#a4a4a4" stroke-width="0.6"/><path d="M551 531.7l1.800-1.400M551.4 530.2l1 1.600" stroke="#a4a4a4" stroke-width="0.6"/>
<clipPath id="cs5"><rect x="441" y="534" width="112.8" height="16.3"/></clipPath>
<g clip-path="url(#cs5)">
<rect x="441" y="534" width="112.8" height="16.3" fill="url(#gSrv)" />
<path d="M470.33 550.3L497.4 534L508.68 534L481.61 550.3z" fill="#fff" opacity="0.07"/>
<rect x="449.6" y="536.3" width="2.6" height="1" fill="#1a1a1a" />
<rect x="459.6" y="536.5" width="28.4" height="1.3" fill="#4a4a4a" />
<rect x="505.6" y="536.5" width="36.4" height="1.3" fill="#4a4a4a" />
<rect x="460" y="537.4" width="27.6" height="0.5" fill="#8a8a8a" />
<rect x="506" y="537.4" width="35.6" height="0.5" fill="#8a8a8a" />
<rect x="449.2" y="540.7" width="95.75" height="13" fill="#4a4a4a" />
<rect x="449.8" y="541.3" width="18.08" height="5" fill="url(#gBay)" rx="1"/><rect x="452.2" y="543.1" width="10.68" height="1.3" fill="#505050" rx="0.5"/><rect x="467.88" y="541.3" width="4.52" height="5" fill="#3a3a3a" /><rect x="468.18" y="541.3" width="1" height="5" fill="#1c1c1c" /><rect x="470.08" y="541.3" width="1" height="5" fill="#1c1c1c" /><rect x="469.18" y="541.7" width="0.9" height="4.2" fill="#9a9a9a" />
<rect x="473.65" y="541.3" width="18.08" height="5" fill="url(#gBay)" rx="1"/><rect x="476.05" y="543.1" width="10.68" height="1.3" fill="#505050" rx="0.5"/><rect x="491.73" y="541.3" width="4.52" height="5" fill="#3a3a3a" /><rect x="492.03" y="541.3" width="1" height="5" fill="#1c1c1c" /><rect x="493.93" y="541.3" width="1" height="5" fill="#1c1c1c" /><rect x="493.03" y="541.7" width="0.9" height="4.2" fill="#9a9a9a" />
<rect x="497.5" y="541.3" width="18.08" height="5" fill="url(#gBay)" rx="1"/><rect x="499.9" y="543.1" width="10.68" height="1.3" fill="#505050" rx="0.5"/><rect x="515.58" y="541.3" width="4.52" height="5" fill="#3a3a3a" /><rect x="515.88" y="541.3" width="1" height="5" fill="#1c1c1c" /><rect x="517.78" y="541.3" width="1" height="5" fill="#1c1c1c" /><rect x="516.88" y="541.7" width="0.9" height="4.2" fill="#9a9a9a" />
<rect x="521.35" y="541.3" width="18.08" height="5" fill="url(#gBay)" rx="1"/><rect x="523.75" y="543.1" width="10.68" height="1.3" fill="#505050" rx="0.5"/><rect x="539.43" y="541.3" width="4.52" height="5" fill="#3a3a3a" /><rect x="539.73" y="541.3" width="1" height="5" fill="#1c1c1c" /><rect x="541.63" y="541.3" width="1" height="5" fill="#1c1c1c" /><rect x="540.73" y="541.7" width="0.9" height="4.2" fill="#9a9a9a" />
<rect x="449.8" y="547.6" width="18.08" height="5" fill="url(#gBay)" rx="1"/><rect x="452.2" y="549.4" width="10.68" height="1.3" fill="#505050" rx="0.5"/><rect x="467.88" y="547.6" width="4.52" height="5" fill="#3a3a3a" /><rect x="468.18" y="547.6" width="1" height="5" fill="#1c1c1c" /><rect x="470.08" y="547.6" width="1" height="5" fill="#1c1c1c" /><rect x="469.18" y="548" width="0.9" height="4.2" fill="#9a9a9a" />
<rect x="473.65" y="547.6" width="18.08" height="5" fill="url(#gBay)" rx="1"/><rect x="476.05" y="549.4" width="10.68" height="1.3" fill="#505050" rx="0.5"/><rect x="491.73" y="547.6" width="4.52" height="5" fill="#3a3a3a" /><rect x="492.03" y="547.6" width="1" height="5" fill="#1c1c1c" /><rect x="493.93" y="547.6" width="1" height="5" fill="#1c1c1c" /><rect x="493.03" y="548" width="0.9" height="4.2" fill="#9a9a9a" />
<rect x="497.5" y="547.6" width="18.08" height="5" fill="url(#gBay)" rx="1"/><rect x="499.9" y="549.4" width="10.68" height="1.3" fill="#505050" rx="0.5"/><rect x="515.58" y="547.6" width="4.52" height="5" fill="#3a3a3a" /><rect x="515.88" y="547.6" width="1" height="5" fill="#1c1c1c" /><rect x="517.78" y="547.6" width="1" height="5" fill="#1c1c1c" /><rect x="516.88" y="548" width="0.9" height="4.2" fill="#9a9a9a" />
<rect x="521.35" y="547.6" width="18.08" height="5" fill="url(#gBay)" rx="1"/><rect x="523.75" y="549.4" width="10.68" height="1.3" fill="#505050" rx="0.5"/><rect x="539.43" y="547.6" width="4.52" height="5" fill="#3a3a3a" /><rect x="539.73" y="547.6" width="1" height="5" fill="#1c1c1c" /><rect x="541.63" y="547.6" width="1" height="5" fill="#1c1c1c" /><rect x="540.73" y="548" width="0.9" height="4.2" fill="#9a9a9a" />
</g>
<rect x="441" y="534" width="112.8" height="16.3" fill="none" stroke="#484848" stroke-width="0.5"/>
<path d="M442 537.9l1.800-1.400M442.4 536.4l1 1.600" stroke="#a8a8a8" stroke-width="0.6"/>
<path d="M442 547.4l1.800-1.400M442.4 545.9l1 1.600" stroke="#a8a8a8" stroke-width="0.6"/>
<path d="M551 537.9l1.800-1.400M551.4 536.4l1 1.600" stroke="#a8a8a8" stroke-width="0.6"/>
<path d="M551 547.4l1.800-1.400M551.4 545.9l1 1.600" stroke="#a8a8a8" stroke-width="0.6"/>
<clipPath id="cs6"><rect x="441" y="550.3" width="112.8" height="35.3"/></clipPath>
<g clip-path="url(#cs6)">
<rect x="441" y="550.3" width="112.8" height="35.3" fill="url(#gSrv)" />
<path d="M470.33 585.6L497.4 550.3L508.68 550.3L481.61 585.6z" fill="#fff" opacity="0.07"/>
<path d="M449.4 553.8h3.4l-1.700 2.900z" fill="#101010"/>
<rect x="460.2" y="553.6" width="28.4" height="3.8" fill="#767676" stroke="#3c3c3c" stroke-width="0.5"/>
<rect x="505.8" y="553.6" width="36.2" height="3.8" fill="#767676" stroke="#3c3c3c" stroke-width="0.5"/>
<rect x="449.2" y="561" width="95.75" height="25.4" fill="#4a4a4a" />
<rect x="449.8" y="561.6" width="18.08" height="5.2" fill="url(#gBay)" rx="1"/><rect x="452.2" y="563.47" width="10.68" height="1.35" fill="#505050" rx="0.5"/><rect x="467.88" y="561.6" width="4.52" height="5.2" fill="#3a3a3a" /><rect x="468.18" y="561.6" width="1" height="5.2" fill="#1c1c1c" /><rect x="470.08" y="561.6" width="1" height="5.2" fill="#1c1c1c" /><rect x="469.18" y="562" width="0.9" height="4.4" fill="#9a9a9a" />
<rect x="473.65" y="561.6" width="18.08" height="5.2" fill="url(#gBay)" rx="1"/><rect x="476.05" y="563.47" width="10.68" height="1.35" fill="#505050" rx="0.5"/><rect x="491.73" y="561.6" width="4.52" height="5.2" fill="#3a3a3a" /><rect x="492.03" y="561.6" width="1" height="5.2" fill="#1c1c1c" /><rect x="493.93" y="561.6" width="1" height="5.2" fill="#1c1c1c" /><rect x="493.03" y="562" width="0.9" height="4.4" fill="#9a9a9a" />
<rect x="497.5" y="561.6" width="18.08" height="5.2" fill="url(#gBay)" rx="1"/><rect x="499.9" y="563.47" width="10.68" height="1.35" fill="#505050" rx="0.5"/><rect x="515.58" y="561.6" width="4.52" height="5.2" fill="#3a3a3a" /><rect x="515.88" y="561.6" width="1" height="5.2" fill="#1c1c1c" /><rect x="517.78" y="561.6" width="1" height="5.2" fill="#1c1c1c" /><rect x="516.88" y="562" width="0.9" height="4.4" fill="#9a9a9a" />
<rect x="521.35" y="561.6" width="18.08" height="5.2" fill="url(#gBay)" rx="1"/><rect x="523.75" y="563.47" width="10.68" height="1.35" fill="#505050" rx="0.5"/><rect x="539.43" y="561.6" width="4.52" height="5.2" fill="#3a3a3a" /><rect x="539.73" y="561.6" width="1" height="5.2" fill="#1c1c1c" /><rect x="541.63" y="561.6" width="1" height="5.2" fill="#1c1c1c" /><rect x="540.73" y="562" width="0.9" height="4.4" fill="#9a9a9a" />
<rect x="449.8" y="567.85" width="18.08" height="5.2" fill="url(#gBay)" rx="1"/><rect x="452.2" y="569.72" width="10.68" height="1.35" fill="#505050" rx="0.5"/><rect x="467.88" y="567.85" width="4.52" height="5.2" fill="#3a3a3a" /><rect x="468.18" y="567.85" width="1" height="5.2" fill="#1c1c1c" /><rect x="470.08" y="567.85" width="1" height="5.2" fill="#1c1c1c" /><rect x="469.18" y="568.25" width="0.9" height="4.4" fill="#9a9a9a" />
<rect x="473.65" y="567.85" width="18.08" height="5.2" fill="url(#gBay)" rx="1"/><rect x="476.05" y="569.72" width="10.68" height="1.35" fill="#505050" rx="0.5"/><rect x="491.73" y="567.85" width="4.52" height="5.2" fill="#3a3a3a" /><rect x="492.03" y="567.85" width="1" height="5.2" fill="#1c1c1c" /><rect x="493.93" y="567.85" width="1" height="5.2" fill="#1c1c1c" /><rect x="493.03" y="568.25" width="0.9" height="4.4" fill="#9a9a9a" />
<rect x="497.5" y="567.85" width="18.08" height="5.2" fill="url(#gBay)" rx="1"/><rect x="499.9" y="569.72" width="10.68" height="1.35" fill="#505050" rx="0.5"/><rect x="515.58" y="567.85" width="4.52" height="5.2" fill="#3a3a3a" /><rect x="515.88" y="567.85" width="1" height="5.2" fill="#1c1c1c" /><rect x="517.78" y="567.85" width="1" height="5.2" fill="#1c1c1c" /><rect x="516.88" y="568.25" width="0.9" height="4.4" fill="#9a9a9a" />
<rect x="521.35" y="567.85" width="18.08" height="5.2" fill="url(#gBay)" rx="1"/><rect x="523.75" y="569.72" width="10.68" height="1.35" fill="#505050" rx="0.5"/><rect x="539.43" y="567.85" width="4.52" height="5.2" fill="#3a3a3a" /><rect x="539.73" y="567.85" width="1" height="5.2" fill="#1c1c1c" /><rect x="541.63" y="567.85" width="1" height="5.2" fill="#1c1c1c" /><rect x="540.73" y="568.25" width="0.9" height="4.4" fill="#9a9a9a" />
<rect x="449.8" y="574.1" width="18.08" height="5.2" fill="url(#gBay)" rx="1"/><rect x="452.2" y="575.97" width="10.68" height="1.35" fill="#505050" rx="0.5"/><rect x="467.88" y="574.1" width="4.52" height="5.2" fill="#3a3a3a" /><rect x="468.18" y="574.1" width="1" height="5.2" fill="#1c1c1c" /><rect x="470.08" y="574.1" width="1" height="5.2" fill="#1c1c1c" /><rect x="469.18" y="574.5" width="0.9" height="4.4" fill="#9a9a9a" />
<rect x="473.65" y="574.1" width="18.08" height="5.2" fill="url(#gBay)" rx="1"/><rect x="476.05" y="575.97" width="10.68" height="1.35" fill="#505050" rx="0.5"/><rect x="491.73" y="574.1" width="4.52" height="5.2" fill="#3a3a3a" /><rect x="492.03" y="574.1" width="1" height="5.2" fill="#1c1c1c" /><rect x="493.93" y="574.1" width="1" height="5.2" fill="#1c1c1c" /><rect x="493.03" y="574.5" width="0.9" height="4.4" fill="#9a9a9a" />
<rect x="497.5" y="574.1" width="18.08" height="5.2" fill="url(#gBay)" rx="1"/><rect x="499.9" y="575.97" width="10.68" height="1.35" fill="#505050" rx="0.5"/><rect x="515.58" y="574.1" width="4.52" height="5.2" fill="#3a3a3a" /><rect x="515.88" y="574.1" width="1" height="5.2" fill="#1c1c1c" /><rect x="517.78" y="574.1" width="1" height="5.2" fill="#1c1c1c" /><rect x="516.88" y="574.5" width="0.9" height="4.4" fill="#9a9a9a" />
<rect x="521.35" y="574.1" width="18.08" height="5.2" fill="url(#gBay)" rx="1"/><rect x="523.75" y="575.97" width="10.68" height="1.35" fill="#505050" rx="0.5"/><rect x="539.43" y="574.1" width="4.52" height="5.2" fill="#3a3a3a" /><rect x="539.73" y="574.1" width="1" height="5.2" fill="#1c1c1c" /><rect x="541.63" y="574.1" width="1" height="5.2" fill="#1c1c1c" /><rect x="540.73" y="574.5" width="0.9" height="4.4" fill="#9a9a9a" />
<rect x="449.8" y="580.35" width="18.08" height="5.2" fill="url(#gBay)" rx="1"/><rect x="452.2" y="582.22" width="10.68" height="1.35" fill="#505050" rx="0.5"/><rect x="467.88" y="580.35" width="4.52" height="5.2" fill="#3a3a3a" /><rect x="468.18" y="580.35" width="1" height="5.2" fill="#1c1c1c" /><rect x="470.08" y="580.35" width="1" height="5.2" fill="#1c1c1c" /><rect x="469.18" y="580.75" width="0.9" height="4.4" fill="#9a9a9a" />
<rect x="473.65" y="580.35" width="18.08" height="5.2" fill="url(#gBay)" rx="1"/><rect x="476.05" y="582.22" width="10.68" height="1.35" fill="#505050" rx="0.5"/><rect x="491.73" y="580.35" width="4.52" height="5.2" fill="#3a3a3a" /><rect x="492.03" y="580.35" width="1" height="5.2" fill="#1c1c1c" /><rect x="493.93" y="580.35" width="1" height="5.2" fill="#1c1c1c" /><rect x="493.03" y="580.75" width="0.9" height="4.4" fill="#9a9a9a" />
<rect x="497.5" y="580.35" width="18.08" height="5.2" fill="url(#gBay)" rx="1"/><rect x="499.9" y="582.22" width="10.68" height="1.35" fill="#505050" rx="0.5"/><rect x="515.58" y="580.35" width="4.52" height="5.2" fill="#3a3a3a" /><rect x="515.88" y="580.35" width="1" height="5.2" fill="#1c1c1c" /><rect x="517.78" y="580.35" width="1" height="5.2" fill="#1c1c1c" /><rect x="516.88" y="580.75" width="0.9" height="4.4" fill="#9a9a9a" />
<rect x="521.35" y="580.35" width="18.08" height="5.2" fill="url(#gBay)" rx="1"/><rect x="523.75" y="582.22" width="10.68" height="1.35" fill="#505050" rx="0.5"/><rect x="539.43" y="580.35" width="4.52" height="5.2" fill="#3a3a3a" /><rect x="539.73" y="580.35" width="1" height="5.2" fill="#1c1c1c" /><rect x="541.63" y="580.35" width="1" height="5.2" fill="#1c1c1c" /><rect x="540.73" y="580.75" width="0.9" height="4.4" fill="#9a9a9a" />
</g>
<rect x="441" y="550.3" width="112.8" height="35.3" fill="none" stroke="#484848" stroke-width="0.5"/>
<path d="M442 554.2l1.800-1.400M442.4 552.7l1 1.600" stroke="#a8a8a8" stroke-width="0.6"/>
<path d="M442 582.7l1.800-1.400M442.4 581.2l1 1.600" stroke="#a8a8a8" stroke-width="0.6"/>
<path d="M551 554.2l1.800-1.400M551.4 552.7l1 1.600" stroke="#a8a8a8" stroke-width="0.6"/>
<path d="M551 582.7l1.800-1.400M551.4 581.2l1 1.600" stroke="#a8a8a8" stroke-width="0.6"/>
<rect x="441" y="585.8" width="112.8" height="29.8" fill="#bdbdbd" stroke="#7a7a7a" stroke-width="0.5"/>
<rect x="444.8" y="586.4" width="52.2" height="28.6" fill="url(#gUps1)" stroke="#6e6e6e" stroke-width="0.6"/>
<rect x="497.9" y="586.4" width="52.1" height="28.6" fill="url(#gUps2)" stroke="#6e6e6e" stroke-width="0.6"/>
<circle cx="442.9" cy="600.7" r="0.8" fill="#8a8a8a"/><circle cx="551.9" cy="600.7" r="0.8" fill="#8a8a8a"/>
<rect x="681" y="166" width="144" height="460" fill="#3a3a3a" />
<rect x="681" y="166" width="11.4" height="460" fill="#8e8e8e" />
<rect x="813.4" y="166" width="11.6" height="460" fill="url(#gPost)" />
<rect x="692.4" y="166" width="121" height="10.3" fill="url(#gTop)" />
<path d="M692.4 176.3L813.4 176.3" stroke="#5c5c5c" stroke-width="0.7" />
<clipPath id="cu681"><rect x="681.5" y="170" width="10.5" height="450"/></clipPath>
<g clip-path="url(#cu681)" font-size="6.6" text-anchor="end" fill="#eef0fa" font-family="Liberation Sans">
<text x="691.3" y="613.43">1U</text>
<text x="691.3" y="602.96">2U</text>
<text x="691.3" y="592.49">3U</text>
<text x="691.3" y="582.02">4U</text>
<text x="691.3" y="571.55">5U</text>
<text x="691.3" y="561.08">6U</text>
<text x="691.3" y="550.61">7U</text>
<text x="691.3" y="540.14">8U</text>
<text x="691.3" y="529.67">9U</text>
<text x="691.3" y="519.2" textLength="10.6" lengthAdjust="spacingAndGlyphs">10U</text>
<text x="691.3" y="508.73" textLength="10.6" lengthAdjust="spacingAndGlyphs">11U</text>
<text x="691.3" y="498.26" textLength="10.6" lengthAdjust="spacingAndGlyphs">12U</text>
<text x="691.3" y="487.79" textLength="10.6" lengthAdjust="spacingAndGlyphs">13U</text>
<text x="691.3" y="477.32" textLength="10.6" lengthAdjust="spacingAndGlyphs">14U</text>
<text x="691.3" y="466.85" textLength="10.6" lengthAdjust="spacingAndGlyphs">15U</text>
<text x="691.3" y="456.38" textLength="10.6" lengthAdjust="spacingAndGlyphs">16U</text>
<text x="691.3" y="445.91" textLength="10.6" lengthAdjust="spacingAndGlyphs">17U</text>
<text x="691.3" y="435.44" textLength="10.6" lengthAdjust="spacingAndGlyphs">18U</text>
<text x="691.3" y="424.97" textLength="10.6" lengthAdjust="spacingAndGlyphs">19U</text>
<text x="691.3" y="414.5" textLength="10.6" lengthAdjust="spacingAndGlyphs">20U</text>
<text x="691.3" y="404.03" textLength="10.6" lengthAdjust="spacingAndGlyphs">21U</text>
<text x="691.3" y="393.56" textLength="10.6" lengthAdjust="spacingAndGlyphs">22U</text>
<text x="691.3" y="383.09" textLength="10.6" lengthAdjust="spacingAndGlyphs">23U</text>
<text x="691.3" y="372.62" textLength="10.6" lengthAdjust="spacingAndGlyphs">24U</text>
<text x="691.3" y="362.15" textLength="10.6" lengthAdjust="spacingAndGlyphs">25U</text>
<text x="691.3" y="351.68" textLength="10.6" lengthAdjust="spacingAndGlyphs">26U</text>
<text x="691.3" y="341.21" textLength="10.6" lengthAdjust="spacingAndGlyphs">27U</text>
<text x="691.3" y="330.74" textLength="10.6" lengthAdjust="spacingAndGlyphs">28U</text>
<text x="691.3" y="320.27" textLength="10.6" lengthAdjust="spacingAndGlyphs">29U</text>
<text x="691.3" y="309.8" textLength="10.6" lengthAdjust="spacingAndGlyphs">30U</text>
<text x="691.3" y="299.33" textLength="10.6" lengthAdjust="spacingAndGlyphs">31U</text>
<text x="691.3" y="288.86" textLength="10.6" lengthAdjust="spacingAndGlyphs">32U</text>
<text x="691.3" y="278.39" textLength="10.6" lengthAdjust="spacingAndGlyphs">33U</text>
<text x="691.3" y="267.92" textLength="10.6" lengthAdjust="spacingAndGlyphs">34U</text>
<text x="691.3" y="257.45" textLength="10.6" lengthAdjust="spacingAndGlyphs">35U</text>
<text x="691.3" y="246.98" textLength="10.6" lengthAdjust="spacingAndGlyphs">36U</text>
<text x="691.3" y="236.51" textLength="10.6" lengthAdjust="spacingAndGlyphs">37U</text>
<text x="691.3" y="226.04" textLength="10.6" lengthAdjust="spacingAndGlyphs">38U</text>
<text x="691.3" y="215.57" textLength="10.6" lengthAdjust="spacingAndGlyphs">39U</text>
<text x="691.3" y="205.1" textLength="10.6" lengthAdjust="spacingAndGlyphs">40U</text>
<text x="691.3" y="194.63" textLength="10.6" lengthAdjust="spacingAndGlyphs">41U</text>
<text x="691.3" y="184.16" textLength="10.6" lengthAdjust="spacingAndGlyphs">42U</text>
</g>
<path d="M681 605.53L692.4 605.53" stroke="#5c5c5c" stroke-width="0.9" />
<path d="M681 595.06L692.4 595.06" stroke="#5c5c5c" stroke-width="0.9" />
<path d="M681 584.59L692.4 584.59" stroke="#5c5c5c" stroke-width="0.9" />
<path d="M681 574.12L692.4 574.12" stroke="#5c5c5c" stroke-width="0.9" />
<path d="M681 563.65L692.4 563.65" stroke="#5c5c5c" stroke-width="0.9" />
<path d="M681 553.18L692.4 553.18" stroke="#5c5c5c" stroke-width="0.9" />
<path d="M681 542.71L692.4 542.71" stroke="#5c5c5c" stroke-width="0.9" />
<path d="M681 532.24L692.4 532.24" stroke="#5c5c5c" stroke-width="0.9" />
<path d="M681 521.77L692.4 521.77" stroke="#5c5c5c" stroke-width="0.9" />
<path d="M681 511.3L692.4 511.3" stroke="#5c5c5c" stroke-width="0.9" />
<path d="M681 500.83L692.4 500.83" stroke="#5c5c5c" stroke-width="0.9" />
<path d="M681 490.36L692.4 490.36" stroke="#5c5c5c" stroke-width="0.9" />
<path d="M681 479.89L692.4 479.89" stroke="#5c5c5c" stroke-width="0.9" />
<path d="M681 469.42L692.4 469.42" stroke="#5c5c5c" stroke-width="0.9" />
<path d="M681 458.95L692.4 458.95" stroke="#5c5c5c" stroke-width="0.9" />
<path d="M681 448.48L692.4 448.48" stroke="#5c5c5c" stroke-width="0.9" />
<path d="M681 438.01L692.4 438.01" stroke="#5c5c5c" stroke-width="0.9" />
<path d="M681 427.54L692.4 427.54" stroke="#5c5c5c" stroke-width="0.9" />
<path d="M681 417.07L692.4 417.07" stroke="#5c5c5c" stroke-width="0.9" />
<path d="M681 406.6L692.4 406.6" stroke="#5c5c5c" stroke-width="0.9" />
<path d="M681 396.13L692.4 396.13" stroke="#5c5c5c" stroke-width="0.9" />
<path d="M681 385.66L692.4 385.66" stroke="#5c5c5c" stroke-width="0.9" />
<path d="M681 375.19L692.4 375.19" stroke="#5c5c5c" stroke-width="0.9" />
<path d="M681 364.72L692.4 364.72" stroke="#5c5c5c" stroke-width="0.9" />
<path d="M681 354.25L692.4 354.25" stroke="#5c5c5c" stroke-width="0.9" />
<path d="M681 343.78L692.4 343.78" stroke="#5c5c5c" stroke-width="0.9" />
<path d="M681 333.31L692.4 333.31" stroke="#5c5c5c" stroke-width="0.9" />
<path d="M681 322.84L692.4 322.84" stroke="#5c5c5c" stroke-width="0.9" />
<path d="M681 312.37L692.4 312.37" stroke="#5c5c5c" stroke-width="0.9" />
<path d="M681 301.9L692.4 301.9" stroke="#5c5c5c" stroke-width="0.9" />
<path d="M681 291.43L692.4 291.43" stroke="#5c5c5c" stroke-width="0.9" />
<path d="M681 280.96L692.4 280.96" stroke="#5c5c5c" stroke-width="0.9" />
<path d="M681 270.49L692.4 270.49" stroke="#5c5c5c" stroke-width="0.9" />
<path d="M681 260.02L692.4 260.02" stroke="#5c5c5c" stroke-width="0.9" />
<path d="M681 249.55L692.4 249.55" stroke="#5c5c5c" stroke-width="0.9" />
<path d="M681 239.08L692.4 239.08" stroke="#5c5c5c" stroke-width="0.9" />
<path d="M681 228.61L692.4 228.61" stroke="#5c5c5c" stroke-width="0.9" />
<path d="M681 218.14L692.4 218.14" stroke="#5c5c5c" stroke-width="0.9" />
<path d="M681 207.67L692.4 207.67" stroke="#5c5c5c" stroke-width="0.9" />
<path d="M681 197.2L692.4 197.2" stroke="#5c5c5c" stroke-width="0.9" />
<path d="M681 186.73L692.4 186.73" stroke="#5c5c5c" stroke-width="0.9" />
<path d="M681 176.26L692.4 176.26" stroke="#5c5c5c" stroke-width="0.9" />
<path d="M681 176.26L692.4 176.26" stroke="#5c5c5c" stroke-width="0.9" />
<path d="M681 616L692.4 616" stroke="#5c5c5c" stroke-width="0.9" />
<path d="M692.4 166L692.4 626" stroke="#5e5e5e" stroke-width="0.7" />
<path d="M813.4 166L813.4 626" stroke="#5e5e5e" stroke-width="0.7" />
<rect x="692.7" y="176.6" width="3.1" height="439.4" fill="#f2f2f2" />
<rect x="695.8" y="176.6" width="3.6" height="439.4" fill="#5c5c5c" />
<rect x="698.5" y="176.6" width="0.9" height="439.4" fill="#101010" />
<rect x="696.3" y="609.03" width="2" height="1" fill="#f8f8f8" />
<rect x="696.3" y="612.13" width="2" height="1" fill="#f8f8f8" />
<rect x="696.3" y="615.43" width="2" height="1" fill="#a8a8a8" />
<rect x="696.3" y="598.56" width="2" height="1" fill="#f8f8f8" />
<rect x="696.3" y="601.66" width="2" height="1" fill="#f8f8f8" />
<rect x="696.3" y="604.96" width="2" height="1" fill="#a8a8a8" />
<rect x="696.3" y="588.09" width="2" height="1" fill="#f8f8f8" />
<rect x="696.3" y="591.19" width="2" height="1" fill="#f8f8f8" />
<rect x="696.3" y="594.49" width="2" height="1" fill="#a8a8a8" />
<rect x="696.3" y="577.62" width="2" height="1" fill="#f8f8f8" />
<rect x="696.3" y="580.72" width="2" height="1" fill="#f8f8f8" />
<rect x="696.3" y="584.02" width="2" height="1" fill="#a8a8a8" />
<rect x="696.3" y="567.15" width="2" height="1" fill="#f8f8f8" />
<rect x="696.3" y="570.25" width="2" height="1" fill="#f8f8f8" />
<rect x="696.3" y="573.55" width="2" height="1" fill="#a8a8a8" />
<rect x="696.3" y="556.68" width="2" height="1" fill="#f8f8f8" />
<rect x="696.3" y="559.78" width="2" height="1" fill="#f8f8f8" />
<rect x="696.3" y="563.08" width="2" height="1" fill="#a8a8a8" />
<rect x="696.3" y="546.21" width="2" height="1" fill="#f8f8f8" />
<rect x="696.3" y="549.31" width="2" height="1" fill="#f8f8f8" />
<rect x="696.3" y="552.61" width="2" height="1" fill="#a8a8a8" />
<rect x="696.3" y="535.74" width="2" height="1" fill="#f8f8f8" />
<rect x="696.3" y="538.84" width="2" height="1" fill="#f8f8f8" />
<rect x="696.3" y="542.14" width="2" height="1" fill="#a8a8a8" />
<rect x="696.3" y="525.27" width="2" height="1" fill="#f8f8f8" />
<rect x="696.3" y="528.37" width="2" height="1" fill="#f8f8f8" />
<rect x="696.3" y="531.67" width="2" height="1" fill="#a8a8a8" />
<rect x="696.3" y="514.8" width="2" height="1" fill="#f8f8f8" />
<rect x="696.3" y="517.9" width="2" height="1" fill="#f8f8f8" />
<rect x="696.3" y="521.2" width="2" height="1" fill="#a8a8a8" />
<rect x="696.3" y="504.33" width="2" height="1" fill="#f8f8f8" />
<rect x="696.3" y="507.43" width="2" height="1" fill="#f8f8f8" />
<rect x="696.3" y="510.73" width="2" height="1" fill="#a8a8a8" />
<rect x="696.3" y="493.86" width="2" height="1" fill="#f8f8f8" />
<rect x="696.3" y="496.96" width="2" height="1" fill="#f8f8f8" />
<rect x="696.3" y="500.26" width="2" height="1" fill="#a8a8a8" />
<rect x="696.3" y="483.39" width="2" height="1" fill="#f8f8f8" />
<rect x="696.3" y="486.49" width="2" height="1" fill="#f8f8f8" />
<rect x="696.3" y="489.79" width="2" height="1" fill="#a8a8a8" />
<rect x="696.3" y="472.92" width="2" height="1" fill="#f8f8f8" />
<rect x="696.3" y="476.02" width="2" height="1" fill="#f8f8f8" />
<rect x="696.3" y="479.32" width="2" height="1" fill="#a8a8a8" />
<rect x="696.3" y="462.45" width="2" height="1" fill="#f8f8f8" />
<rect x="696.3" y="465.55" width="2" height="1" fill="#f8f8f8" />
<rect x="696.3" y="468.85" width="2" height="1" fill="#a8a8a8" />
<rect x="696.3" y="451.98" width="2" height="1" fill="#f8f8f8" />
<rect x="696.3" y="455.08" width="2" height="1" fill="#f8f8f8" />
<rect x="696.3" y="458.38" width="2" height="1" fill="#a8a8a8" />
<rect x="696.3" y="441.51" width="2" height="1" fill="#f8f8f8" />
<rect x="696.3" y="444.61" width="2" height="1" fill="#f8f8f8" />
<rect x="696.3" y="447.91" width="2" height="1" fill="#a8a8a8" />
<rect x="696.3" y="431.04" width="2" height="1" fill="#f8f8f8" />
<rect x="696.3" y="434.14" width="2" height="1" fill="#f8f8f8" />
<rect x="696.3" y="437.44" width="2" height="1" fill="#a8a8a8" />
<rect x="696.3" y="420.57" width="2" height="1" fill="#f8f8f8" />
<rect x="696.3" y="423.67" width="2" height="1" fill="#f8f8f8" />
<rect x="696.3" y="426.97" width="2" height="1" fill="#a8a8a8" />
<rect x="696.3" y="410.1" width="2" height="1" fill="#f8f8f8" />
<rect x="696.3" y="413.2" width="2" height="1" fill="#f8f8f8" />
<rect x="696.3" y="416.5" width="2" height="1" fill="#a8a8a8" />
<rect x="696.3" y="399.63" width="2" height="1" fill="#f8f8f8" />
<rect x="696.3" y="402.73" width="2" height="1" fill="#f8f8f8" />
<rect x="696.3" y="406.03" width="2" height="1" fill="#a8a8a8" />
<rect x="696.3" y="389.16" width="2" height="1" fill="#f8f8f8" />
<rect x="696.3" y="392.26" width="2" height="1" fill="#f8f8f8" />
<rect x="696.3" y="395.56" width="2" height="1" fill="#a8a8a8" />
<rect x="696.3" y="378.69" width="2" height="1" fill="#f8f8f8" />
<rect x="696.3" y="381.79" width="2" height="1" fill="#f8f8f8" />
<rect x="696.3" y="385.09" width="2" height="1" fill="#a8a8a8" />
<rect x="696.3" y="368.22" width="2" height="1" fill="#f8f8f8" />
<rect x="696.3" y="371.32" width="2" height="1" fill="#f8f8f8" />
<rect x="696.3" y="374.62" width="2" height="1" fill="#a8a8a8" />
<rect x="696.3" y="357.75" width="2" height="1" fill="#f8f8f8" />
<rect x="696.3" y="360.85" width="2" height="1" fill="#f8f8f8" />
<rect x="696.3" y="364.15" width="2" height="1" fill="#a8a8a8" />
<rect x="696.3" y="347.28" width="2" height="1" fill="#f8f8f8" />
<rect x="696.3" y="350.38" width="2" height="1" fill="#f8f8f8" />
<rect x="696.3" y="353.68" width="2" height="1" fill="#a8a8a8" />
<rect x="696.3" y="336.81" width="2" height="1" fill="#f8f8f8" />
<rect x="696.3" y="339.91" width="2" height="1" fill="#f8f8f8" />
<rect x="696.3" y="343.21" width="2" height="1" fill="#a8a8a8" />
<rect x="696.3" y="326.34" width="2" height="1" fill="#f8f8f8" />
<rect x="696.3" y="329.44" width="2" height="1" fill="#f8f8f8" />
<rect x="696.3" y="332.74" width="2" height="1" fill="#a8a8a8" />
<rect x="696.3" y="315.87" width="2" height="1" fill="#f8f8f8" />
<rect x="696.3" y="318.97" width="2" height="1" fill="#f8f8f8" />
<rect x="696.3" y="322.27" width="2" height="1" fill="#a8a8a8" />
<rect x="696.3" y="305.4" width="2" height="1" fill="#f8f8f8" />
<rect x="696.3" y="308.5" width="2" height="1" fill="#f8f8f8" />
<rect x="696.3" y="311.8" width="2" height="1" fill="#a8a8a8" />
<rect x="696.3" y="294.93" width="2" height="1" fill="#f8f8f8" />
<rect x="696.3" y="298.03" width="2" height="1" fill="#f8f8f8" />
<rect x="696.3" y="301.33" width="2" height="1" fill="#a8a8a8" />
<rect x="696.3" y="284.46" width="2" height="1" fill="#f8f8f8" />
<rect x="696.3" y="287.56" width="2" height="1" fill="#f8f8f8" />
<rect x="696.3" y="290.86" width="2" height="1" fill="#a8a8a8" />
<rect x="696.3" y="273.99" width="2" height="1" fill="#f8f8f8" />
<rect x="696.3" y="277.09" width="2" height="1" fill="#f8f8f8" />
<rect x="696.3" y="280.39" width="2" height="1" fill="#a8a8a8" />
<rect x="696.3" y="263.52" width="2" height="1" fill="#f8f8f8" />
<rect x="696.3" y="266.62" width="2" height="1" fill="#f8f8f8" />
<rect x="696.3" y="269.92" width="2" height="1" fill="#a8a8a8" />
<rect x="696.3" y="253.05" width="2" height="1" fill="#f8f8f8" />
<rect x="696.3" y="256.15" width="2" height="1" fill="#f8f8f8" />
<rect x="696.3" y="259.45" width="2" height="1" fill="#a8a8a8" />
<rect x="696.3" y="242.58" width="2" height="1" fill="#f8f8f8" />
<rect x="696.3" y="245.68" width="2" height="1" fill="#f8f8f8" />
<rect x="696.3" y="248.98" width="2" height="1" fill="#a8a8a8" />
<rect x="696.3" y="232.11" width="2" height="1" fill="#f8f8f8" />
<rect x="696.3" y="235.21" width="2" height="1" fill="#f8f8f8" />
<rect x="696.3" y="238.51" width="2" height="1" fill="#a8a8a8" />
<rect x="696.3" y="221.64" width="2" height="1" fill="#f8f8f8" />
<rect x="696.3" y="224.74" width="2" height="1" fill="#f8f8f8" />
<rect x="696.3" y="228.04" width="2" height="1" fill="#a8a8a8" />
<rect x="696.3" y="211.17" width="2" height="1" fill="#f8f8f8" />
<rect x="696.3" y="214.27" width="2" height="1" fill="#f8f8f8" />
<rect x="696.3" y="217.57" width="2" height="1" fill="#a8a8a8" />
<rect x="696.3" y="200.7" width="2" height="1" fill="#f8f8f8" />
<rect x="696.3" y="203.8" width="2" height="1" fill="#f8f8f8" />
<rect x="696.3" y="207.1" width="2" height="1" fill="#a8a8a8" />
<rect x="696.3" y="190.23" width="2" height="1" fill="#f8f8f8" />
<rect x="696.3" y="193.33" width="2" height="1" fill="#f8f8f8" />
<rect x="696.3" y="196.63" width="2" height="1" fill="#a8a8a8" />
<rect x="696.3" y="179.76" width="2" height="1" fill="#f8f8f8" />
<rect x="696.3" y="182.86" width="2" height="1" fill="#f8f8f8" />
<rect x="696.3" y="186.16" width="2" height="1" fill="#a8a8a8" />
<rect x="809.8" y="176.6" width="3.3" height="439.4" fill="#f2f2f2" />
<rect x="806.4" y="176.6" width="3.4" height="439.4" fill="#5c5c5c" />
<rect x="806.4" y="176.6" width="0.9" height="439.4" fill="#101010" />
<rect x="807.8" y="609.03" width="2" height="1" fill="#f8f8f8" />
<rect x="807.8" y="612.13" width="2" height="1" fill="#f8f8f8" />
<rect x="807.8" y="615.43" width="2" height="1" fill="#a8a8a8" />
<rect x="807.8" y="598.56" width="2" height="1" fill="#f8f8f8" />
<rect x="807.8" y="601.66" width="2" height="1" fill="#f8f8f8" />
<rect x="807.8" y="604.96" width="2" height="1" fill="#a8a8a8" />
<rect x="807.8" y="588.09" width="2" height="1" fill="#f8f8f8" />
<rect x="807.8" y="591.19" width="2" height="1" fill="#f8f8f8" />
<rect x="807.8" y="594.49" width="2" height="1" fill="#a8a8a8" />
<rect x="807.8" y="577.62" width="2" height="1" fill="#f8f8f8" />
<rect x="807.8" y="580.72" width="2" height="1" fill="#f8f8f8" />
<rect x="807.8" y="584.02" width="2" height="1" fill="#a8a8a8" />
<rect x="807.8" y="567.15" width="2" height="1" fill="#f8f8f8" />
<rect x="807.8" y="570.25" width="2" height="1" fill="#f8f8f8" />
<rect x="807.8" y="573.55" width="2" height="1" fill="#a8a8a8" />
<rect x="807.8" y="556.68" width="2" height="1" fill="#f8f8f8" />
<rect x="807.8" y="559.78" width="2" height="1" fill="#f8f8f8" />
<rect x="807.8" y="563.08" width="2" height="1" fill="#a8a8a8" />
<rect x="807.8" y="546.21" width="2" height="1" fill="#f8f8f8" />
<rect x="807.8" y="549.31" width="2" height="1" fill="#f8f8f8" />
<rect x="807.8" y="552.61" width="2" height="1" fill="#a8a8a8" />
<rect x="807.8" y="535.74" width="2" height="1" fill="#f8f8f8" />
<rect x="807.8" y="538.84" width="2" height="1" fill="#f8f8f8" />
<rect x="807.8" y="542.14" width="2" height="1" fill="#a8a8a8" />
<rect x="807.8" y="525.27" width="2" height="1" fill="#f8f8f8" />
<rect x="807.8" y="528.37" width="2" height="1" fill="#f8f8f8" />
<rect x="807.8" y="531.67" width="2" height="1" fill="#a8a8a8" />
<rect x="807.8" y="514.8" width="2" height="1" fill="#f8f8f8" />
<rect x="807.8" y="517.9" width="2" height="1" fill="#f8f8f8" />
<rect x="807.8" y="521.2" width="2" height="1" fill="#a8a8a8" />
<rect x="807.8" y="504.33" width="2" height="1" fill="#f8f8f8" />
<rect x="807.8" y="507.43" width="2" height="1" fill="#f8f8f8" />
<rect x="807.8" y="510.73" width="2" height="1" fill="#a8a8a8" />
<rect x="807.8" y="493.86" width="2" height="1" fill="#f8f8f8" />
<rect x="807.8" y="496.96" width="2" height="1" fill="#f8f8f8" />
<rect x="807.8" y="500.26" width="2" height="1" fill="#a8a8a8" />
<rect x="807.8" y="483.39" width="2" height="1" fill="#f8f8f8" />
<rect x="807.8" y="486.49" width="2" height="1" fill="#f8f8f8" />
<rect x="807.8" y="489.79" width="2" height="1" fill="#a8a8a8" />
<rect x="807.8" y="472.92" width="2" height="1" fill="#f8f8f8" />
<rect x="807.8" y="476.02" width="2" height="1" fill="#f8f8f8" />
<rect x="807.8" y="479.32" width="2" height="1" fill="#a8a8a8" />
<rect x="807.8" y="462.45" width="2" height="1" fill="#f8f8f8" />
<rect x="807.8" y="465.55" width="2" height="1" fill="#f8f8f8" />
<rect x="807.8" y="468.85" width="2" height="1" fill="#a8a8a8" />
<rect x="807.8" y="451.98" width="2" height="1" fill="#f8f8f8" />
<rect x="807.8" y="455.08" width="2" height="1" fill="#f8f8f8" />
<rect x="807.8" y="458.38" width="2" height="1" fill="#a8a8a8" />
<rect x="807.8" y="441.51" width="2" height="1" fill="#f8f8f8" />
<rect x="807.8" y="444.61" width="2" height="1" fill="#f8f8f8" />
<rect x="807.8" y="447.91" width="2" height="1" fill="#a8a8a8" />
<rect x="807.8" y="431.04" width="2" height="1" fill="#f8f8f8" />
<rect x="807.8" y="434.14" width="2" height="1" fill="#f8f8f8" />
<rect x="807.8" y="437.44" width="2" height="1" fill="#a8a8a8" />
<rect x="807.8" y="420.57" width="2" height="1" fill="#f8f8f8" />
<rect x="807.8" y="423.67" width="2" height="1" fill="#f8f8f8" />
<rect x="807.8" y="426.97" width="2" height="1" fill="#a8a8a8" />
<rect x="807.8" y="410.1" width="2" height="1" fill="#f8f8f8" />
<rect x="807.8" y="413.2" width="2" height="1" fill="#f8f8f8" />
<rect x="807.8" y="416.5" width="2" height="1" fill="#a8a8a8" />
<rect x="807.8" y="399.63" width="2" height="1" fill="#f8f8f8" />
<rect x="807.8" y="402.73" width="2" height="1" fill="#f8f8f8" />
<rect x="807.8" y="406.03" width="2" height="1" fill="#a8a8a8" />
<rect x="807.8" y="389.16" width="2" height="1" fill="#f8f8f8" />
<rect x="807.8" y="392.26" width="2" height="1" fill="#f8f8f8" />
<rect x="807.8" y="395.56" width="2" height="1" fill="#a8a8a8" />
<rect x="807.8" y="378.69" width="2" height="1" fill="#f8f8f8" />
<rect x="807.8" y="381.79" width="2" height="1" fill="#f8f8f8" />
<rect x="807.8" y="385.09" width="2" height="1" fill="#a8a8a8" />
<rect x="807.8" y="368.22" width="2" height="1" fill="#f8f8f8" />
<rect x="807.8" y="371.32" width="2" height="1" fill="#f8f8f8" />
<rect x="807.8" y="374.62" width="2" height="1" fill="#a8a8a8" />
<rect x="807.8" y="357.75" width="2" height="1" fill="#f8f8f8" />
<rect x="807.8" y="360.85" width="2" height="1" fill="#f8f8f8" />
<rect x="807.8" y="364.15" width="2" height="1" fill="#a8a8a8" />
<rect x="807.8" y="347.28" width="2" height="1" fill="#f8f8f8" />
<rect x="807.8" y="350.38" width="2" height="1" fill="#f8f8f8" />
<rect x="807.8" y="353.68" width="2" height="1" fill="#a8a8a8" />
<rect x="807.8" y="336.81" width="2" height="1" fill="#f8f8f8" />
<rect x="807.8" y="339.91" width="2" height="1" fill="#f8f8f8" />
<rect x="807.8" y="343.21" width="2" height="1" fill="#a8a8a8" />
<rect x="807.8" y="326.34" width="2" height="1" fill="#f8f8f8" />
<rect x="807.8" y="329.44" width="2" height="1" fill="#f8f8f8" />
<rect x="807.8" y="332.74" width="2" height="1" fill="#a8a8a8" />
<rect x="807.8" y="315.87" width="2" height="1" fill="#f8f8f8" />
<rect x="807.8" y="318.97" width="2" height="1" fill="#f8f8f8" />
<rect x="807.8" y="322.27" width="2" height="1" fill="#a8a8a8" />
<rect x="807.8" y="305.4" width="2" height="1" fill="#f8f8f8" />
<rect x="807.8" y="308.5" width="2" height="1" fill="#f8f8f8" />
<rect x="807.8" y="311.8" width="2" height="1" fill="#a8a8a8" />
<rect x="807.8" y="294.93" width="2" height="1" fill="#f8f8f8" />
<rect x="807.8" y="298.03" width="2" height="1" fill="#f8f8f8" />
<rect x="807.8" y="301.33" width="2" height="1" fill="#a8a8a8" />
<rect x="807.8" y="284.46" width="2" height="1" fill="#f8f8f8" />
<rect x="807.8" y="287.56" width="2" height="1" fill="#f8f8f8" />
<rect x="807.8" y="290.86" width="2" height="1" fill="#a8a8a8" />
<rect x="807.8" y="273.99" width="2" height="1" fill="#f8f8f8" />
<rect x="807.8" y="277.09" width="2" height="1" fill="#f8f8f8" />
<rect x="807.8" y="280.39" width="2" height="1" fill="#a8a8a8" />
<rect x="807.8" y="263.52" width="2" height="1" fill="#f8f8f8" />
<rect x="807.8" y="266.62" width="2" height="1" fill="#f8f8f8" />
<rect x="807.8" y="269.92" width="2" height="1" fill="#a8a8a8" />
<rect x="807.8" y="253.05" width="2" height="1" fill="#f8f8f8" />
<rect x="807.8" y="256.15" width="2" height="1" fill="#f8f8f8" />
<rect x="807.8" y="259.45" width="2" height="1" fill="#a8a8a8" />
<rect x="807.8" y="242.58" width="2" height="1" fill="#f8f8f8" />
<rect x="807.8" y="245.68" width="2" height="1" fill="#f8f8f8" />
<rect x="807.8" y="248.98" width="2" height="1" fill="#a8a8a8" />
<rect x="807.8" y="232.11" width="2" height="1" fill="#f8f8f8" />
<rect x="807.8" y="235.21" width="2" height="1" fill="#f8f8f8" />
<rect x="807.8" y="238.51" width="2" height="1" fill="#a8a8a8" />
<rect x="807.8" y="221.64" width="2" height="1" fill="#f8f8f8" />
<rect x="807.8" y="224.74" width="2" height="1" fill="#f8f8f8" />
<rect x="807.8" y="228.04" width="2" height="1" fill="#a8a8a8" />
<rect x="807.8" y="211.17" width="2" height="1" fill="#f8f8f8" />
<rect x="807.8" y="214.27" width="2" height="1" fill="#f8f8f8" />
<rect x="807.8" y="217.57" width="2" height="1" fill="#a8a8a8" />
<rect x="807.8" y="200.7" width="2" height="1" fill="#f8f8f8" />
<rect x="807.8" y="203.8" width="2" height="1" fill="#f8f8f8" />
<rect x="807.8" y="207.1" width="2" height="1" fill="#a8a8a8" />
<rect x="807.8" y="190.23" width="2" height="1" fill="#f8f8f8" />
<rect x="807.8" y="193.33" width="2" height="1" fill="#f8f8f8" />
<rect x="807.8" y="196.63" width="2" height="1" fill="#a8a8a8" />
<rect x="807.8" y="179.76" width="2" height="1" fill="#f8f8f8" />
<rect x="807.8" y="182.86" width="2" height="1" fill="#f8f8f8" />
<rect x="807.8" y="186.16" width="2" height="1" fill="#a8a8a8" />
<rect x="692.4" y="616" width="121" height="10.2" fill="url(#gBotBar)" stroke="#6a6a6a" stroke-width="0.5"/>
<rect x="681" y="166" width="144" height="460" fill="none" stroke="#565656" stroke-width="0.9"/>
<rect x="681" y="626" width="144" height="7" fill="url(#gBase)" />
<rect x="681" y="633" width="11.4" height="2" fill="#2e2e2e" />
<rect x="812.4" y="633" width="12.6" height="2" fill="#2e2e2e" />
<rect x="696.8" y="176.26" width="112" height="10.47" fill="url(#gHub)" stroke="#8a8a8a" stroke-width="0.5"/>
<rect x="700.4" y="177.16" width="83" height="8.67" fill="#d4d4d4" />
<rect x="701.2" y="178.76" width="3.9" height="6.27" fill="#4e4e4e" rx="0.6"/>
<rect x="702.1" y="177.86" width="2.1" height="1.4" fill="#5a5a5a" />
<rect x="701.4" y="181.5" width="3.5" height="0.5" fill="#6c6c6c" />
<rect x="706.2" y="178.76" width="3.9" height="6.27" fill="#4e4e4e" rx="0.6"/>
<rect x="707.1" y="177.86" width="2.1" height="1.4" fill="#5a5a5a" />
<rect x="706.4" y="181.5" width="3.5" height="0.5" fill="#6c6c6c" />
<rect x="711.2" y="178.76" width="3.9" height="6.27" fill="#4e4e4e" rx="0.6"/>
<rect x="712.1" y="177.86" width="2.1" height="1.4" fill="#5a5a5a" />
<rect x="711.4" y="181.5" width="3.5" height="0.5" fill="#6c6c6c" />
<rect x="716.2" y="178.76" width="3.9" height="6.27" fill="#4e4e4e" rx="0.6"/>
<rect x="717.1" y="177.86" width="2.1" height="1.4" fill="#5a5a5a" />
<rect x="716.4" y="181.5" width="3.5" height="0.5" fill="#6c6c6c" />
<rect x="721.2" y="178.76" width="3.9" height="6.27" fill="#4e4e4e" rx="0.6"/>
<rect x="722.1" y="177.86" width="2.1" height="1.4" fill="#5a5a5a" />
<rect x="721.4" y="181.5" width="3.5" height="0.5" fill="#6c6c6c" />
<rect x="726.2" y="178.76" width="3.9" height="6.27" fill="#4e4e4e" rx="0.6"/>
<rect x="727.1" y="177.86" width="2.1" height="1.4" fill="#5a5a5a" />
<rect x="726.4" y="181.5" width="3.5" height="0.5" fill="#6c6c6c" />
<rect x="731.2" y="178.76" width="3.9" height="6.27" fill="#4e4e4e" rx="0.6"/>
<rect x="732.1" y="177.86" width="2.1" height="1.4" fill="#5a5a5a" />
<rect x="731.4" y="181.5" width="3.5" height="0.5" fill="#6c6c6c" />
<rect x="736.8" y="178.16" width="1.6" height="6.67" fill="#4c4c4c" />
<rect x="737.4" y="178.76" width="3.9" height="6.27" fill="#4e4e4e" rx="0.6"/>
<rect x="738.3" y="177.86" width="2.1" height="1.4" fill="#5a5a5a" />
<rect x="737.6" y="181.5" width="3.5" height="0.5" fill="#6c6c6c" />
<rect x="742.4" y="178.76" width="3.9" height="6.27" fill="#4e4e4e" rx="0.6"/>
<rect x="743.3" y="177.86" width="2.1" height="1.4" fill="#5a5a5a" />
<rect x="742.6" y="181.5" width="3.5" height="0.5" fill="#6c6c6c" />
<rect x="747.4" y="178.76" width="3.9" height="6.27" fill="#4e4e4e" rx="0.6"/>
<rect x="748.3" y="177.86" width="2.1" height="1.4" fill="#5a5a5a" />
<rect x="747.6" y="181.5" width="3.5" height="0.5" fill="#6c6c6c" />
<rect x="752.4" y="178.76" width="3.9" height="6.27" fill="#4e4e4e" rx="0.6"/>
<rect x="753.3" y="177.86" width="2.1" height="1.4" fill="#5a5a5a" />
<rect x="752.6" y="181.5" width="3.5" height="0.5" fill="#6c6c6c" />
<rect x="757.4" y="178.76" width="3.9" height="6.27" fill="#4e4e4e" rx="0.6"/>
<rect x="758.3" y="177.86" width="2.1" height="1.4" fill="#5a5a5a" />
<rect x="757.6" y="181.5" width="3.5" height="0.5" fill="#6c6c6c" />
<rect x="762.4" y="178.76" width="3.9" height="6.27" fill="#4e4e4e" rx="0.6"/>
<rect x="763.3" y="177.86" width="2.1" height="1.4" fill="#5a5a5a" />
<rect x="762.6" y="181.5" width="3.5" height="0.5" fill="#6c6c6c" />
<rect x="767.4" y="178.76" width="3.9" height="6.27" fill="#4e4e4e" rx="0.6"/>
<rect x="768.3" y="177.86" width="2.1" height="1.4" fill="#5a5a5a" />
<rect x="767.6" y="181.5" width="3.5" height="0.5" fill="#6c6c6c" />
<rect x="773.6" y="178.76" width="3.9" height="6.27" fill="#4e4e4e" rx="0.6"/>
<rect x="774.5" y="177.86" width="2.1" height="1.4" fill="#5a5a5a" />
<rect x="773.8" y="181.5" width="3.5" height="0.5" fill="#6c6c6c" />
<rect x="778.6" y="178.76" width="3.9" height="6.27" fill="#4e4e4e" rx="0.6"/>
<rect x="779.5" y="177.86" width="2.1" height="1.4" fill="#5a5a5a" />
<rect x="778.8" y="181.5" width="3.5" height="0.5" fill="#6c6c6c" />
<rect x="783.7" y="176.66" width="3" height="9.67" fill="#f4f4f4" />
<rect x="787.8" y="177.06" width="16.4" height="8.87" fill="#c4c4c4" />
<rect x="788.3" y="177.46" width="2" height="8.07" fill="#e2e2e2" />
<rect x="792.15" y="177.46" width="2" height="8.07" fill="#e2e2e2" />
<rect x="796" y="177.46" width="2" height="8.07" fill="#e2e2e2" />
<rect x="799.85" y="177.46" width="2" height="8.07" fill="#e2e2e2" />
<rect x="804.6" y="176.66" width="3.8" height="9.67" fill="#e2e2e2" />
<rect x="696.8" y="186.73" width="112" height="10.47" fill="#5d5d5d" stroke="#4a4a4a" stroke-width="0.5"/>
<rect x="700.4" y="188.13" width="5.4" height="7.07" fill="#6e6e6e" stroke="#8a8a8a" stroke-width="0.5"/>
<rect x="701.8" y="189.33" width="2" height="2.6" fill="#3a3a3a" />
<rect x="707.2" y="188.33" width="1.2" height="4.6" fill="#9a9a9a" />
<rect x="713.8" y="192.53" width="19" height="4" fill="#2c2c2c" />
<circle cx="716.2" cy="194.43" r="1.7" fill="#46a152" stroke="#ddd" stroke-width="0.6"/>
<circle cx="722.2" cy="194.43" r="1.7" fill="#8d5aa8" stroke="#ddd" stroke-width="0.6"/>
<rect x="729.2" y="193.33" width="5.6" height="1.8" fill="#4ea3e6" rx="0.8"/>
<rect x="728.2" y="187.93" width="14.600" height="3.200" rx="1.600" fill="#e8e8e8" stroke="#8a8a8a" stroke-width="0.4"/>
<rect x="730" y="189.03" width="1" height="1" fill="#c39a2e" />
<rect x="731.65" y="189.03" width="1" height="1" fill="#c39a2e" />
<rect x="733.3" y="189.03" width="1" height="1" fill="#c39a2e" />
<rect x="734.95" y="189.03" width="1" height="1" fill="#c39a2e" />
<rect x="736.6" y="189.03" width="1" height="1" fill="#c39a2e" />
<rect x="738.25" y="189.03" width="1" height="1" fill="#c39a2e" />
<rect x="739.9" y="189.03" width="1" height="1" fill="#c39a2e" />
<rect x="742.4" y="192.13" width="31.6" height="4.2" fill="#858585" stroke="#a0a0a0" stroke-width="0.4"/>
<rect x="743.4" y="193.73" width="2.4" height="2.2" fill="#4c4c4c" />
<rect x="744.1" y="192.93" width="1" height="1" fill="#4c4c4c" />
<rect x="746.8" y="193.73" width="2.4" height="2.2" fill="#4c4c4c" />
<rect x="747.5" y="192.93" width="1" height="1" fill="#4c4c4c" />
<rect x="750.2" y="193.73" width="2.4" height="2.2" fill="#4c4c4c" />
<rect x="750.9" y="192.93" width="1" height="1" fill="#4c4c4c" />
<rect x="753.6" y="193.73" width="2.4" height="2.2" fill="#4c4c4c" />
<rect x="754.3" y="192.93" width="1" height="1" fill="#4c4c4c" />
<rect x="757" y="193.73" width="2.4" height="2.2" fill="#4c4c4c" />
<rect x="757.7" y="192.93" width="1" height="1" fill="#4c4c4c" />
<rect x="760.4" y="193.73" width="2.4" height="2.2" fill="#4c4c4c" />
<rect x="761.1" y="192.93" width="1" height="1" fill="#4c4c4c" />
<rect x="763.8" y="193.73" width="2.4" height="2.2" fill="#4c4c4c" />
<rect x="764.5" y="192.93" width="1" height="1" fill="#4c4c4c" />
<rect x="767.2" y="193.73" width="2.4" height="2.2" fill="#4c4c4c" />
<rect x="767.9" y="192.93" width="1" height="1" fill="#4c4c4c" />
<rect x="770.6" y="193.73" width="2.4" height="2.2" fill="#4c4c4c" />
<rect x="771.3" y="192.93" width="1" height="1" fill="#4c4c4c" />
<rect x="775.6" y="192.13" width="31.6" height="4.2" fill="#858585" stroke="#a0a0a0" stroke-width="0.4"/>
<rect x="776.6" y="193.73" width="2.4" height="2.2" fill="#4c4c4c" />
<rect x="777.3" y="192.93" width="1" height="1" fill="#4c4c4c" />
<rect x="780" y="193.73" width="2.4" height="2.2" fill="#4c4c4c" />
<rect x="780.7" y="192.93" width="1" height="1" fill="#4c4c4c" />
<rect x="783.4" y="193.73" width="2.4" height="2.2" fill="#4c4c4c" />
<rect x="784.1" y="192.93" width="1" height="1" fill="#4c4c4c" />
<rect x="786.8" y="193.73" width="2.4" height="2.2" fill="#4c4c4c" />
<rect x="787.5" y="192.93" width="1" height="1" fill="#4c4c4c" />
<rect x="790.2" y="193.73" width="2.4" height="2.2" fill="#4c4c4c" />
<rect x="790.9" y="192.93" width="1" height="1" fill="#4c4c4c" />
<rect x="793.6" y="193.73" width="2.4" height="2.2" fill="#4c4c4c" />
<rect x="794.3" y="192.93" width="1" height="1" fill="#4c4c4c" />
<rect x="797" y="193.73" width="2.4" height="2.2" fill="#4c4c4c" />
<rect x="797.7" y="192.93" width="1" height="1" fill="#4c4c4c" />
<rect x="800.4" y="193.73" width="2.4" height="2.2" fill="#4c4c4c" />
<rect x="801.1" y="192.93" width="1" height="1" fill="#4c4c4c" />
<rect x="803.8" y="193.73" width="2.4" height="2.2" fill="#4c4c4c" />
<rect x="804.5" y="192.93" width="1" height="1" fill="#4c4c4c" />
<rect x="693.8" y="197.8" width="122.4" height="9.47" fill="#5a5a5a" stroke="#444" stroke-width="0.5"/>
<rect x="695.2" y="198.4" width="34.6" height="8.07" fill="#9a9a9a" rx="1"/>
<rect x="695.8" y="199.2" width="33.4" height="2.8" fill="#4f4f4f" />
<rect x="695.8" y="203" width="33.4" height="2.8" fill="#4f4f4f" />
<rect x="696.4" y="198.8" width="1.2" height="0.8" fill="#c0c0c0" />
<rect x="696.4" y="205.4" width="1.2" height="0.8" fill="#c0c0c0" />
<rect x="699.18" y="198.8" width="1.2" height="0.8" fill="#c0c0c0" />
<rect x="699.18" y="205.4" width="1.2" height="0.8" fill="#c0c0c0" />
<rect x="701.96" y="198.8" width="1.2" height="0.8" fill="#c0c0c0" />
<rect x="701.96" y="205.4" width="1.2" height="0.8" fill="#c0c0c0" />
<rect x="704.74" y="198.8" width="1.2" height="0.8" fill="#c0c0c0" />
<rect x="704.74" y="205.4" width="1.2" height="0.8" fill="#c0c0c0" />
<rect x="707.52" y="198.8" width="1.2" height="0.8" fill="#c0c0c0" />
<rect x="707.52" y="205.4" width="1.2" height="0.8" fill="#c0c0c0" />
<rect x="710.3" y="198.8" width="1.2" height="0.8" fill="#c0c0c0" />
<rect x="710.3" y="205.4" width="1.2" height="0.8" fill="#c0c0c0" />
<rect x="713.08" y="198.8" width="1.2" height="0.8" fill="#c0c0c0" />
<rect x="713.08" y="205.4" width="1.2" height="0.8" fill="#c0c0c0" />
<rect x="715.86" y="198.8" width="1.2" height="0.8" fill="#c0c0c0" />
<rect x="715.86" y="205.4" width="1.2" height="0.8" fill="#c0c0c0" />
<rect x="718.64" y="198.8" width="1.2" height="0.8" fill="#c0c0c0" />
<rect x="718.64" y="205.4" width="1.2" height="0.8" fill="#c0c0c0" />
<rect x="721.42" y="198.8" width="1.2" height="0.8" fill="#c0c0c0" />
<rect x="721.42" y="205.4" width="1.2" height="0.8" fill="#c0c0c0" />
<rect x="724.2" y="198.8" width="1.2" height="0.8" fill="#c0c0c0" />
<rect x="724.2" y="205.4" width="1.2" height="0.8" fill="#c0c0c0" />
<rect x="726.98" y="198.8" width="1.2" height="0.8" fill="#c0c0c0" />
<rect x="726.98" y="205.4" width="1.2" height="0.8" fill="#c0c0c0" />
<rect x="731.4" y="198.4" width="34.6" height="8.07" fill="#9a9a9a" rx="1"/>
<rect x="732" y="199.2" width="33.4" height="2.8" fill="#4f4f4f" />
<rect x="732" y="203" width="33.4" height="2.8" fill="#4f4f4f" />
<rect x="732.6" y="198.8" width="1.2" height="0.8" fill="#c0c0c0" />
<rect x="732.6" y="205.4" width="1.2" height="0.8" fill="#c0c0c0" />
<rect x="735.38" y="198.8" width="1.2" height="0.8" fill="#c0c0c0" />
<rect x="735.38" y="205.4" width="1.2" height="0.8" fill="#c0c0c0" />
<rect x="738.16" y="198.8" width="1.2" height="0.8" fill="#c0c0c0" />
<rect x="738.16" y="205.4" width="1.2" height="0.8" fill="#c0c0c0" />
<rect x="740.94" y="198.8" width="1.2" height="0.8" fill="#c0c0c0" />
<rect x="740.94" y="205.4" width="1.2" height="0.8" fill="#c0c0c0" />
<rect x="743.72" y="198.8" width="1.2" height="0.8" fill="#c0c0c0" />
<rect x="743.72" y="205.4" width="1.2" height="0.8" fill="#c0c0c0" />
<rect x="746.5" y="198.8" width="1.2" height="0.8" fill="#c0c0c0" />
<rect x="746.5" y="205.4" width="1.2" height="0.8" fill="#c0c0c0" />
<rect x="749.28" y="198.8" width="1.2" height="0.8" fill="#c0c0c0" />
<rect x="749.28" y="205.4" width="1.2" height="0.8" fill="#c0c0c0" />
<rect x="752.06" y="198.8" width="1.2" height="0.8" fill="#c0c0c0" />
<rect x="752.06" y="205.4" width="1.2" height="0.8" fill="#c0c0c0" />
<rect x="754.84" y="198.8" width="1.2" height="0.8" fill="#c0c0c0" />
<rect x="754.84" y="205.4" width="1.2" height="0.8" fill="#c0c0c0" />
<rect x="757.62" y="198.8" width="1.2" height="0.8" fill="#c0c0c0" />
<rect x="757.62" y="205.4" width="1.2" height="0.8" fill="#c0c0c0" />
<rect x="760.4" y="198.8" width="1.2" height="0.8" fill="#c0c0c0" />
<rect x="760.4" y="205.4" width="1.2" height="0.8" fill="#c0c0c0" />
<rect x="763.18" y="198.8" width="1.2" height="0.8" fill="#c0c0c0" />
<rect x="763.18" y="205.4" width="1.2" height="0.8" fill="#c0c0c0" />
<rect x="767.6" y="198.4" width="34.6" height="8.07" fill="#9a9a9a" rx="1"/>
<rect x="768.2" y="199.2" width="33.4" height="2.8" fill="#4f4f4f" />
<rect x="768.2" y="203" width="33.4" height="2.8" fill="#4f4f4f" />
<rect x="768.8" y="198.8" width="1.2" height="0.8" fill="#c0c0c0" />
<rect x="768.8" y="205.4" width="1.2" height="0.8" fill="#c0c0c0" />
<rect x="771.58" y="198.8" width="1.2" height="0.8" fill="#c0c0c0" />
<rect x="771.58" y="205.4" width="1.2" height="0.8" fill="#c0c0c0" />
<rect x="774.36" y="198.8" width="1.2" height="0.8" fill="#c0c0c0" />
<rect x="774.36" y="205.4" width="1.2" height="0.8" fill="#c0c0c0" />
<rect x="777.14" y="198.8" width="1.2" height="0.8" fill="#c0c0c0" />
<rect x="777.14" y="205.4" width="1.2" height="0.8" fill="#c0c0c0" />
<rect x="779.92" y="198.8" width="1.2" height="0.8" fill="#c0c0c0" />
<rect x="779.92" y="205.4" width="1.2" height="0.8" fill="#c0c0c0" />
<rect x="782.7" y="198.8" width="1.2" height="0.8" fill="#c0c0c0" />
<rect x="782.7" y="205.4" width="1.2" height="0.8" fill="#c0c0c0" />
<rect x="785.48" y="198.8" width="1.2" height="0.8" fill="#c0c0c0" />
<rect x="785.48" y="205.4" width="1.2" height="0.8" fill="#c0c0c0" />
<rect x="788.26" y="198.8" width="1.2" height="0.8" fill="#c0c0c0" />
<rect x="788.26" y="205.4" width="1.2" height="0.8" fill="#c0c0c0" />
<rect x="791.04" y="198.8" width="1.2" height="0.8" fill="#c0c0c0" />
<rect x="791.04" y="205.4" width="1.2" height="0.8" fill="#c0c0c0" />
<rect x="793.82" y="198.8" width="1.2" height="0.8" fill="#c0c0c0" />
<rect x="793.82" y="205.4" width="1.2" height="0.8" fill="#c0c0c0" />
<rect x="796.6" y="198.8" width="1.2" height="0.8" fill="#c0c0c0" />
<rect x="796.6" y="205.4" width="1.2" height="0.8" fill="#c0c0c0" />
<rect x="799.38" y="198.8" width="1.2" height="0.8" fill="#c0c0c0" />
<rect x="799.38" y="205.4" width="1.2" height="0.8" fill="#c0c0c0" />
<rect x="804.4" y="198.4" width="4.8" height="8.07" fill="#2a2a2a" rx="0.8"/>
<rect x="805.4" y="199.2" width="2.8" height="2.2" fill="#0c0c0c" />
<rect x="805.4" y="203.4" width="2.8" height="2.2" fill="#0c0c0c" />
<rect x="812" y="198.4" width="4.8" height="8.07" fill="#2a2a2a" rx="0.8"/>
<rect x="813" y="199.2" width="2.8" height="2.2" fill="#0c0c0c" />
<rect x="813" y="203.4" width="2.8" height="2.2" fill="#0c0c0c" />
<rect x="698.7" y="207.67" width="108.1" height="29.63" fill="url(#gBlank)" />
<clipPath id="cs7"><rect x="696.8" y="237.3" width="112" height="21.2"/></clipPath>
<g clip-path="url(#cs7)">
<rect x="696.8" y="237.3" width="112" height="21.2" fill="url(#gSrv)" />
<path d="M725.92 258.5L752.8 237.3L764 237.3L737.12 258.5z" fill="#fff" opacity="0.07"/>
<path d="M705.2 241.3h3.4l-1.700 2.900z" fill="#101010"/>
<rect x="716" y="241.1" width="28.4" height="3.5" fill="#767676" stroke="#3c3c3c" stroke-width="0.5"/>
<rect x="761.6" y="241.1" width="36.2" height="3.5" fill="#767676" stroke="#3c3c3c" stroke-width="0.5"/>
<rect x="705" y="247.9" width="95.75" height="12.8" fill="#4a4a4a" />
<rect x="705.6" y="248.5" width="18.08" height="5.2" fill="url(#gBay)" rx="1"/><rect x="708" y="250.37" width="10.68" height="1.35" fill="#505050" rx="0.5"/><rect x="723.68" y="248.5" width="4.52" height="5.2" fill="#3a3a3a" /><rect x="723.98" y="248.5" width="1" height="5.2" fill="#1c1c1c" /><rect x="725.88" y="248.5" width="1" height="5.2" fill="#1c1c1c" /><rect x="724.98" y="248.9" width="0.9" height="4.4" fill="#9a9a9a" />
<rect x="729.45" y="248.5" width="18.08" height="5.2" fill="url(#gBay)" rx="1"/><rect x="731.85" y="250.37" width="10.68" height="1.35" fill="#505050" rx="0.5"/><rect x="747.53" y="248.5" width="4.52" height="5.2" fill="#3a3a3a" /><rect x="747.83" y="248.5" width="1" height="5.2" fill="#1c1c1c" /><rect x="749.73" y="248.5" width="1" height="5.2" fill="#1c1c1c" /><rect x="748.83" y="248.9" width="0.9" height="4.4" fill="#9a9a9a" />
<rect x="753.3" y="248.5" width="18.08" height="5.2" fill="url(#gBay)" rx="1"/><rect x="755.7" y="250.37" width="10.68" height="1.35" fill="#505050" rx="0.5"/><rect x="771.38" y="248.5" width="4.52" height="5.2" fill="#3a3a3a" /><rect x="771.68" y="248.5" width="1" height="5.2" fill="#1c1c1c" /><rect x="773.58" y="248.5" width="1" height="5.2" fill="#1c1c1c" /><rect x="772.68" y="248.9" width="0.9" height="4.4" fill="#9a9a9a" />
<rect x="777.15" y="248.5" width="18.08" height="5.2" fill="url(#gBay)" rx="1"/><rect x="779.55" y="250.37" width="10.68" height="1.35" fill="#505050" rx="0.5"/><rect x="795.23" y="248.5" width="4.52" height="5.2" fill="#3a3a3a" /><rect x="795.53" y="248.5" width="1" height="5.2" fill="#1c1c1c" /><rect x="797.43" y="248.5" width="1" height="5.2" fill="#1c1c1c" /><rect x="796.53" y="248.9" width="0.9" height="4.4" fill="#9a9a9a" />
<rect x="705.6" y="254.7" width="18.08" height="5.2" fill="url(#gBay)" rx="1"/><rect x="708" y="256.57" width="10.68" height="1.35" fill="#505050" rx="0.5"/><rect x="723.68" y="254.7" width="4.52" height="5.2" fill="#3a3a3a" /><rect x="723.98" y="254.7" width="1" height="5.2" fill="#1c1c1c" /><rect x="725.88" y="254.7" width="1" height="5.2" fill="#1c1c1c" /><rect x="724.98" y="255.1" width="0.9" height="4.4" fill="#9a9a9a" />
<rect x="729.45" y="254.7" width="18.08" height="5.2" fill="url(#gBay)" rx="1"/><rect x="731.85" y="256.57" width="10.68" height="1.35" fill="#505050" rx="0.5"/><rect x="747.53" y="254.7" width="4.52" height="5.2" fill="#3a3a3a" /><rect x="747.83" y="254.7" width="1" height="5.2" fill="#1c1c1c" /><rect x="749.73" y="254.7" width="1" height="5.2" fill="#1c1c1c" /><rect x="748.83" y="255.1" width="0.9" height="4.4" fill="#9a9a9a" />
<rect x="753.3" y="254.7" width="18.08" height="5.2" fill="url(#gBay)" rx="1"/><rect x="755.7" y="256.57" width="10.68" height="1.35" fill="#505050" rx="0.5"/><rect x="771.38" y="254.7" width="4.52" height="5.2" fill="#3a3a3a" /><rect x="771.68" y="254.7" width="1" height="5.2" fill="#1c1c1c" /><rect x="773.58" y="254.7" width="1" height="5.2" fill="#1c1c1c" /><rect x="772.68" y="255.1" width="0.9" height="4.4" fill="#9a9a9a" />
<rect x="777.15" y="254.7" width="18.08" height="5.2" fill="url(#gBay)" rx="1"/><rect x="779.55" y="256.57" width="10.68" height="1.35" fill="#505050" rx="0.5"/><rect x="795.23" y="254.7" width="4.52" height="5.2" fill="#3a3a3a" /><rect x="795.53" y="254.7" width="1" height="5.2" fill="#1c1c1c" /><rect x="797.43" y="254.7" width="1" height="5.2" fill="#1c1c1c" /><rect x="796.53" y="255.1" width="0.9" height="4.4" fill="#9a9a9a" />
</g>
<rect x="696.8" y="237.3" width="112" height="21.2" fill="none" stroke="#484848" stroke-width="0.5"/>
<path d="M697.8 241.2l1.800-1.400M698.2 239.7l1 1.600" stroke="#a8a8a8" stroke-width="0.6"/>
<path d="M697.8 255.6l1.800-1.400M698.2 254.1l1 1.600" stroke="#a8a8a8" stroke-width="0.6"/>
<path d="M806 241.2l1.800-1.400M806.4 239.7l1 1.600" stroke="#a8a8a8" stroke-width="0.6"/>
<path d="M806 255.6l1.800-1.400M806.4 254.1l1 1.600" stroke="#a8a8a8" stroke-width="0.6"/>
<clipPath id="cs8"><rect x="696.8" y="258.5" width="112" height="25.1"/></clipPath>
<g clip-path="url(#cs8)">
<rect x="696.8" y="258.5" width="112" height="25.1" fill="url(#gSrv)" />
<path d="M725.92 283.6L752.8 258.5L764 258.5L737.12 283.6z" fill="#fff" opacity="0.07"/>
<path d="M705.2 262.5h3.4l-1.700 2.900z" fill="#101010"/>
<rect x="716" y="262.3" width="28.4" height="3.3" fill="#767676" stroke="#3c3c3c" stroke-width="0.5"/>
<rect x="761.6" y="262.3" width="36.2" height="3.3" fill="#767676" stroke="#3c3c3c" stroke-width="0.5"/>
<rect x="705" y="269.4" width="95.75" height="12" fill="#4a4a4a" />
<rect x="705.6" y="270" width="18.08" height="5.1" fill="url(#gBay)" rx="1"/><rect x="708" y="271.84" width="10.68" height="1.33" fill="#505050" rx="0.5"/><rect x="723.68" y="270" width="4.52" height="5.1" fill="#3a3a3a" /><rect x="723.98" y="270" width="1" height="5.1" fill="#1c1c1c" /><rect x="725.88" y="270" width="1" height="5.1" fill="#1c1c1c" /><rect x="724.98" y="270.4" width="0.9" height="4.3" fill="#9a9a9a" />
<rect x="729.45" y="270" width="18.08" height="5.1" fill="url(#gBay)" rx="1"/><rect x="731.85" y="271.84" width="10.68" height="1.33" fill="#505050" rx="0.5"/><rect x="747.53" y="270" width="4.52" height="5.1" fill="#3a3a3a" /><rect x="747.83" y="270" width="1" height="5.1" fill="#1c1c1c" /><rect x="749.73" y="270" width="1" height="5.1" fill="#1c1c1c" /><rect x="748.83" y="270.4" width="0.9" height="4.3" fill="#9a9a9a" />
<rect x="753.3" y="270" width="18.08" height="5.1" fill="url(#gBay)" rx="1"/><rect x="755.7" y="271.84" width="10.68" height="1.33" fill="#505050" rx="0.5"/><rect x="771.38" y="270" width="4.52" height="5.1" fill="#3a3a3a" /><rect x="771.68" y="270" width="1" height="5.1" fill="#1c1c1c" /><rect x="773.58" y="270" width="1" height="5.1" fill="#1c1c1c" /><rect x="772.68" y="270.4" width="0.9" height="4.3" fill="#9a9a9a" />
<rect x="777.15" y="270" width="18.08" height="5.1" fill="url(#gBay)" rx="1"/><rect x="779.55" y="271.84" width="10.68" height="1.33" fill="#505050" rx="0.5"/><rect x="795.23" y="270" width="4.52" height="5.1" fill="#3a3a3a" /><rect x="795.53" y="270" width="1" height="5.1" fill="#1c1c1c" /><rect x="797.43" y="270" width="1" height="5.1" fill="#1c1c1c" /><rect x="796.53" y="270.4" width="0.9" height="4.3" fill="#9a9a9a" />
<rect x="705.6" y="275.8" width="18.08" height="5.1" fill="url(#gBay)" rx="1"/><rect x="708" y="277.64" width="10.68" height="1.33" fill="#505050" rx="0.5"/><rect x="723.68" y="275.8" width="4.52" height="5.1" fill="#3a3a3a" /><rect x="723.98" y="275.8" width="1" height="5.1" fill="#1c1c1c" /><rect x="725.88" y="275.8" width="1" height="5.1" fill="#1c1c1c" /><rect x="724.98" y="276.2" width="0.9" height="4.3" fill="#9a9a9a" />
<rect x="729.45" y="275.8" width="18.08" height="5.1" fill="url(#gBay)" rx="1"/><rect x="731.85" y="277.64" width="10.68" height="1.33" fill="#505050" rx="0.5"/><rect x="747.53" y="275.8" width="4.52" height="5.1" fill="#3a3a3a" /><rect x="747.83" y="275.8" width="1" height="5.1" fill="#1c1c1c" /><rect x="749.73" y="275.8" width="1" height="5.1" fill="#1c1c1c" /><rect x="748.83" y="276.2" width="0.9" height="4.3" fill="#9a9a9a" />
<rect x="753.3" y="275.8" width="18.08" height="5.1" fill="url(#gBay)" rx="1"/><rect x="755.7" y="277.64" width="10.68" height="1.33" fill="#505050" rx="0.5"/><rect x="771.38" y="275.8" width="4.52" height="5.1" fill="#3a3a3a" /><rect x="771.68" y="275.8" width="1" height="5.1" fill="#1c1c1c" /><rect x="773.58" y="275.8" width="1" height="5.1" fill="#1c1c1c" /><rect x="772.68" y="276.2" width="0.9" height="4.3" fill="#9a9a9a" />
<rect x="777.15" y="275.8" width="18.08" height="5.1" fill="url(#gBay)" rx="1"/><rect x="779.55" y="277.64" width="10.68" height="1.33" fill="#505050" rx="0.5"/><rect x="795.23" y="275.8" width="4.52" height="5.1" fill="#3a3a3a" /><rect x="795.53" y="275.8" width="1" height="5.1" fill="#1c1c1c" /><rect x="797.43" y="275.8" width="1" height="5.1" fill="#1c1c1c" /><rect x="796.53" y="276.2" width="0.9" height="4.3" fill="#9a9a9a" />
</g>
<rect x="696.8" y="258.5" width="112" height="25.1" fill="none" stroke="#484848" stroke-width="0.5"/>
<path d="M697.8 262.4l1.800-1.400M698.2 260.9l1 1.600" stroke="#a8a8a8" stroke-width="0.6"/>
<path d="M697.8 280.7l1.800-1.400M698.2 279.2l1 1.600" stroke="#a8a8a8" stroke-width="0.6"/>
<path d="M806 262.4l1.800-1.400M806.4 260.9l1 1.600" stroke="#a8a8a8" stroke-width="0.6"/>
<path d="M806 280.7l1.800-1.400M806.4 279.2l1 1.600" stroke="#a8a8a8" stroke-width="0.6"/>
<rect x="698.7" y="283.6" width="108.1" height="8.8" fill="#2c2c2c" />
<rect x="696.8" y="292.6" width="112" height="9.8" fill="url(#gPStrip)" stroke="#9a9a9a" stroke-width="0.5" rx="0.8"/>
<rect x="703.4" y="294.2" width="6.2" height="6.6" fill="#fafafa" stroke="#8d8d8d" stroke-width="0.5"/>
<path d="M705 295.6l1.5 2.600l1.5-2.600M706.5 298.2v1.800" stroke="#333" stroke-width="0.9" fill="none"/>
<rect x="712.25" y="294.2" width="6.2" height="6.6" fill="#fafafa" stroke="#8d8d8d" stroke-width="0.5"/>
<path d="M713.85 295.6l1.5 2.600l1.5-2.600M715.35 298.2v1.800" stroke="#333" stroke-width="0.9" fill="none"/>
<rect x="721.1" y="294.2" width="6.2" height="6.6" fill="#fafafa" stroke="#8d8d8d" stroke-width="0.5"/>
<path d="M722.7 295.6l1.5 2.600l1.5-2.600M724.2 298.2v1.800" stroke="#333" stroke-width="0.9" fill="none"/>
<rect x="729.95" y="294.2" width="6.2" height="6.6" fill="#fafafa" stroke="#8d8d8d" stroke-width="0.5"/>
<path d="M731.55 295.6l1.5 2.600l1.5-2.600M733.05 298.2v1.800" stroke="#333" stroke-width="0.9" fill="none"/>
<rect x="738.8" y="294.2" width="6.2" height="6.6" fill="#fafafa" stroke="#8d8d8d" stroke-width="0.5"/>
<path d="M740.4 295.6l1.5 2.600l1.5-2.600M741.9 298.2v1.800" stroke="#333" stroke-width="0.9" fill="none"/>
<rect x="747.65" y="294.2" width="6.2" height="6.6" fill="#fafafa" stroke="#8d8d8d" stroke-width="0.5"/>
<path d="M749.25 295.6l1.5 2.600l1.5-2.600M750.75 298.2v1.800" stroke="#333" stroke-width="0.9" fill="none"/>
<rect x="756.5" y="294.2" width="6.2" height="6.6" fill="#fafafa" stroke="#8d8d8d" stroke-width="0.5"/>
<path d="M758.1 295.6l1.5 2.600l1.5-2.600M759.6 298.2v1.800" stroke="#333" stroke-width="0.9" fill="none"/>
<rect x="765.35" y="294.2" width="6.2" height="6.6" fill="#fafafa" stroke="#8d8d8d" stroke-width="0.5"/>
<path d="M766.95 295.6l1.5 2.600l1.5-2.600M768.45 298.2v1.800" stroke="#333" stroke-width="0.9" fill="none"/>
<rect x="774.2" y="294.2" width="6.2" height="6.6" fill="#fafafa" stroke="#8d8d8d" stroke-width="0.5"/>
<path d="M775.8 295.6l1.5 2.600l1.5-2.600M777.3 298.2v1.800" stroke="#333" stroke-width="0.9" fill="none"/>
<rect x="783.05" y="294.2" width="6.2" height="6.6" fill="#fafafa" stroke="#8d8d8d" stroke-width="0.5"/>
<path d="M784.65 295.6l1.5 2.600l1.5-2.600M786.15 298.2v1.800" stroke="#333" stroke-width="0.9" fill="none"/>
<rect x="796.2" y="294.4" width="9.6" height="6.2" fill="#e9e9e9" stroke="#9a9a9a" stroke-width="0.5" rx="0.6"/>
<rect x="798" y="295.8" width="6.2" height="3.2" fill="#e0383c" />
<rect x="698.7" y="302.6" width="108.1" height="58.9" fill="url(#gBlank)" />
<clipPath id="cs9"><rect x="696.8" y="361.5" width="112" height="38"/></clipPath>
<g clip-path="url(#cs9)">
<rect x="696.8" y="361.5" width="112" height="38" fill="url(#gSrv)" />
<path d="M725.92 399.5L752.8 361.5L764 361.5L737.12 399.5z" fill="#fff" opacity="0.07"/>
<path d="M705.2 365.6h3.4l-1.700 2.900z" fill="#101010"/>
<rect x="716" y="365.4" width="28.4" height="3.2" fill="#767676" stroke="#3c3c3c" stroke-width="0.5"/>
<rect x="761.6" y="365.4" width="36.2" height="3.2" fill="#767676" stroke="#3c3c3c" stroke-width="0.5"/>
<rect x="705" y="372.4" width="95.75" height="26.2" fill="#4a4a4a" />
<rect x="705.6" y="373" width="18.08" height="5.2" fill="url(#gBay)" rx="1"/><rect x="708" y="374.87" width="10.68" height="1.35" fill="#505050" rx="0.5"/><rect x="723.68" y="373" width="4.52" height="5.2" fill="#3a3a3a" /><rect x="723.98" y="373" width="1" height="5.2" fill="#1c1c1c" /><rect x="725.88" y="373" width="1" height="5.2" fill="#1c1c1c" /><rect x="724.98" y="373.4" width="0.9" height="4.4" fill="#9a9a9a" />
<rect x="729.45" y="373" width="18.08" height="5.2" fill="url(#gBay)" rx="1"/><rect x="731.85" y="374.87" width="10.68" height="1.35" fill="#505050" rx="0.5"/><rect x="747.53" y="373" width="4.52" height="5.2" fill="#3a3a3a" /><rect x="747.83" y="373" width="1" height="5.2" fill="#1c1c1c" /><rect x="749.73" y="373" width="1" height="5.2" fill="#1c1c1c" /><rect x="748.83" y="373.4" width="0.9" height="4.4" fill="#9a9a9a" />
<rect x="753.3" y="373" width="18.08" height="5.2" fill="url(#gBay)" rx="1"/><rect x="755.7" y="374.87" width="10.68" height="1.35" fill="#505050" rx="0.5"/><rect x="771.38" y="373" width="4.52" height="5.2" fill="#3a3a3a" /><rect x="771.68" y="373" width="1" height="5.2" fill="#1c1c1c" /><rect x="773.58" y="373" width="1" height="5.2" fill="#1c1c1c" /><rect x="772.68" y="373.4" width="0.9" height="4.4" fill="#9a9a9a" />
<rect x="777.15" y="373" width="18.08" height="5.2" fill="url(#gBay)" rx="1"/><rect x="779.55" y="374.87" width="10.68" height="1.35" fill="#505050" rx="0.5"/><rect x="795.23" y="373" width="4.52" height="5.2" fill="#3a3a3a" /><rect x="795.53" y="373" width="1" height="5.2" fill="#1c1c1c" /><rect x="797.43" y="373" width="1" height="5.2" fill="#1c1c1c" /><rect x="796.53" y="373.4" width="0.9" height="4.4" fill="#9a9a9a" />
<rect x="705.6" y="379.45" width="18.08" height="5.2" fill="url(#gBay)" rx="1"/><rect x="708" y="381.32" width="10.68" height="1.35" fill="#505050" rx="0.5"/><rect x="723.68" y="379.45" width="4.52" height="5.2" fill="#3a3a3a" /><rect x="723.98" y="379.45" width="1" height="5.2" fill="#1c1c1c" /><rect x="725.88" y="379.45" width="1" height="5.2" fill="#1c1c1c" /><rect x="724.98" y="379.85" width="0.9" height="4.4" fill="#9a9a9a" />
<rect x="729.45" y="379.45" width="18.08" height="5.2" fill="url(#gBay)" rx="1"/><rect x="731.85" y="381.32" width="10.68" height="1.35" fill="#505050" rx="0.5"/><rect x="747.53" y="379.45" width="4.52" height="5.2" fill="#3a3a3a" /><rect x="747.83" y="379.45" width="1" height="5.2" fill="#1c1c1c" /><rect x="749.73" y="379.45" width="1" height="5.2" fill="#1c1c1c" /><rect x="748.83" y="379.85" width="0.9" height="4.4" fill="#9a9a9a" />
<rect x="753.3" y="379.45" width="18.08" height="5.2" fill="url(#gBay)" rx="1"/><rect x="755.7" y="381.32" width="10.68" height="1.35" fill="#505050" rx="0.5"/><rect x="771.38" y="379.45" width="4.52" height="5.2" fill="#3a3a3a" /><rect x="771.68" y="379.45" width="1" height="5.2" fill="#1c1c1c" /><rect x="773.58" y="379.45" width="1" height="5.2" fill="#1c1c1c" /><rect x="772.68" y="379.85" width="0.9" height="4.4" fill="#9a9a9a" />
<rect x="777.15" y="379.45" width="18.08" height="5.2" fill="url(#gBay)" rx="1"/><rect x="779.55" y="381.32" width="10.68" height="1.35" fill="#505050" rx="0.5"/><rect x="795.23" y="379.45" width="4.52" height="5.2" fill="#3a3a3a" /><rect x="795.53" y="379.45" width="1" height="5.2" fill="#1c1c1c" /><rect x="797.43" y="379.45" width="1" height="5.2" fill="#1c1c1c" /><rect x="796.53" y="379.85" width="0.9" height="4.4" fill="#9a9a9a" />
<rect x="705.6" y="385.9" width="18.08" height="5.2" fill="url(#gBay)" rx="1"/><rect x="708" y="387.77" width="10.68" height="1.35" fill="#505050" rx="0.5"/><rect x="723.68" y="385.9" width="4.52" height="5.2" fill="#3a3a3a" /><rect x="723.98" y="385.9" width="1" height="5.2" fill="#1c1c1c" /><rect x="725.88" y="385.9" width="1" height="5.2" fill="#1c1c1c" /><rect x="724.98" y="386.3" width="0.9" height="4.4" fill="#9a9a9a" />
<rect x="729.45" y="385.9" width="18.08" height="5.2" fill="url(#gBay)" rx="1"/><rect x="731.85" y="387.77" width="10.68" height="1.35" fill="#505050" rx="0.5"/><rect x="747.53" y="385.9" width="4.52" height="5.2" fill="#3a3a3a" /><rect x="747.83" y="385.9" width="1" height="5.2" fill="#1c1c1c" /><rect x="749.73" y="385.9" width="1" height="5.2" fill="#1c1c1c" /><rect x="748.83" y="386.3" width="0.9" height="4.4" fill="#9a9a9a" />
<rect x="753.3" y="385.9" width="18.08" height="5.2" fill="url(#gBay)" rx="1"/><rect x="755.7" y="387.77" width="10.68" height="1.35" fill="#505050" rx="0.5"/><rect x="771.38" y="385.9" width="4.52" height="5.2" fill="#3a3a3a" /><rect x="771.68" y="385.9" width="1" height="5.2" fill="#1c1c1c" /><rect x="773.58" y="385.9" width="1" height="5.2" fill="#1c1c1c" /><rect x="772.68" y="386.3" width="0.9" height="4.4" fill="#9a9a9a" />
<rect x="777.15" y="385.9" width="18.08" height="5.2" fill="url(#gBay)" rx="1"/><rect x="779.55" y="387.77" width="10.68" height="1.35" fill="#505050" rx="0.5"/><rect x="795.23" y="385.9" width="4.52" height="5.2" fill="#3a3a3a" /><rect x="795.53" y="385.9" width="1" height="5.2" fill="#1c1c1c" /><rect x="797.43" y="385.9" width="1" height="5.2" fill="#1c1c1c" /><rect x="796.53" y="386.3" width="0.9" height="4.4" fill="#9a9a9a" />
<rect x="705.6" y="392.35" width="18.08" height="5.2" fill="url(#gBay)" rx="1"/><rect x="708" y="394.22" width="10.68" height="1.35" fill="#505050" rx="0.5"/><rect x="723.68" y="392.35" width="4.52" height="5.2" fill="#3a3a3a" /><rect x="723.98" y="392.35" width="1" height="5.2" fill="#1c1c1c" /><rect x="725.88" y="392.35" width="1" height="5.2" fill="#1c1c1c" /><rect x="724.98" y="392.75" width="0.9" height="4.4" fill="#9a9a9a" />
<rect x="729.45" y="392.35" width="18.08" height="5.2" fill="url(#gBay)" rx="1"/><rect x="731.85" y="394.22" width="10.68" height="1.35" fill="#505050" rx="0.5"/><rect x="747.53" y="392.35" width="4.52" height="5.2" fill="#3a3a3a" /><rect x="747.83" y="392.35" width="1" height="5.2" fill="#1c1c1c" /><rect x="749.73" y="392.35" width="1" height="5.2" fill="#1c1c1c" /><rect x="748.83" y="392.75" width="0.9" height="4.4" fill="#9a9a9a" />
<rect x="753.3" y="392.35" width="18.08" height="5.2" fill="url(#gBay)" rx="1"/><rect x="755.7" y="394.22" width="10.68" height="1.35" fill="#505050" rx="0.5"/><rect x="771.38" y="392.35" width="4.52" height="5.2" fill="#3a3a3a" /><rect x="771.68" y="392.35" width="1" height="5.2" fill="#1c1c1c" /><rect x="773.58" y="392.35" width="1" height="5.2" fill="#1c1c1c" /><rect x="772.68" y="392.75" width="0.9" height="4.4" fill="#9a9a9a" />
<rect x="777.15" y="392.35" width="18.08" height="5.2" fill="url(#gBay)" rx="1"/><rect x="779.55" y="394.22" width="10.68" height="1.35" fill="#505050" rx="0.5"/><rect x="795.23" y="392.35" width="4.52" height="5.2" fill="#3a3a3a" /><rect x="795.53" y="392.35" width="1" height="5.2" fill="#1c1c1c" /><rect x="797.43" y="392.35" width="1" height="5.2" fill="#1c1c1c" /><rect x="796.53" y="392.75" width="0.9" height="4.4" fill="#9a9a9a" />
</g>
<rect x="696.8" y="361.5" width="112" height="38" fill="none" stroke="#484848" stroke-width="0.5"/>
<path d="M697.8 365.4l1.800-1.400M698.2 363.9l1 1.600" stroke="#a8a8a8" stroke-width="0.6"/>
<path d="M697.8 396.6l1.800-1.400M698.2 395.1l1 1.600" stroke="#a8a8a8" stroke-width="0.6"/>
<path d="M806 365.4l1.800-1.400M806.4 363.9l1 1.600" stroke="#a8a8a8" stroke-width="0.6"/>
<path d="M806 396.6l1.800-1.400M806.4 395.1l1 1.600" stroke="#a8a8a8" stroke-width="0.6"/>
<clipPath id="cs10"><rect x="696.8" y="399.5" width="112" height="31.9"/></clipPath>
<g clip-path="url(#cs10)">
<rect x="696.8" y="399.5" width="112" height="31.9" fill="url(#gSrv)" />
<path d="M725.92 431.4L752.8 399.5L764 399.5L737.12 431.4z" fill="#fff" opacity="0.07"/>
<rect x="705.4" y="400.2" width="2.6" height="1" fill="#1a1a1a" />
<rect x="715.4" y="400.4" width="28.4" height="1.3" fill="#4a4a4a" />
<rect x="761.4" y="400.4" width="36.4" height="1.3" fill="#4a4a4a" />
<rect x="715.8" y="401.3" width="27.6" height="0.5" fill="#8a8a8a" />
<rect x="761.8" y="401.3" width="35.6" height="0.5" fill="#8a8a8a" />
<rect x="705" y="404" width="95.75" height="25.8" fill="#4a4a4a" />
<rect x="705.6" y="404.6" width="18.08" height="5" fill="url(#gBay)" rx="1"/><rect x="708" y="406.4" width="10.68" height="1.3" fill="#505050" rx="0.5"/><rect x="723.68" y="404.6" width="4.52" height="5" fill="#3a3a3a" /><rect x="723.98" y="404.6" width="1" height="5" fill="#1c1c1c" /><rect x="725.88" y="404.6" width="1" height="5" fill="#1c1c1c" /><rect x="724.98" y="405" width="0.9" height="4.2" fill="#9a9a9a" />
<rect x="729.45" y="404.6" width="18.08" height="5" fill="url(#gBay)" rx="1"/><rect x="731.85" y="406.4" width="10.68" height="1.3" fill="#505050" rx="0.5"/><rect x="747.53" y="404.6" width="4.52" height="5" fill="#3a3a3a" /><rect x="747.83" y="404.6" width="1" height="5" fill="#1c1c1c" /><rect x="749.73" y="404.6" width="1" height="5" fill="#1c1c1c" /><rect x="748.83" y="405" width="0.9" height="4.2" fill="#9a9a9a" />
<rect x="753.3" y="404.6" width="18.08" height="5" fill="url(#gBay)" rx="1"/><rect x="755.7" y="406.4" width="10.68" height="1.3" fill="#505050" rx="0.5"/><rect x="771.38" y="404.6" width="4.52" height="5" fill="#3a3a3a" /><rect x="771.68" y="404.6" width="1" height="5" fill="#1c1c1c" /><rect x="773.58" y="404.6" width="1" height="5" fill="#1c1c1c" /><rect x="772.68" y="405" width="0.9" height="4.2" fill="#9a9a9a" />
<rect x="777.15" y="404.6" width="18.08" height="5" fill="url(#gBay)" rx="1"/><rect x="779.55" y="406.4" width="10.68" height="1.3" fill="#505050" rx="0.5"/><rect x="795.23" y="404.6" width="4.52" height="5" fill="#3a3a3a" /><rect x="795.53" y="404.6" width="1" height="5" fill="#1c1c1c" /><rect x="797.43" y="404.6" width="1" height="5" fill="#1c1c1c" /><rect x="796.53" y="405" width="0.9" height="4.2" fill="#9a9a9a" />
<rect x="705.6" y="410.95" width="18.08" height="5" fill="url(#gBay)" rx="1"/><rect x="708" y="412.75" width="10.68" height="1.3" fill="#505050" rx="0.5"/><rect x="723.68" y="410.95" width="4.52" height="5" fill="#3a3a3a" /><rect x="723.98" y="410.95" width="1" height="5" fill="#1c1c1c" /><rect x="725.88" y="410.95" width="1" height="5" fill="#1c1c1c" /><rect x="724.98" y="411.35" width="0.9" height="4.2" fill="#9a9a9a" />
<rect x="729.45" y="410.95" width="18.08" height="5" fill="url(#gBay)" rx="1"/><rect x="731.85" y="412.75" width="10.68" height="1.3" fill="#505050" rx="0.5"/><rect x="747.53" y="410.95" width="4.52" height="5" fill="#3a3a3a" /><rect x="747.83" y="410.95" width="1" height="5" fill="#1c1c1c" /><rect x="749.73" y="410.95" width="1" height="5" fill="#1c1c1c" /><rect x="748.83" y="411.35" width="0.9" height="4.2" fill="#9a9a9a" />
<rect x="753.3" y="410.95" width="18.08" height="5" fill="url(#gBay)" rx="1"/><rect x="755.7" y="412.75" width="10.68" height="1.3" fill="#505050" rx="0.5"/><rect x="771.38" y="410.95" width="4.52" height="5" fill="#3a3a3a" /><rect x="771.68" y="410.95" width="1" height="5" fill="#1c1c1c" /><rect x="773.58" y="410.95" width="1" height="5" fill="#1c1c1c" /><rect x="772.68" y="411.35" width="0.9" height="4.2" fill="#9a9a9a" />
<rect x="777.15" y="410.95" width="18.08" height="5" fill="url(#gBay)" rx="1"/><rect x="779.55" y="412.75" width="10.68" height="1.3" fill="#505050" rx="0.5"/><rect x="795.23" y="410.95" width="4.52" height="5" fill="#3a3a3a" /><rect x="795.53" y="410.95" width="1" height="5" fill="#1c1c1c" /><rect x="797.43" y="410.95" width="1" height="5" fill="#1c1c1c" /><rect x="796.53" y="411.35" width="0.9" height="4.2" fill="#9a9a9a" />
<rect x="705.6" y="417.3" width="18.08" height="5" fill="url(#gBay)" rx="1"/><rect x="708" y="419.1" width="10.68" height="1.3" fill="#505050" rx="0.5"/><rect x="723.68" y="417.3" width="4.52" height="5" fill="#3a3a3a" /><rect x="723.98" y="417.3" width="1" height="5" fill="#1c1c1c" /><rect x="725.88" y="417.3" width="1" height="5" fill="#1c1c1c" /><rect x="724.98" y="417.7" width="0.9" height="4.2" fill="#9a9a9a" />
<rect x="729.45" y="417.3" width="18.08" height="5" fill="url(#gBay)" rx="1"/><rect x="731.85" y="419.1" width="10.68" height="1.3" fill="#505050" rx="0.5"/><rect x="747.53" y="417.3" width="4.52" height="5" fill="#3a3a3a" /><rect x="747.83" y="417.3" width="1" height="5" fill="#1c1c1c" /><rect x="749.73" y="417.3" width="1" height="5" fill="#1c1c1c" /><rect x="748.83" y="417.7" width="0.9" height="4.2" fill="#9a9a9a" />
<rect x="753.3" y="417.3" width="18.08" height="5" fill="url(#gBay)" rx="1"/><rect x="755.7" y="419.1" width="10.68" height="1.3" fill="#505050" rx="0.5"/><rect x="771.38" y="417.3" width="4.52" height="5" fill="#3a3a3a" /><rect x="771.68" y="417.3" width="1" height="5" fill="#1c1c1c" /><rect x="773.58" y="417.3" width="1" height="5" fill="#1c1c1c" /><rect x="772.68" y="417.7" width="0.9" height="4.2" fill="#9a9a9a" />
<rect x="777.15" y="417.3" width="18.08" height="5" fill="url(#gBay)" rx="1"/><rect x="779.55" y="419.1" width="10.68" height="1.3" fill="#505050" rx="0.5"/><rect x="795.23" y="417.3" width="4.52" height="5" fill="#3a3a3a" /><rect x="795.53" y="417.3" width="1" height="5" fill="#1c1c1c" /><rect x="797.43" y="417.3" width="1" height="5" fill="#1c1c1c" /><rect x="796.53" y="417.7" width="0.9" height="4.2" fill="#9a9a9a" />
<rect x="705.6" y="423.65" width="18.08" height="5" fill="url(#gBay)" rx="1"/><rect x="708" y="425.45" width="10.68" height="1.3" fill="#505050" rx="0.5"/><rect x="723.68" y="423.65" width="4.52" height="5" fill="#3a3a3a" /><rect x="723.98" y="423.65" width="1" height="5" fill="#1c1c1c" /><rect x="725.88" y="423.65" width="1" height="5" fill="#1c1c1c" /><rect x="724.98" y="424.05" width="0.9" height="4.2" fill="#9a9a9a" />
<rect x="729.45" y="423.65" width="18.08" height="5" fill="url(#gBay)" rx="1"/><rect x="731.85" y="425.45" width="10.68" height="1.3" fill="#505050" rx="0.5"/><rect x="747.53" y="423.65" width="4.52" height="5" fill="#3a3a3a" /><rect x="747.83" y="423.65" width="1" height="5" fill="#1c1c1c" /><rect x="749.73" y="423.65" width="1" height="5" fill="#1c1c1c" /><rect x="748.83" y="424.05" width="0.9" height="4.2" fill="#9a9a9a" />
<rect x="753.3" y="423.65" width="18.08" height="5" fill="url(#gBay)" rx="1"/><rect x="755.7" y="425.45" width="10.68" height="1.3" fill="#505050" rx="0.5"/><rect x="771.38" y="423.65" width="4.52" height="5" fill="#3a3a3a" /><rect x="771.68" y="423.65" width="1" height="5" fill="#1c1c1c" /><rect x="773.58" y="423.65" width="1" height="5" fill="#1c1c1c" /><rect x="772.68" y="424.05" width="0.9" height="4.2" fill="#9a9a9a" />
<rect x="777.15" y="423.65" width="18.08" height="5" fill="url(#gBay)" rx="1"/><rect x="779.55" y="425.45" width="10.68" height="1.3" fill="#505050" rx="0.5"/><rect x="795.23" y="423.65" width="4.52" height="5" fill="#3a3a3a" /><rect x="795.53" y="423.65" width="1" height="5" fill="#1c1c1c" /><rect x="797.43" y="423.65" width="1" height="5" fill="#1c1c1c" /><rect x="796.53" y="424.05" width="0.9" height="4.2" fill="#9a9a9a" />
</g>
<rect x="696.8" y="399.5" width="112" height="31.9" fill="none" stroke="#484848" stroke-width="0.5"/>
<path d="M697.8 403.4l1.800-1.400M698.2 401.9l1 1.600" stroke="#a8a8a8" stroke-width="0.6"/>
<path d="M697.8 428.5l1.800-1.400M698.2 427l1 1.600" stroke="#a8a8a8" stroke-width="0.6"/>
<path d="M806 403.4l1.800-1.400M806.4 401.9l1 1.600" stroke="#a8a8a8" stroke-width="0.6"/>
<path d="M806 428.5l1.800-1.400M806.4 427l1 1.600" stroke="#a8a8a8" stroke-width="0.6"/>
<rect x="698.7" y="431.4" width="108.1" height="17" fill="#161616" />
<rect x="698.7" y="460" width="108.1" height="9.6" fill="#161616" />
<rect x="698.7" y="481" width="108.1" height="7" fill="#161616" />
<rect x="816.2" y="448.9" width="5.2" height="10.1" fill="#6a6a6a" stroke="#4a4a4a" stroke-width="0.5" rx="1.2"/>
<rect x="689.2" y="447.9" width="128" height="12.1" fill="#7c7c7c" stroke="#454545" stroke-width="0.6" rx="1.2"/>
<rect x="690.2" y="448.9" width="126" height="9.9" fill="#4e4e4e" rx="0.8"/>
<path d="M692.6 450.5H813.2" stroke="#f4f4f4" stroke-width="1" stroke-dasharray="3.1 1.500"/>
<rect x="697.2" y="452.9" width="1.6" height="3.2" fill="#161616" />
<circle cx="702.78" cy="454.6" r="1.15" fill="#6a6a6a" stroke="#1a1a1a" stroke-width="0.7"/>
<circle cx="707.56" cy="454.6" r="1.15" fill="#6a6a6a" stroke="#1a1a1a" stroke-width="0.7"/>
<circle cx="712.34" cy="454.6" r="1.15" fill="#6a6a6a" stroke="#1a1a1a" stroke-width="0.7"/>
<circle cx="717.12" cy="454.6" r="1.15" fill="#6a6a6a" stroke="#1a1a1a" stroke-width="0.7"/>
<rect x="721.1" y="452.9" width="1.6" height="3.2" fill="#161616" />
<circle cx="726.68" cy="454.6" r="1.15" fill="#6a6a6a" stroke="#1a1a1a" stroke-width="0.7"/>
<circle cx="731.46" cy="454.6" r="1.15" fill="#6a6a6a" stroke="#1a1a1a" stroke-width="0.7"/>
<circle cx="736.24" cy="454.6" r="1.15" fill="#6a6a6a" stroke="#1a1a1a" stroke-width="0.7"/>
<circle cx="741.02" cy="454.6" r="1.15" fill="#6a6a6a" stroke="#1a1a1a" stroke-width="0.7"/>
<rect x="745" y="452.9" width="1.6" height="3.2" fill="#161616" />
<rect x="749.78" y="452.9" width="1.6" height="3.2" fill="#161616" />
<circle cx="755.36" cy="454.6" r="1.15" fill="#6a6a6a" stroke="#1a1a1a" stroke-width="0.7"/>
<circle cx="760.14" cy="454.6" r="1.15" fill="#6a6a6a" stroke="#1a1a1a" stroke-width="0.7"/>
<circle cx="764.92" cy="454.6" r="1.15" fill="#6a6a6a" stroke="#1a1a1a" stroke-width="0.7"/>
<rect x="768.9" y="452.9" width="1.6" height="3.2" fill="#161616" />
<rect x="773.68" y="452.9" width="1.6" height="3.2" fill="#161616" />
<circle cx="779.26" cy="454.6" r="1.15" fill="#6a6a6a" stroke="#1a1a1a" stroke-width="0.7"/>
<circle cx="784.04" cy="454.6" r="1.15" fill="#6a6a6a" stroke="#1a1a1a" stroke-width="0.7"/>
<circle cx="788.82" cy="454.6" r="1.15" fill="#6a6a6a" stroke="#1a1a1a" stroke-width="0.7"/>
<rect x="792.8" y="452.9" width="1.6" height="3.2" fill="#161616" />
<rect x="797.58" y="452.9" width="1.6" height="3.2" fill="#161616" />
<circle cx="803.16" cy="454.6" r="1.15" fill="#6a6a6a" stroke="#1a1a1a" stroke-width="0.7"/>
<circle cx="807.94" cy="454.6" r="1.15" fill="#6a6a6a" stroke="#1a1a1a" stroke-width="0.7"/>
<path d="M691.7 455.5l2.200-1.800M692.2 453.6l1.200 2" stroke="#d8d8d8" stroke-width="0.7"/>
<path d="M811.7 455.5l2.200-1.800M812.2 453.6l1.200 2" stroke="#d8d8d8" stroke-width="0.7"/>
<circle cx="819" cy="450.7" r="0.700" fill="#aaa"/><circle cx="819" cy="457.2" r="0.700" fill="#aaa"/>
<rect x="696.8" y="469.5" width="112" height="11.5" fill="#6c6c6c" stroke="#4a4a4a" stroke-width="0.5"/>
<rect x="701.9" y="471.1" width="22.6" height="8.9" fill="#7e7e7e" />
<path d="M702.5 472.4h21.6" stroke="#f6f6f6" stroke-width="1" stroke-dasharray="2.7 1.000"/>
<rect x="702.7" y="474" width="21" height="5.5" fill="#585858" />
<circle cx="704.5" cy="478.3" r="1.0" fill="#6e6e6e" stroke="#2c2c2c" stroke-width="0.5"/>
<circle cx="708" cy="478.3" r="1.0" fill="#6e6e6e" stroke="#2c2c2c" stroke-width="0.5"/>
<circle cx="711.5" cy="478.3" r="1.0" fill="#6e6e6e" stroke="#2c2c2c" stroke-width="0.5"/>
<circle cx="715" cy="478.3" r="1.0" fill="#6e6e6e" stroke="#2c2c2c" stroke-width="0.5"/>
<circle cx="718.5" cy="478.3" r="1.0" fill="#6e6e6e" stroke="#2c2c2c" stroke-width="0.5"/>
<circle cx="722" cy="478.3" r="1.0" fill="#6e6e6e" stroke="#2c2c2c" stroke-width="0.5"/>
<rect x="706.9" y="474.1" width="0.7" height="3" fill="#dcdcdc" />
<rect x="712.9" y="474.1" width="0.7" height="3" fill="#dcdcdc" />
<rect x="718.9" y="474.1" width="0.7" height="3" fill="#dcdcdc" />
<rect x="729.2" y="471.1" width="22.6" height="8.9" fill="#7e7e7e" />
<path d="M729.8 472.4h21.6" stroke="#f6f6f6" stroke-width="1" stroke-dasharray="2.7 1.000"/>
<rect x="730" y="474" width="21" height="5.5" fill="#585858" />
<circle cx="731.8" cy="478.3" r="1.0" fill="#6e6e6e" stroke="#2c2c2c" stroke-width="0.5"/>
<circle cx="735.3" cy="478.3" r="1.0" fill="#6e6e6e" stroke="#2c2c2c" stroke-width="0.5"/>
<circle cx="738.8" cy="478.3" r="1.0" fill="#6e6e6e" stroke="#2c2c2c" stroke-width="0.5"/>
<circle cx="742.3" cy="478.3" r="1.0" fill="#6e6e6e" stroke="#2c2c2c" stroke-width="0.5"/>
<circle cx="745.8" cy="478.3" r="1.0" fill="#6e6e6e" stroke="#2c2c2c" stroke-width="0.5"/>
<circle cx="749.3" cy="478.3" r="1.0" fill="#6e6e6e" stroke="#2c2c2c" stroke-width="0.5"/>
<rect x="734.2" y="474.1" width="0.7" height="3" fill="#dcdcdc" />
<rect x="740.2" y="474.1" width="0.7" height="3" fill="#dcdcdc" />
<rect x="746.2" y="474.1" width="0.7" height="3" fill="#dcdcdc" />
<rect x="755.3" y="471.1" width="22.6" height="8.9" fill="#7e7e7e" />
<path d="M755.9 472.4h21.6" stroke="#f6f6f6" stroke-width="1" stroke-dasharray="2.7 1.000"/>
<rect x="756.1" y="474" width="21" height="5.5" fill="#585858" />
<circle cx="757.9" cy="478.3" r="1.0" fill="#6e6e6e" stroke="#2c2c2c" stroke-width="0.5"/>
<circle cx="761.4" cy="478.3" r="1.0" fill="#6e6e6e" stroke="#2c2c2c" stroke-width="0.5"/>
<circle cx="764.9" cy="478.3" r="1.0" fill="#6e6e6e" stroke="#2c2c2c" stroke-width="0.5"/>
<circle cx="768.4" cy="478.3" r="1.0" fill="#6e6e6e" stroke="#2c2c2c" stroke-width="0.5"/>
<circle cx="771.9" cy="478.3" r="1.0" fill="#6e6e6e" stroke="#2c2c2c" stroke-width="0.5"/>
<circle cx="775.4" cy="478.3" r="1.0" fill="#6e6e6e" stroke="#2c2c2c" stroke-width="0.5"/>
<rect x="760.3" y="474.1" width="0.7" height="3" fill="#dcdcdc" />
<rect x="766.3" y="474.1" width="0.7" height="3" fill="#dcdcdc" />
<rect x="772.3" y="474.1" width="0.7" height="3" fill="#dcdcdc" />
<rect x="781.4" y="471.1" width="22.6" height="8.9" fill="#7e7e7e" />
<path d="M782 472.4h21.6" stroke="#f6f6f6" stroke-width="1" stroke-dasharray="2.7 1.000"/>
<rect x="782.2" y="474" width="21" height="5.5" fill="#585858" />
<circle cx="784" cy="478.3" r="1.0" fill="#6e6e6e" stroke="#2c2c2c" stroke-width="0.5"/>
<circle cx="787.5" cy="478.3" r="1.0" fill="#6e6e6e" stroke="#2c2c2c" stroke-width="0.5"/>
<circle cx="791" cy="478.3" r="1.0" fill="#6e6e6e" stroke="#2c2c2c" stroke-width="0.5"/>
<circle cx="794.5" cy="478.3" r="1.0" fill="#6e6e6e" stroke="#2c2c2c" stroke-width="0.5"/>
<circle cx="798" cy="478.3" r="1.0" fill="#6e6e6e" stroke="#2c2c2c" stroke-width="0.5"/>
<circle cx="801.5" cy="478.3" r="1.0" fill="#6e6e6e" stroke="#2c2c2c" stroke-width="0.5"/>
<rect x="786.4" y="474.1" width="0.7" height="3" fill="#dcdcdc" />
<rect x="792.4" y="474.1" width="0.7" height="3" fill="#dcdcdc" />
<rect x="798.4" y="474.1" width="0.7" height="3" fill="#dcdcdc" />
<path d="M697.8 475.95l1.800-1.400M698.2 474.45l1 1.600" stroke="#a4a4a4" stroke-width="0.6"/><path d="M806 475.95l1.800-1.400M806.4 474.45l1 1.600" stroke="#a4a4a4" stroke-width="0.6"/>
<rect x="696.8" y="487.8" width="112" height="26.1" fill="#5c5c5c" stroke="#444" stroke-width="0.5"/>
<rect x="705.1" y="491" width="96" height="21" fill="#141414" />
<rect x="706" y="491.8" width="22.4" height="5.7" fill="#3c3c3c" />
<rect x="707" y="492.1" width="1.3" height="5.1" fill="#6a6a6a" />
<rect x="709" y="491.8" width="3" height="5.7" fill="#030303" />
<rect x="713.6" y="492.7" width="12.4" height="3.9" fill="#8e8e8e" />
<rect x="719.44" y="493.85" width="5.76" height="1.71" fill="#c8c8c8" />
<rect x="730" y="491.8" width="22.4" height="5.7" fill="#3c3c3c" />
<rect x="731" y="492.1" width="1.3" height="5.1" fill="#6a6a6a" />
<rect x="733" y="491.8" width="3" height="5.7" fill="#030303" />
<rect x="737.6" y="492.7" width="12.4" height="3.9" fill="#8e8e8e" />
<rect x="743.44" y="493.85" width="5.76" height="1.71" fill="#c8c8c8" />
<rect x="754" y="491.8" width="22.4" height="5.7" fill="#3c3c3c" />
<rect x="755" y="492.1" width="1.3" height="5.1" fill="#6a6a6a" />
<rect x="757" y="491.8" width="3" height="5.7" fill="#030303" />
<rect x="761.6" y="492.7" width="12.4" height="3.9" fill="#8e8e8e" />
<rect x="767.44" y="493.85" width="5.76" height="1.71" fill="#c8c8c8" />
<rect x="778" y="491.8" width="22.4" height="5.7" fill="#3c3c3c" />
<rect x="779" y="492.1" width="1.3" height="5.1" fill="#6a6a6a" />
<rect x="781" y="491.8" width="3" height="5.7" fill="#030303" />
<rect x="785.6" y="492.7" width="12.4" height="3.9" fill="#8e8e8e" />
<rect x="791.44" y="493.85" width="5.76" height="1.71" fill="#c8c8c8" />
<rect x="706" y="498.8" width="22.4" height="5.7" fill="#3c3c3c" />
<rect x="707" y="499.1" width="1.3" height="5.1" fill="#6a6a6a" />
<rect x="709" y="498.8" width="3" height="5.7" fill="#030303" />
<rect x="713.6" y="499.7" width="12.4" height="3.9" fill="#8e8e8e" />
<rect x="719.44" y="500.85" width="5.76" height="1.71" fill="#c8c8c8" />
<rect x="730" y="498.8" width="22.4" height="5.7" fill="#3c3c3c" />
<rect x="731" y="499.1" width="1.3" height="5.1" fill="#6a6a6a" />
<rect x="733" y="498.8" width="3" height="5.7" fill="#030303" />
<rect x="737.6" y="499.7" width="12.4" height="3.9" fill="#8e8e8e" />
<rect x="743.44" y="500.85" width="5.76" height="1.71" fill="#c8c8c8" />
<rect x="754" y="498.8" width="22.4" height="5.7" fill="#3c3c3c" />
<rect x="755" y="499.1" width="1.3" height="5.1" fill="#6a6a6a" />
<rect x="757" y="498.8" width="3" height="5.7" fill="#030303" />
<rect x="761.6" y="499.7" width="12.4" height="3.9" fill="#8e8e8e" />
<rect x="767.44" y="500.85" width="5.76" height="1.71" fill="#c8c8c8" />
<rect x="778" y="498.8" width="22.4" height="5.7" fill="#3c3c3c" />
<rect x="779" y="499.1" width="1.3" height="5.1" fill="#6a6a6a" />
<rect x="781" y="498.8" width="3" height="5.7" fill="#030303" />
<rect x="785.6" y="499.7" width="12.4" height="3.9" fill="#8e8e8e" />
<rect x="791.44" y="500.85" width="5.76" height="1.71" fill="#c8c8c8" />
<rect x="706" y="505.8" width="22.4" height="5.7" fill="#3c3c3c" />
<rect x="707" y="506.1" width="1.3" height="5.1" fill="#6a6a6a" />
<rect x="709" y="505.8" width="3" height="5.7" fill="#030303" />
<rect x="713.6" y="506.7" width="12.4" height="3.9" fill="#8e8e8e" />
<rect x="719.44" y="507.85" width="5.76" height="1.71" fill="#c8c8c8" />
<rect x="730" y="505.8" width="22.4" height="5.7" fill="#3c3c3c" />
<rect x="731" y="506.1" width="1.3" height="5.1" fill="#6a6a6a" />
<rect x="733" y="505.8" width="3" height="5.7" fill="#030303" />
<rect x="737.6" y="506.7" width="12.4" height="3.9" fill="#8e8e8e" />
<rect x="743.44" y="507.85" width="5.76" height="1.71" fill="#c8c8c8" />
<rect x="754" y="505.8" width="22.4" height="5.7" fill="#3c3c3c" />
<rect x="755" y="506.1" width="1.3" height="5.1" fill="#6a6a6a" />
<rect x="757" y="505.8" width="3" height="5.7" fill="#030303" />
<rect x="761.6" y="506.7" width="12.4" height="3.9" fill="#8e8e8e" />
<rect x="767.44" y="507.85" width="5.76" height="1.71" fill="#c8c8c8" />
<rect x="778" y="505.8" width="22.4" height="5.7" fill="#3c3c3c" />
<rect x="779" y="506.1" width="1.3" height="5.1" fill="#6a6a6a" />
<rect x="781" y="505.8" width="3" height="5.7" fill="#030303" />
<rect x="785.6" y="506.7" width="12.4" height="3.9" fill="#8e8e8e" />
<rect x="791.44" y="507.85" width="5.76" height="1.71" fill="#c8c8c8" />
<path d="M697.8 491.5l1.800-1.400M698.2 490l1 1.600" stroke="#a4a4a4" stroke-width="0.6"/><path d="M697.8 511.6l1.800-1.400M698.2 510.1l1 1.600" stroke="#a4a4a4" stroke-width="0.6"/><path d="M806 491.5l1.800-1.400M806.4 490l1 1.600" stroke="#a4a4a4" stroke-width="0.6"/><path d="M806 511.6l1.800-1.400M806.4 510.1l1 1.600" stroke="#a4a4a4" stroke-width="0.6"/>
<rect x="698.7" y="513.9" width="108.1" height="4.6" fill="#0a0a0a" />
<clipPath id="cs11"><rect x="696.8" y="518.3" width="112" height="38.5"/></clipPath>
<g clip-path="url(#cs11)">
<rect x="696.8" y="518.3" width="112" height="38.5" fill="#555" stroke="#3c3c3c" stroke-width="0.5"/>
<rect x="701.5" y="519.1" width="102.7" height="36.7" fill="#2a2a2a" />
<rect x="702.5" y="521.5" width="24.13" height="7.2" fill="url(#gDrv)" rx="1.2" stroke="#2a2a2a" stroke-width="0.4"/>
<ellipse cx="710.46" cy="525.1" rx="5.67" ry="2.38" fill="url(#pMesh2)" stroke="#444" stroke-width="0.5"/>
<rect x="716.98" y="521.8" width="0.6" height="6.6" fill="#5a5a5a" />
<circle cx="720.23" cy="525.1" r="1.73" fill="#e4e4e4" stroke="#202020" stroke-width="1.1"/>
<rect x="724.33" y="523.08" width="1.1" height="1.1" fill="#1e1e1e" />
<rect x="724.33" y="525.82" width="1.1" height="1.1" fill="#1e1e1e" />
<rect x="728.02" y="521.5" width="24.13" height="7.2" fill="url(#gDrv)" rx="1.2" stroke="#2a2a2a" stroke-width="0.4"/>
<ellipse cx="735.99" cy="525.1" rx="5.67" ry="2.38" fill="url(#pMesh2)" stroke="#444" stroke-width="0.5"/>
<rect x="742.5" y="521.8" width="0.6" height="6.6" fill="#5a5a5a" />
<circle cx="745.76" cy="525.1" r="1.73" fill="#e4e4e4" stroke="#202020" stroke-width="1.1"/>
<rect x="749.86" y="523.08" width="1.1" height="1.1" fill="#1e1e1e" />
<rect x="749.86" y="525.82" width="1.1" height="1.1" fill="#1e1e1e" />
<rect x="753.55" y="521.5" width="24.13" height="7.2" fill="url(#gDrv)" rx="1.2" stroke="#2a2a2a" stroke-width="0.4"/>
<ellipse cx="761.51" cy="525.1" rx="5.67" ry="2.38" fill="url(#pMesh2)" stroke="#444" stroke-width="0.5"/>
<rect x="768.03" y="521.8" width="0.6" height="6.6" fill="#5a5a5a" />
<circle cx="771.28" cy="525.1" r="1.73" fill="#e4e4e4" stroke="#202020" stroke-width="1.1"/>
<rect x="775.38" y="523.08" width="1.1" height="1.1" fill="#1e1e1e" />
<rect x="775.38" y="525.82" width="1.1" height="1.1" fill="#1e1e1e" />
<rect x="779.08" y="521.5" width="24.13" height="7.2" fill="url(#gDrv)" rx="1.2" stroke="#2a2a2a" stroke-width="0.4"/>
<ellipse cx="787.04" cy="525.1" rx="5.67" ry="2.38" fill="url(#pMesh2)" stroke="#444" stroke-width="0.5"/>
<rect x="793.55" y="521.8" width="0.6" height="6.6" fill="#5a5a5a" />
<circle cx="796.81" cy="525.1" r="1.73" fill="#e4e4e4" stroke="#202020" stroke-width="1.1"/>
<rect x="800.91" y="523.08" width="1.1" height="1.1" fill="#1e1e1e" />
<rect x="800.91" y="525.82" width="1.1" height="1.1" fill="#1e1e1e" />
<rect x="702.5" y="530.2" width="24.13" height="7.2" fill="url(#gDrv)" rx="1.2" stroke="#2a2a2a" stroke-width="0.4"/>
<ellipse cx="710.46" cy="533.8" rx="5.67" ry="2.38" fill="url(#pMesh2)" stroke="#444" stroke-width="0.5"/>
<rect x="716.98" y="530.5" width="0.6" height="6.6" fill="#5a5a5a" />
<circle cx="720.23" cy="533.8" r="1.73" fill="#e4e4e4" stroke="#202020" stroke-width="1.1"/>
<rect x="724.33" y="531.78" width="1.1" height="1.1" fill="#1e1e1e" />
<rect x="724.33" y="534.52" width="1.1" height="1.1" fill="#1e1e1e" />
<rect x="728.02" y="530.2" width="24.13" height="7.2" fill="url(#gDrv)" rx="1.2" stroke="#2a2a2a" stroke-width="0.4"/>
<ellipse cx="735.99" cy="533.8" rx="5.67" ry="2.38" fill="url(#pMesh2)" stroke="#444" stroke-width="0.5"/>
<rect x="742.5" y="530.5" width="0.6" height="6.6" fill="#5a5a5a" />
<circle cx="745.76" cy="533.8" r="1.73" fill="#e4e4e4" stroke="#202020" stroke-width="1.1"/>
<rect x="749.86" y="531.78" width="1.1" height="1.1" fill="#1e1e1e" />
<rect x="749.86" y="534.52" width="1.1" height="1.1" fill="#1e1e1e" />
<rect x="753.55" y="530.2" width="24.13" height="7.2" fill="url(#gDrv)" rx="1.2" stroke="#2a2a2a" stroke-width="0.4"/>
<ellipse cx="761.51" cy="533.8" rx="5.67" ry="2.38" fill="url(#pMesh2)" stroke="#444" stroke-width="0.5"/>
<rect x="768.03" y="530.5" width="0.6" height="6.6" fill="#5a5a5a" />
<circle cx="771.28" cy="533.8" r="1.73" fill="#e4e4e4" stroke="#202020" stroke-width="1.1"/>
<rect x="775.38" y="531.78" width="1.1" height="1.1" fill="#1e1e1e" />
<rect x="775.38" y="534.52" width="1.1" height="1.1" fill="#1e1e1e" />
<rect x="779.08" y="530.2" width="24.13" height="7.2" fill="url(#gDrv)" rx="1.2" stroke="#2a2a2a" stroke-width="0.4"/>
<ellipse cx="787.04" cy="533.8" rx="5.67" ry="2.38" fill="url(#pMesh2)" stroke="#444" stroke-width="0.5"/>
<rect x="793.55" y="530.5" width="0.6" height="6.6" fill="#5a5a5a" />
<circle cx="796.81" cy="533.8" r="1.73" fill="#e4e4e4" stroke="#202020" stroke-width="1.1"/>
<rect x="800.91" y="531.78" width="1.1" height="1.1" fill="#1e1e1e" />
<rect x="800.91" y="534.52" width="1.1" height="1.1" fill="#1e1e1e" />
<rect x="702.5" y="538.9" width="24.13" height="7.2" fill="url(#gDrv)" rx="1.2" stroke="#2a2a2a" stroke-width="0.4"/>
<ellipse cx="710.46" cy="542.5" rx="5.67" ry="2.38" fill="url(#pMesh2)" stroke="#444" stroke-width="0.5"/>
<rect x="716.98" y="539.2" width="0.6" height="6.6" fill="#5a5a5a" />
<circle cx="720.23" cy="542.5" r="1.73" fill="#e4e4e4" stroke="#202020" stroke-width="1.1"/>
<rect x="724.33" y="540.48" width="1.1" height="1.1" fill="#1e1e1e" />
<rect x="724.33" y="543.22" width="1.1" height="1.1" fill="#1e1e1e" />
<rect x="728.02" y="538.9" width="24.13" height="7.2" fill="url(#gDrv)" rx="1.2" stroke="#2a2a2a" stroke-width="0.4"/>
<ellipse cx="735.99" cy="542.5" rx="5.67" ry="2.38" fill="url(#pMesh2)" stroke="#444" stroke-width="0.5"/>
<rect x="742.5" y="539.2" width="0.6" height="6.6" fill="#5a5a5a" />
<circle cx="745.76" cy="542.5" r="1.73" fill="#e4e4e4" stroke="#202020" stroke-width="1.1"/>
<rect x="749.86" y="540.48" width="1.1" height="1.1" fill="#1e1e1e" />
<rect x="749.86" y="543.22" width="1.1" height="1.1" fill="#1e1e1e" />
<rect x="753.55" y="538.9" width="24.13" height="7.2" fill="url(#gDrv)" rx="1.2" stroke="#2a2a2a" stroke-width="0.4"/>
<ellipse cx="761.51" cy="542.5" rx="5.67" ry="2.38" fill="url(#pMesh2)" stroke="#444" stroke-width="0.5"/>
<rect x="768.03" y="539.2" width="0.6" height="6.6" fill="#5a5a5a" />
<circle cx="771.28" cy="542.5" r="1.73" fill="#e4e4e4" stroke="#202020" stroke-width="1.1"/>
<rect x="775.38" y="540.48" width="1.1" height="1.1" fill="#1e1e1e" />
<rect x="775.38" y="543.22" width="1.1" height="1.1" fill="#1e1e1e" />
<rect x="779.08" y="538.9" width="24.13" height="7.2" fill="url(#gDrv)" rx="1.2" stroke="#2a2a2a" stroke-width="0.4"/>
<ellipse cx="787.04" cy="542.5" rx="5.67" ry="2.38" fill="url(#pMesh2)" stroke="#444" stroke-width="0.5"/>
<rect x="793.55" y="539.2" width="0.6" height="6.6" fill="#5a5a5a" />
<circle cx="796.81" cy="542.5" r="1.73" fill="#e4e4e4" stroke="#202020" stroke-width="1.1"/>
<rect x="800.91" y="540.48" width="1.1" height="1.1" fill="#1e1e1e" />
<rect x="800.91" y="543.22" width="1.1" height="1.1" fill="#1e1e1e" />
<rect x="702.5" y="547.6" width="24.13" height="7.2" fill="url(#gDrv)" rx="1.2" stroke="#2a2a2a" stroke-width="0.4"/>
<ellipse cx="710.46" cy="551.2" rx="5.67" ry="2.38" fill="url(#pMesh2)" stroke="#444" stroke-width="0.5"/>
<rect x="716.98" y="547.9" width="0.6" height="6.6" fill="#5a5a5a" />
<circle cx="720.23" cy="551.2" r="1.73" fill="#e4e4e4" stroke="#202020" stroke-width="1.1"/>
<rect x="724.33" y="549.18" width="1.1" height="1.1" fill="#1e1e1e" />
<rect x="724.33" y="551.92" width="1.1" height="1.1" fill="#1e1e1e" />
<rect x="728.02" y="547.6" width="24.13" height="7.2" fill="url(#gDrv)" rx="1.2" stroke="#2a2a2a" stroke-width="0.4"/>
<ellipse cx="735.99" cy="551.2" rx="5.67" ry="2.38" fill="url(#pMesh2)" stroke="#444" stroke-width="0.5"/>
<rect x="742.5" y="547.9" width="0.6" height="6.6" fill="#5a5a5a" />
<circle cx="745.76" cy="551.2" r="1.73" fill="#e4e4e4" stroke="#202020" stroke-width="1.1"/>
<rect x="749.86" y="549.18" width="1.1" height="1.1" fill="#1e1e1e" />
<rect x="749.86" y="551.92" width="1.1" height="1.1" fill="#1e1e1e" />
<rect x="753.55" y="547.6" width="24.13" height="7.2" fill="url(#gDrv)" rx="1.2" stroke="#2a2a2a" stroke-width="0.4"/>
<ellipse cx="761.51" cy="551.2" rx="5.67" ry="2.38" fill="url(#pMesh2)" stroke="#444" stroke-width="0.5"/>
<rect x="768.03" y="547.9" width="0.6" height="6.6" fill="#5a5a5a" />
<circle cx="771.28" cy="551.2" r="1.73" fill="#e4e4e4" stroke="#202020" stroke-width="1.1"/>
<rect x="775.38" y="549.18" width="1.1" height="1.1" fill="#1e1e1e" />
<rect x="775.38" y="551.92" width="1.1" height="1.1" fill="#1e1e1e" />
<rect x="779.08" y="547.6" width="24.13" height="7.2" fill="url(#gDrv)" rx="1.2" stroke="#2a2a2a" stroke-width="0.4"/>
<ellipse cx="787.04" cy="551.2" rx="5.67" ry="2.38" fill="url(#pMesh2)" stroke="#444" stroke-width="0.5"/>
<rect x="793.55" y="547.9" width="0.6" height="6.6" fill="#5a5a5a" />
<circle cx="796.81" cy="551.2" r="1.73" fill="#e4e4e4" stroke="#202020" stroke-width="1.1"/>
<rect x="800.91" y="549.18" width="1.1" height="1.1" fill="#1e1e1e" />
<rect x="800.91" y="551.92" width="1.1" height="1.1" fill="#1e1e1e" />
<rect x="783.7" y="520.9" width="19.5" height="12.7" fill="#333" stroke="#161616" stroke-width="0.7" rx="1"/>
<rect x="786.7" y="522.7" width="13.3" height="4.57" fill="#5db5ef" />
<rect x="787.7" y="529.03" width="2" height="1.6" fill="#a4a4a4" />
<rect x="791" y="529.03" width="2" height="1.6" fill="#a4a4a4" />
<rect x="794.3" y="529.03" width="2" height="1.6" fill="#a4a4a4" />
<rect x="797.6" y="529.03" width="2" height="1.6" fill="#a4a4a4" />
</g>
<path d="M697.8 522l1.800-1.400M698.2 520.5l1 1.600" stroke="#a4a4a4" stroke-width="0.6"/><path d="M697.8 554.5l1.800-1.400M698.2 553l1 1.600" stroke="#a4a4a4" stroke-width="0.6"/><path d="M806 522l1.800-1.400M806.4 520.5l1 1.600" stroke="#a4a4a4" stroke-width="0.6"/><path d="M806 554.5l1.800-1.400M806.4 553l1 1.600" stroke="#a4a4a4" stroke-width="0.6"/>
<rect x="698.7" y="557.1" width="108.1" height="28" fill="#000" />
<rect x="696.8" y="585.1" width="112" height="30.6" fill="#bdbdbd" stroke="#7a7a7a" stroke-width="0.5"/>
<rect x="700.6" y="585.7" width="51.5" height="29.4" fill="url(#gUps1)" stroke="#6e6e6e" stroke-width="0.6"/>
<rect x="754" y="585.7" width="52.2" height="29.4" fill="url(#gUps2)" stroke="#6e6e6e" stroke-width="0.6"/>
<circle cx="698.7" cy="600.4" r="0.8" fill="#8a8a8a"/><circle cx="806.9" cy="600.4" r="0.8" fill="#8a8a8a"/>
<g font-family="Liberation Sans" font-size="11" fill="currentColor">
<text transform="translate(573 190.3) scale(0.885 1)">2U Ethernet Switch/Hub</text>
<text transform="translate(573 206.3) scale(0.885 1)">C2960 Switch</text>
<text transform="translate(573 216.8) scale(0.885 1)">C2960 Switch</text>
<text transform="translate(573 227.3) scale(0.885 1)">C2960 Switch</text>
<text transform="translate(573 337.3) scale(0.885 1)">1U 19 LCD Monitor</text>
<text transform="translate(573 348.3) scale(0.885 1)">Keyboard/KVM</text>
<text transform="translate(573 363.3) scale(0.885 1)">1U Tray</text>
<text transform="translate(573 373.8) scale(0.885 1)">1U Spacer</text>
<text transform="translate(573 389.3) scale(0.885 1)">2U RAID Array</text>
<text transform="translate(573 415.3) scale(0.885 1)">3U Server</text>
<text transform="translate(573 447.3) scale(0.885 1)">3U Server</text>
<text transform="translate(573 473.3) scale(0.885 1)">2U Server</text>
<text transform="translate(573 494.3) scale(0.885 1)">2U RAID Array</text>
<text transform="translate(573 520.3) scale(0.885 1)">3U Server</text>
<text transform="translate(573 546.3) scale(0.885 1)">2U Server</text>
<text transform="translate(573 572.3) scale(0.885 1)">3U Server</text>
<text transform="translate(573 604.3) scale(0.885 1)">UPS</text>
<text transform="translate(828 185.3) scale(0.885 1)">1U Ethernet Switch/Hub</text>
<text transform="translate(828 196.3) scale(0.885 1)">1U KVM Switch</text>
<text transform="translate(828 206.8) scale(0.885 1)">C3560 Switch</text>
<text transform="translate(828 253.3) scale(0.885 1)">2U Server</text>
<text transform="translate(828 274.3) scale(0.885 1)">2U Server</text>
<text transform="translate(832 300.3) scale(0.885 1)">1U Power Strip</text>
<text transform="translate(828 384.3) scale(0.885 1)">3U Server</text>
<text transform="translate(828 415.3) scale(0.885 1)">3U Server</text>
<text transform="translate(844 457.3) scale(0.885 1)">1U Patch Panel</text>
<text transform="translate(828 478.3) scale(0.885 1)">1U Patch Panel</text>
<text transform="translate(828 504.3) scale(0.885 1)">2U RAID Array</text>
<text transform="translate(828 541.3) scale(0.885 1)">3U Server</text>
<text transform="translate(828 604.3) scale(0.885 1)">UPS</text>
</g>
</g>
</defs>
<g clip-path="url(#cSlide)" style="color:#2e2e2e"><use href="#slidecontent"/></g>
<g clip-path="url(#cT1)" style="color:#707070"><use href="#slidecontent" transform="translate(-37.70 119.68) scale(0.2007)"/></g>
<rect x="47.0" y="153" width="2.300" height="92.500" fill="#000" opacity="0.3"/>
<rect x="73.5" y="153" width="2.300" height="92.500" fill="#000" opacity="0.3"/>
<rect x="49.3" y="153" width="24.2" height="2.200" fill="#000" opacity="0.25"/>
<rect x="47.0" y="245.300" width="28.8" height="1.700" fill="#000" opacity="0.55"/>
<rect x="99.0" y="153" width="2.300" height="92.500" fill="#000" opacity="0.3"/>
<rect x="125.7" y="153" width="2.300" height="92.500" fill="#000" opacity="0.3"/>
<rect x="101.3" y="153" width="24.4" height="2.200" fill="#000" opacity="0.25"/>
<rect x="99.0" y="245.300" width="29.0" height="1.700" fill="#000" opacity="0.55"/>
<rect x="49.300" y="186" width="24.200" height="59" fill="#000" opacity="0.14"/>
<rect x="101.300" y="155.200" width="24.400" height="90" fill="#000" opacity="0.12"/>
<g>
<rect x="100.2" y="285.2" width="33.6" height="92.6" fill="#4a4a4a" />
<rect x="100.2" y="285.2" width="33.6" height="90.4" fill="#6e6e6e" />
<rect x="100.2" y="285.2" width="3.2" height="90.4" fill="#707070" />
<rect x="130.6" y="285.2" width="3.2" height="90.4" fill="#6c6c6c" />
<rect x="103.4" y="287" width="27.2" height="86" fill="#3e3e3e" />
<rect x="104" y="287.6" width="26" height="4.8" fill="#555" />
<rect x="105" y="288.2" width="3.4" height="3.6" fill="#262626" />
<rect x="110" y="288.2" width="3.4" height="3.6" fill="#262626" />
<rect x="115" y="288.2" width="3.4" height="3.6" fill="#262626" />
<rect x="120" y="288.2" width="3.4" height="3.6" fill="#262626" />
<rect x="125" y="288.2" width="3.4" height="3.6" fill="#262626" />
<rect x="104" y="293" width="26" height="4.8" fill="#555" />
<rect x="105" y="293.6" width="3.4" height="3.6" fill="#262626" />
<rect x="110" y="293.6" width="3.4" height="3.6" fill="#262626" />
<rect x="115" y="293.6" width="3.4" height="3.6" fill="#262626" />
<rect x="120" y="293.6" width="3.4" height="3.6" fill="#262626" />
<rect x="125" y="293.6" width="3.4" height="3.6" fill="#262626" />
<rect x="104" y="298.4" width="26" height="4.8" fill="#555" />
<rect x="105" y="299" width="3.4" height="3.6" fill="#262626" />
<rect x="110" y="299" width="3.4" height="3.6" fill="#262626" />
<rect x="115" y="299" width="3.4" height="3.6" fill="#262626" />
<rect x="120" y="299" width="3.4" height="3.6" fill="#262626" />
<rect x="125" y="299" width="3.4" height="3.6" fill="#262626" />
<rect x="104" y="303.8" width="26" height="4.8" fill="#555" />
<rect x="105" y="304.4" width="3.4" height="3.6" fill="#262626" />
<rect x="110" y="304.4" width="3.4" height="3.6" fill="#262626" />
<rect x="115" y="304.4" width="3.4" height="3.6" fill="#262626" />
<rect x="120" y="304.4" width="3.4" height="3.6" fill="#262626" />
<rect x="125" y="304.4" width="3.4" height="3.6" fill="#262626" />
<rect x="104" y="309.4" width="26" height="4.5" fill="#666" />
<rect x="105.4" y="310.8" width="4.6" height="2.4" fill="#8c8c8c" />
<rect x="111.6" y="310.8" width="4.6" height="2.4" fill="#8c8c8c" />
<rect x="117.8" y="310.8" width="4.6" height="2.4" fill="#8c8c8c" />
<rect x="124" y="310.8" width="4.6" height="2.4" fill="#8c8c8c" />
<rect x="104" y="314.4" width="26" height="4.5" fill="#666" />
<rect x="105.4" y="315.8" width="4.6" height="2.4" fill="#8c8c8c" />
<rect x="111.6" y="315.8" width="4.6" height="2.4" fill="#8c8c8c" />
<rect x="117.8" y="315.8" width="4.6" height="2.4" fill="#8c8c8c" />
<rect x="124" y="315.8" width="4.6" height="2.4" fill="#8c8c8c" />
<rect x="104" y="319.6" width="26" height="5.6" fill="#5a5a5a" />
<rect x="104.8" y="320.4" width="3.6" height="4.2" fill="#333" />
<rect x="109.8" y="320.4" width="3.6" height="4.2" fill="#333" />
<rect x="114.8" y="320.4" width="3.6" height="4.2" fill="#333" />
<rect x="119.8" y="320.4" width="3.6" height="4.2" fill="#333" />
<rect x="124.8" y="320.4" width="3.6" height="4.2" fill="#333" />
<rect x="104" y="325.2" width="26" height="8.6" fill="#1a1a1a" />
<rect x="105.4" y="326.6" width="3.6" height="1.2" fill="#bdbdbd" />
<rect x="111.6" y="326.6" width="3.6" height="1.2" fill="#bdbdbd" />
<rect x="117.8" y="326.6" width="3.6" height="1.2" fill="#bdbdbd" />
<rect x="124" y="326.6" width="3.6" height="1.2" fill="#bdbdbd" />
<rect x="105.4" y="330.8" width="3.6" height="1.2" fill="#bdbdbd" />
<rect x="111.6" y="330.8" width="3.6" height="1.2" fill="#bdbdbd" />
<rect x="117.8" y="330.8" width="3.6" height="1.2" fill="#bdbdbd" />
<rect x="124" y="330.8" width="3.6" height="1.2" fill="#bdbdbd" />
<rect x="126" y="325.6" width="3" height="1.6" fill="#4aa5ea" />
<rect x="104.4" y="334.6" width="25.2" height="19.8" fill="#a8a8a8" />
<rect x="105.7" y="336" width="22.4" height="17" fill="url(#gScreen)" />
<rect x="104" y="354.4" width="26" height="3.2" fill="#7a7a7a" />
<rect x="104" y="358" width="26" height="6.7" fill="#050505" />
<rect x="104" y="365.7" width="26" height="6.2" fill="#8a8a8a" />
<rect x="104.8" y="366.2" width="11.6" height="5.2" fill="#c6c6c6" />
<rect x="117.6" y="366.2" width="11.6" height="5.2" fill="#c6c6c6" />
<rect x="100.2" y="375.4" width="33.6" height="1.6" fill="#3a3a3a" />
<rect x="100.2" y="377" width="3.2" height="1.2" fill="#222" />
<rect x="130.6" y="377" width="3.2" height="1.2" fill="#222" />
<path d="M134.4 290.05h15" stroke="#777" stroke-width="1" stroke-dasharray="1.5 0.45 0.8 0.35 2.1 0.5" opacity="0.6"/>
<path d="M134.4 295.05h15" stroke="#777" stroke-width="1" stroke-dasharray="1.5 0.45 0.8 0.35 2.1 0.5" opacity="0.6"/>
<path d="M134.4 300.05h15" stroke="#777" stroke-width="1" stroke-dasharray="1.5 0.45 0.8 0.35 2.1 0.5" opacity="0.6"/>
<path d="M134.4 305.05h15" stroke="#777" stroke-width="1" stroke-dasharray="1.5 0.45 0.8 0.35 2.1 0.5" opacity="0.6"/>
<path d="M134.4 310.05h15" stroke="#777" stroke-width="1" stroke-dasharray="1.5 0.45 0.8 0.35 2.1 0.5" opacity="0.6"/>
<path d="M134.4 315.25h13" stroke="#777" stroke-width="1" stroke-dasharray="1.5 0.45 0.8 0.35 2.1 0.5" opacity="0.6"/>
<path d="M134.4 322.65h19" stroke="#777" stroke-width="1" stroke-dasharray="1.5 0.45 0.8 0.35 2.1 0.5" opacity="0.6"/>
<path d="M134.4 328.65h4" stroke="#777" stroke-width="1" stroke-dasharray="1.5 0.45 0.8 0.35 2.1 0.5" opacity="0.6"/>
<path d="M134.4 356.65h18" stroke="#777" stroke-width="1" stroke-dasharray="1.5 0.45 0.8 0.35 2.1 0.5" opacity="0.6"/>
<path d="M134.4 369.25h4" stroke="#777" stroke-width="1" stroke-dasharray="1.5 0.45 0.8 0.35 2.1 0.5" opacity="0.6"/>
</g>
<g>
<rect x="98.1" y="430" width="34.7" height="67.7" fill="#6e6e6e" />
<rect x="98.1" y="430" width="3.6" height="64" fill="#8e8e8e" />
<rect x="99" y="432.4" width="1.6" height="1" fill="#e8e8e8" />
<rect x="99" y="435.2" width="1.6" height="1" fill="#e8e8e8" />
<rect x="99" y="438" width="1.6" height="1" fill="#e8e8e8" />
<rect x="99" y="440.8" width="1.6" height="1" fill="#e8e8e8" />
<rect x="99" y="443.6" width="1.6" height="1" fill="#e8e8e8" />
<rect x="99" y="446.4" width="1.6" height="1" fill="#e8e8e8" />
<rect x="99" y="449.2" width="1.6" height="1" fill="#e8e8e8" />
<rect x="99" y="452" width="1.6" height="1" fill="#e8e8e8" />
<rect x="99" y="454.8" width="1.6" height="1" fill="#e8e8e8" />
<rect x="99" y="457.6" width="1.6" height="1" fill="#e8e8e8" />
<rect x="99" y="460.4" width="1.6" height="1" fill="#e8e8e8" />
<rect x="99" y="463.2" width="1.6" height="1" fill="#e8e8e8" />
<rect x="99" y="466" width="1.6" height="1" fill="#e8e8e8" />
<rect x="99" y="468.8" width="1.6" height="1" fill="#e8e8e8" />
<rect x="99" y="471.6" width="1.6" height="1" fill="#e8e8e8" />
<rect x="99" y="474.4" width="1.6" height="1" fill="#e8e8e8" />
<rect x="99" y="477.2" width="1.6" height="1" fill="#e8e8e8" />
<rect x="99" y="480" width="1.6" height="1" fill="#e8e8e8" />
<rect x="99" y="482.8" width="1.6" height="1" fill="#e8e8e8" />
<rect x="99" y="485.6" width="1.6" height="1" fill="#e8e8e8" />
<rect x="99" y="488.4" width="1.6" height="1" fill="#e8e8e8" />
<rect x="99" y="491.2" width="1.6" height="1" fill="#e8e8e8" />
<rect x="129.4" y="430" width="3.4" height="64" fill="#8a8a8a" />
<rect x="101.7" y="431.4" width="27.7" height="61" fill="#484848" />
<rect x="102" y="432.6" width="27" height="2.4" fill="#8a8a8a" />
<rect x="102" y="435.4" width="27" height="3.6" fill="#6a6a6a" />
<rect x="104" y="436.4" width="1.2" height="1.2" fill="#ddd" />
<rect x="109.2" y="436.4" width="1.2" height="1.2" fill="#ddd" />
<rect x="114.4" y="436.4" width="1.2" height="1.2" fill="#ddd" />
<rect x="119.6" y="436.4" width="1.2" height="1.2" fill="#ddd" />
<rect x="124.8" y="436.4" width="1.2" height="1.2" fill="#ddd" />
<rect x="102" y="439.4" width="27" height="2.4" fill="#5c5c5c" />
<rect x="102" y="442" width="27" height="1.6" fill="#2a2a2a" />
<rect x="102" y="443.8" width="27" height="2.2" fill="#d8d8d8" />
<rect x="103" y="444.3" width="1.4" height="1.2" fill="#555" />
<rect x="105.6" y="444.3" width="1.4" height="1.2" fill="#555" />
<rect x="108.2" y="444.3" width="1.4" height="1.2" fill="#555" />
<rect x="110.8" y="444.3" width="1.4" height="1.2" fill="#555" />
<rect x="113.4" y="444.3" width="1.4" height="1.2" fill="#555" />
<rect x="116" y="444.3" width="1.4" height="1.2" fill="#555" />
<rect x="118.6" y="444.3" width="1.4" height="1.2" fill="#555" />
<rect x="121.2" y="444.3" width="1.4" height="1.2" fill="#555" />
<rect x="123.8" y="444.3" width="1.4" height="1.2" fill="#555" />
<rect x="126.4" y="444.3" width="1.4" height="1.2" fill="#555" />
<rect x="103.9" y="447.9" width="23.2" height="19.8" fill="#a6a6a6" />
<rect x="105.1" y="449.2" width="21.2" height="16.8" fill="url(#gScreen)" />
<rect x="102" y="468" width="27" height="2.6" fill="#7a7a7a" />
<rect x="102" y="471" width="27" height="5" fill="#686868" />
<rect x="104.4" y="472" width="4" height="3" fill="#8a8a8a" />
<rect x="110.4" y="472" width="4" height="3" fill="#8a8a8a" />
<rect x="116.4" y="472" width="4" height="3" fill="#8a8a8a" />
<rect x="122.4" y="472" width="4" height="3" fill="#8a8a8a" />
<rect x="102" y="476" width="27" height="8.6" fill="#222" />
<rect x="104" y="478" width="4.2" height="1.2" fill="#b8b8b8" />
<rect x="110.2" y="478" width="4.2" height="1.2" fill="#b8b8b8" />
<rect x="116.4" y="478" width="4.2" height="1.2" fill="#b8b8b8" />
<rect x="104" y="481.2" width="4.2" height="1.2" fill="#b8b8b8" />
<rect x="110.2" y="481.2" width="4.2" height="1.2" fill="#b8b8b8" />
<rect x="116.4" y="481.2" width="4.2" height="1.2" fill="#b8b8b8" />
<rect x="122" y="476.6" width="5" height="3.4" fill="#3a3a3a" />
<rect x="102" y="485.8" width="27" height="7.3" fill="#8c8c8c" />
<rect x="102.8" y="486.4" width="12.2" height="6.1" fill="#c4c4c4" />
<rect x="116" y="486.4" width="12.2" height="6.1" fill="#c4c4c4" />
<rect x="98.1" y="494" width="34.7" height="2.4" fill="#3c3c3c" />
<rect x="98.1" y="496.4" width="3.6" height="1.3" fill="#222" />
<rect x="129.2" y="496.4" width="3.6" height="1.3" fill="#222" />
<path d="M133.4 434.25h11" stroke="#777" stroke-width="1" stroke-dasharray="1.5 0.45 0.8 0.35 2.1 0.5" opacity="0.6"/>
<path d="M133.4 436.65h17" stroke="#777" stroke-width="1" stroke-dasharray="1.5 0.45 0.8 0.35 2.1 0.5" opacity="0.6"/>
<path d="M133.4 439.25h10" stroke="#777" stroke-width="1" stroke-dasharray="1.5 0.45 0.8 0.35 2.1 0.5" opacity="0.6"/>
<path d="M133.4 441.85h10" stroke="#777" stroke-width="1" stroke-dasharray="1.5 0.45 0.8 0.35 2.1 0.5" opacity="0.6"/>
<path d="M133.4 444.35h10" stroke="#777" stroke-width="1" stroke-dasharray="1.5 0.45 0.8 0.35 2.1 0.5" opacity="0.6"/>
<path d="M133.4 469.35h8" stroke="#777" stroke-width="1" stroke-dasharray="1.5 0.45 0.8 0.35 2.1 0.5" opacity="0.6"/>
<path d="M133.4 473.25h6" stroke="#777" stroke-width="1" stroke-dasharray="1.5 0.45 0.8 0.35 2.1 0.5" opacity="0.6"/>
<path d="M133.4 479.45h6.5" stroke="#777" stroke-width="1" stroke-dasharray="1.5 0.45 0.8 0.35 2.1 0.5" opacity="0.6"/>
<path d="M133.4 489.25h2.5" stroke="#777" stroke-width="1" stroke-dasharray="1.5 0.45 0.8 0.35 2.1 0.5" opacity="0.6"/>
</g>
<g>
<rect x="96.1" y="566.9" width="34.7" height="66" fill="#8a8a8a" stroke="#555" stroke-width="0.5"/>
<rect x="98.4" y="568.4" width="30.2" height="63" fill="#777" />
<rect x="100" y="569.4" width="27" height="61.4" fill="#e8e8e8" />
<rect x="100.6" y="571.4" width="25.8" height="0.8" fill="#999" />
<rect x="100.6" y="572.6" width="25.8" height="3" fill="#b0b0b0" />
<rect x="101.6" y="573.2" width="3" height="1.8" fill="#4a4a4a" />
<rect x="105.7" y="573.2" width="3" height="1.8" fill="#4a4a4a" />
<rect x="109.8" y="573.2" width="3" height="1.8" fill="#4a4a4a" />
<rect x="113.9" y="573.2" width="3" height="1.8" fill="#4a4a4a" />
<rect x="118" y="573.2" width="3" height="1.8" fill="#4a4a4a" />
<rect x="122.1" y="573.2" width="3" height="1.8" fill="#4a4a4a" />
<rect x="100.6" y="576.4" width="25.8" height="4.6" fill="#cdcdcd" stroke="#999" stroke-width="0.4"/>
<rect x="112.8" y="578.4" width="1.8" height="0.5" fill="#555" />
<rect x="113.45" y="577.8" width="0.5" height="1.8" fill="#555" />
<rect x="102.6" y="583" width="22" height="16.6" fill="#b4b4b4" stroke="#888" stroke-width="0.4"/>
<rect x="104" y="584.5" width="19.5" height="13.6" fill="url(#gScreen)" />
<rect x="100.6" y="600.2" width="25.8" height="1.8" fill="#f4f4f4" />
<rect x="100.6" y="602.4" width="25.8" height="3.8" fill="#cfcfcf" stroke="#999" stroke-width="0.4"/>
<rect x="100.6" y="606.6" width="25.8" height="4.6" fill="#7c7c7c" />
<rect x="100.6" y="611.4" width="25.8" height="4.6" fill="#858585" />
<rect x="102.6" y="607.6" width="3.6" height="2.4" fill="#5a5a5a" />
<rect x="108.4" y="607.6" width="3.6" height="2.4" fill="#5a5a5a" />
<rect x="114.2" y="607.6" width="3.6" height="2.4" fill="#5a5a5a" />
<rect x="120" y="607.6" width="3.6" height="2.4" fill="#5a5a5a" />
<rect x="102.6" y="612.4" width="3.6" height="2.4" fill="#5a5a5a" />
<rect x="108.4" y="612.4" width="3.6" height="2.4" fill="#5a5a5a" />
<rect x="114.2" y="612.4" width="3.6" height="2.4" fill="#5a5a5a" />
<rect x="120" y="612.4" width="3.6" height="2.4" fill="#5a5a5a" />
<rect x="100.6" y="616.4" width="25.8" height="3.2" fill="#e4e4e4" stroke="#aaa" stroke-width="0.3"/>
<rect x="100.6" y="620" width="25.8" height="3.2" fill="#cfcfcf" stroke="#aaa" stroke-width="0.3"/>
<rect x="100.6" y="623.6" width="25.8" height="3.2" fill="#d9d9d9" stroke="#aaa" stroke-width="0.3"/>
<rect x="100.6" y="627.2" width="25.8" height="3.2" fill="#fafafa" />
<rect x="96.1" y="632.4" width="34.7" height="2.4" fill="#333" />
<path d="M131.4 573.85h5.2" stroke="#777" stroke-width="1" stroke-dasharray="1.5 0.45 0.8 0.35 2.1 0.5" opacity="0.6"/>
<path d="M131.4 578.85h6.6" stroke="#777" stroke-width="1" stroke-dasharray="1.5 0.45 0.8 0.35 2.1 0.5" opacity="0.6"/>
<path d="M131.4 603.85h17.4" stroke="#777" stroke-width="1" stroke-dasharray="1.5 0.45 0.8 0.35 2.1 0.5" opacity="0.6"/>
<path d="M131.4 608.65h20" stroke="#777" stroke-width="1" stroke-dasharray="1.5 0.45 0.8 0.35 2.1 0.5" opacity="0.6"/>
<path d="M131.4 611.85h19.4" stroke="#777" stroke-width="1" stroke-dasharray="1.5 0.45 0.8 0.35 2.1 0.5" opacity="0.6"/>
<path d="M131.4 621.25h13.4" stroke="#777" stroke-width="1" stroke-dasharray="1.5 0.45 0.8 0.35 2.1 0.5" opacity="0.6"/>
</g>
</svg>
</body></html>
